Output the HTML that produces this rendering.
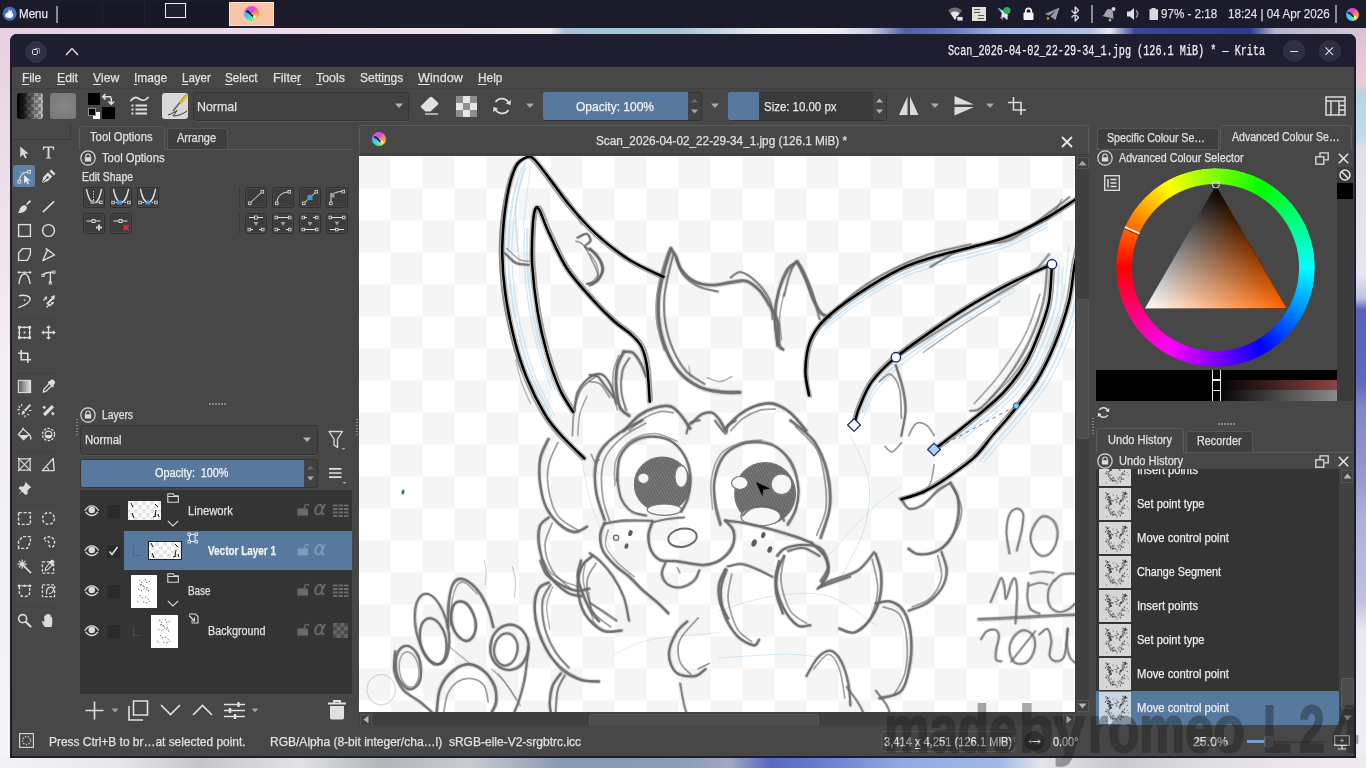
<!DOCTYPE html>
<html lang="en"><head><meta charset="utf-8"><title>Krita</title>
<style>
*{box-sizing:border-box;margin:0;padding:0}
html,body{width:1366px;height:768px;overflow:hidden;background:#ebe6ec}
body{position:relative;font-family:"Liberation Sans",sans-serif;font-size:13px;color:#dcdcdc;-webkit-font-smoothing:antialiased}
.a{position:absolute}
.t{-webkit-text-stroke:.25px currentColor;position:absolute;white-space:nowrap;line-height:16px;height:16px;transform-origin:0 50%}
svg{position:absolute;overflow:visible}
.ic{fill:none;stroke:#dcdcdc;stroke-width:1.4;stroke-linecap:round;stroke-linejoin:round}
.btn{position:absolute;width:22px;height:21px;background:#3c3c3c;border:1px solid #2f2f2f;border-radius:3px;box-shadow:0 0 0 .5px #555 inset}
u{text-decoration:underline;text-underline-offset:2px;text-decoration-thickness:1px}
</style></head><body>
<!-- desktop wallpaper strips -->
<div class="a" style="left:0;top:28px;width:1366px;height:7px;background:linear-gradient(90deg,#e6d0e2 0,#ead6e4 130px,#eee2ea 455px,#efeaec 550px,#a8c0d8 565px,#9ccadb 610px,#a6c6d6 680px,#e6e8ec 760px,#f0f0f2 830px,#cfcfe6 870px,#5060a8 905px,#6676bc 950px,#a2b2e2 1000px,#b4c0e6 1090px,#e8e8f0 1110px,#3a46a0 1135px,#2c3a98 1250px,#b8b4cc 1275px,#d6ccd6 1366px)"></div>
<div class="a" style="left:0;top:28px;width:12px;height:740px;background:linear-gradient(180deg,#e6d0e2 0,#ecdce8 120px,#f2eef2 330px,#f6f4f6 740px)"></div>
<div class="a" style="left:1354px;top:28px;width:12px;height:740px;background:linear-gradient(180deg,#cdc4d2 0,#e4c4d6 16px,#ecccd8 55px,#b8d4e0 66px,#c0dce6 106px,#e0e0ec 122px,#e6e6f0 247px,#c0c4e4 270px,#5a62b8 282px,#6068bc 353px,#8088c8 380px,#9494d0 440px,#b0b0dc 494px,#c0c0e4 572px,#e8e8f2 602px,#f0eef4 740px)"></div>
<div class="a" style="left:0;top:756px;width:1366px;height:12px;background:linear-gradient(90deg,#f4f2f4 0,#e6e6e8 120px,#c4c6c8 200px,#e0e2e4 300px,#b2b6ba 380px,#c8ccd0 470px,#8a9ab2 560px,#8e9cb6 683px,#a0a8c2 730px,#5868c0 770px,#6e80d0 830px,#92a8e2 900px,#a4b8e6 1000px,#e2e4e8 1040px,#c8c8d0 1120px,#dcdce0 1200px,#ece4ea 1280px,#f0eaf0 1366px)"></div>
<!-- top panel -->
<div class="a" style="left:0;top:0;width:1366px;height:28px;background:#1b1b2b"></div>
<svg style="left:2px;top:6px" width="16" height="16" viewBox="0 0 16 16"><circle cx="7.600" cy="7.700" r="7" fill="#3f6fc0"/><path d="M3.200 9.800c0-2.400 1.500-3.600 3.200-3.900l.4-2.600 1.300 2 2.100-1.600-.5 2.700c1.400.8 1.900 2.200 1.400 3.500-.8 1.800-2.600 2.300-4.400 2.200-1.900-.1-3.500-1-3.500-2.300z" fill="#f4f6fa"/></svg>
<div class="t" style="transform:scaleX(0.927);left:19.300px;top:6px;font-size:12.500px;color:#e4e4ea">Menu</div>
<div class="a" style="left:56px;top:6px;width:2px;height:17px;background:#8a8a96"></div>
<div class="a" style="left:60px;top:1px;width:168px;height:26px;background:#171726"></div>
<div class="a" style="left:102px;top:1px;width:1px;height:26px;background:#202032"></div>
<div class="a" style="left:144px;top:1px;width:1px;height:26px;background:#202032"></div>
<div class="a" style="left:186px;top:1px;width:1px;height:26px;background:#202032"></div>
<div class="a" style="left:165px;top:3px;width:21px;height:15px;border:1.5px solid #f0f0f4;background:#1e1e32"></div>
<div class="a" style="left:229px;top:2px;width:45px;height:24px;background:#f8c6a6;border:1px solid #fbe0cc"></div>
<div class="a" style="left:243.5px;top:6px;width:15px;height:15px;border-radius:50%;background:conic-gradient(from 20deg,#f040d0 0,#f8a040 22%,#f0e040 34%,#40e8c0 48%,#38c8f8 66%,#c060f0 82%,#f040d0 100%)"></div><svg style="left:243.5px;top:6px" width="15" height="15" viewBox="0 0 14 14"><path d="M1.500 4.500C3 3.500 4.500 4 5.500 5.500L10 10l-1.200 1.200L4.500 7C3 6.500 2 6 1.500 4.500z" fill="#22223a"/><circle cx="9.600" cy="10" r="1.300" fill="#f4f0f4"/></svg>
<!-- tray -->
<svg style="left:947px;top:6px" width="17" height="16" viewBox="0 0 17 16"><path d="M1 4.500C5 .5 11 .5 15 4.500L8 14z" fill="#6c6c78"/><path d="M3.600 7.200C6 5 10 5 12.400 7.200L8 14z" fill="#e6e6ea"/><rect x="10" y="10.500" width="6" height="4.500" fill="#e6e6ea" stroke="#1b1b2b" stroke-width=".8"/></svg>
<div class="a" style="left:972px;top:7px;width:14px;height:14px;background:#e4e0d8"></div>
<div class="a" style="left:974px;top:9px;width:6px;height:1px;background:#555;box-shadow:0 3px 0 #555,4px 6px 0 #555,4px 9px 0 #555"></div>
<svg style="left:997px;top:6px" width="15" height="16" viewBox="0 0 15 16"><path d="M1 2l4 5-1 6 3-2 3 3 1-5-3-3z" fill="#d8e8f4" stroke="#7aa8d0" stroke-width=".8"/><circle cx="10" cy="4.500" r="3.600" fill="#2fae4a"/><path d="M3 11l3 3" stroke="#d04060" stroke-width="1.200"/></svg>
<svg style="left:1023px;top:7px" width="11" height="14" viewBox="0 0 11 14"><path d="M2.800 6V4a2.700 2.700 0 0 1 5.400 0v2" fill="none" stroke="#f0f0f2" stroke-width="1.800"/><rect x=".5" y="5.500" width="10" height="7.500" rx="1" fill="#f4f4f6"/></svg>
<svg style="left:1044px;top:7px" width="16" height="14" viewBox="0 0 16 14"><path d="M15.500.5L.8 7l4.400 1.600L12 3.500 6.500 9.500 11.500 13z" fill="#9a9aa4"/><circle cx="4" cy="11.500" r="1.200" fill="#e0a020"/></svg>
<svg style="left:1070px;top:6px" width="11" height="16" viewBox="0 0 11 16"><path d="M1.500 4.500l7 7L5.200 15V1l3.300 3.500-7 7" fill="none" stroke="#d4d4da" stroke-width="1.400" stroke-linejoin="round"/></svg>
<div class="a" style="left:1091px;top:5px;width:2px;height:18px;background:#8a8a96"></div>
<svg style="left:1101px;top:6px" width="16" height="16" viewBox="0 0 16 16"><path d="M2 11.500c2-1.500 1.500-4 2.500-6C5.500 3.500 7 3 8 3s2.500.5 3.500 2.500c1 2 .5 4.500 2.500 6z" fill="#a4a4ae" transform="rotate(14 8 8)"/><circle cx="9" cy="14" r="1.500" fill="#a4a4ae"/><circle cx="12.500" cy="3" r="2" fill="#d8d8de"/></svg>
<svg style="left:1126px;top:7px" width="14" height="14" viewBox="0 0 14 14"><path d="M1 4.500h3L8 1v12L4 9.500H1z" fill="#e0e0e4"/><path d="M10 3.500a4.500 4.500 0 0 1 0 7" fill="none" stroke="#8a8a96" stroke-width="1.800"/></svg>
<svg style="left:1149px;top:7px" width="10" height="14" viewBox="0 0 10 14"><path d="M2.500 1h4v1.200H9V13H.5V2.200h2z" fill="#dadade"/></svg>
<div class="t" id="bat" style="transform:scaleX(0.894);left:1161px;top:6px;font-size:13px;color:#dedee4">97% - 2:18</div>
<div class="t" id="clk" style="transform:scaleX(0.899);left:1228px;top:6px;font-size:13px;color:#dedee4">18:24 | 04 Apr 2026</div>
<div class="a" style="left:1335px;top:5px;width:2px;height:18px;background:#8a8a96"></div>
<div class="a" style="left:1345.5px;top:7.5px;width:13px;height:13px;border-radius:50%;background:conic-gradient(from 20deg,#f040d0 0,#f8a040 22%,#f0e040 34%,#40e8c0 48%,#38c8f8 66%,#c060f0 82%,#f040d0 100%)"></div><svg style="left:1345.5px;top:7.5px" width="13" height="13" viewBox="0 0 14 14"><path d="M1.500 4.500C3 3.500 4.500 4 5.500 5.500L10 10l-1.200 1.200L4.500 7C3 6.500 2 6 1.500 4.500z" fill="#22223a"/><circle cx="9.600" cy="10" r="1.300" fill="#f4f0f4"/></svg>
<!-- window -->
<div class="a" style="left:10px;top:34px;width:1346px;height:724px;background:#474748;border-radius:7px 7px 0 0;border:2px solid #1e1e30;border-top:none"></div>
<div class="a" style="left:10px;top:34px;width:1346px;height:33px;background:#1e1e30;border-radius:7px 7px 0 0"></div>
<div class="a" style="left:25px;top:41px;width:22px;height:22px;border-radius:50%;background:#303044"></div>
<div class="a" style="left:32.200px;top:49.300px;width:6px;height:6px;border:1.200px solid #d8d8e0;border-radius:1.800px"></div>
<div class="a" style="left:33.800px;top:47.700px;width:6px;height:6px;border:1.200px solid #d8d8e0;border-left-color:transparent;border-bottom-color:transparent;border-radius:1.800px;opacity:.6"></div>
<svg style="left:65px;top:47px" width="14" height="9" viewBox="0 0 14 9"><path d="M1 8l6-6.500L13 8" fill="none" stroke="#e0e0e6" stroke-width="1.400"/></svg>
<div class="t" id="wtitle" style="transform:scaleX(0.726);left:948px;top:43px;font-family:'Liberation Mono',monospace;font-size:14px;color:#f0f0f4">Scan_2026-04-02_22-29-34_1.jpg (126.1 MiB) * — Krita</div>
<div class="a" style="left:1282.500px;top:40px;width:22px;height:22px;border-radius:50%;background:#303044"></div>
<div class="a" style="left:1289.500px;top:50.700px;width:8px;height:1.200px;background:#e0e0e6"></div>
<div class="a" style="left:1318.500px;top:40px;width:22px;height:22px;border-radius:50%;background:#303044"></div>
<svg style="left:1325.300px;top:47px" width="8.400" height="8.400" viewBox="0 0 10 10"><path d="M.5.500l9 9M9.500.5l-9 9" stroke="#e0e0e6" stroke-width="1.300"/></svg>
<!-- menubar -->
<div class="a" style="left:12px;top:88px;width:1342px;height:1px;background:#3f3f40"></div>
<div class="t mn" style="transform:scaleX(0.918);left:22px"><u>F</u>ile</div>
<div class="t mn" style="transform:scaleX(0.937);left:56.500px"><u>E</u>dit</div>
<div class="t mn" style="transform:scaleX(0.939);left:93px"><u>V</u>iew</div>
<div class="t mn" style="transform:scaleX(0.920);left:134px"><u>I</u>mage</div>
<div class="t mn" style="transform:scaleX(0.884);left:181.500px"><u>L</u>ayer</div>
<div class="t mn" style="transform:scaleX(0.899);left:225px"><u>S</u>elect</div>
<div class="t mn" style="transform:scaleX(0.977);left:272.500px">Filte<u>r</u></div>
<div class="t mn" style="transform:scaleX(0.955);left:315.500px"><u>T</u>ools</div>
<div class="t mn" style="transform:scaleX(0.921);left:360px">Setti<u>n</u>gs</div>
<div class="t mn" style="transform:scaleX(0.968);left:418px"><u>W</u>indow</div>
<div class="t mn" style="transform:scaleX(0.916);left:478px"><u>H</u>elp</div>
<style>.mn{top:70px;font-size:13px;color:#e0e0e0}</style>
<!-- toolbar -->
<div class="a" style="left:17px;top:93px;width:26px;height:26px;border-radius:3px;background:linear-gradient(90deg,#000 0,rgba(0,0,0,.85) 25%,rgba(0,0,0,.15) 80%,rgba(0,0,0,0) 100%),conic-gradient(#bdbdbd 25%,#858585 0 50%,#bdbdbd 0 75%,#858585 0) 0 0/7px 7px"></div>
<div class="a" style="left:50px;top:93px;width:26px;height:26px;border-radius:3px;background:radial-gradient(circle at 50% 50%,#868686,#787878)"></div>
<div class="a" style="left:93px;top:111.500px;width:7px;height:7px;background:#fff"></div>
<div class="a" style="left:88px;top:107.500px;width:8px;height:8px;background:#000;border:1px solid #8a8a8a"></div>
<div class="a" style="left:102px;top:107px;width:12.500px;height:12px;background:#000"></div>
<div class="a" style="left:88px;top:93px;width:12px;height:12px;background:#000"></div>
<svg style="left:102px;top:93px" width="13" height="12" viewBox="0 0 13 12"><path d="M3.500 1L.8 3.800 3.500 6.500M.8 3.800H8.500V5M6.500 8.500L9.300 11.300 12 8.500M9.300 11.300V5" fill="none" stroke="#e0e0e0" stroke-width="1.500"/></svg>
<svg style="left:130px;top:96px" width="20" height="20" viewBox="0 0 20 20"><path d="M1 4.500C4 .5 7 1 9.500 3s6 1.500 8.500-1.500" fill="none" stroke="#e0e0e0" stroke-width="1.800" stroke-linecap="round"/><path d="M5.500 9.500H17M5.500 13.500H17M5.500 17.500H17" stroke="#e0e0e0" stroke-width="1.800"/><path d="M1.500 9.500H3.500M1.500 13.500H3.500M1.500 17.500H3.500" stroke="#e0e0e0" stroke-width="1.800"/></svg>
<div class="a" style="left:162px;top:93px;width:26px;height:26px;border-radius:3px;background:#d9d9d9"></div>
<svg style="left:162px;top:93px" width="26" height="26" viewBox="0 0 26 26"><path d="M6 22c4-1 7-3.500 9-4.500l-4 5.500c5 0 10-2 14-5" fill="none" stroke="#333" stroke-width="1"/><path d="M11 18L24 2" stroke="#555" stroke-width="1.200"/><path d="M17.500 9.500L24 1.500l1.500 1.200-6 8z" fill="#e8c818" stroke="#c8a810" stroke-width=".6"/></svg>
<div class="a" style="left:193px;top:91.500px;width:216px;height:29px;border-radius:3px;background:#424243;border:1px solid #343434;box-shadow:0 1px 0 #545454"></div>
<div class="t" style="transform:scaleX(0.919);left:197px;top:98.500px;font-size:13.500px;color:#e0e0e0">Normal</div>
<svg style="left:394px;top:103px" width="10" height="6" viewBox="0 0 10 6"><path d="M1 .5h8L5 5z" fill="#b4b4b4"/></svg>
<!-- eraser -->
<svg style="left:420px;top:96px" width="20" height="20" viewBox="0 0 20 20"><path d="M9.500 1.500L1.200 9.800a1.200 1.200 0 0 0 0 1.700L5.500 15.500h5L18 8.500a1.200 1.200 0 0 0 0-1.700L12.500 1.500a2 2 0 0 0-3 0z" fill="#e2e2e2"/><path d="M5 18h13" stroke="#e2e2e2" stroke-width="1.300"/></svg>
<div class="a" style="left:456px;top:96px;width:21px;height:21px;background:conic-gradient(#e6e6e6 25%,#8e8e8e 0 50%,#e6e6e6 0 75%,#8e8e8e 0) 0 0/14px 14px"></div>
<svg style="left:492px;top:96px" width="20" height="20" viewBox="0 0 20 20"><path d="M17 8A7.500 7.500 0 0 0 3.500 6M3 12a7.500 7.500 0 0 0 13.500 2" fill="none" stroke="#e0e0e0" stroke-width="1.700"/><path d="M14 7.500l4.500 1.500L19 4zM6 12.500L1.500 11 1 16z" fill="#e0e0e0"/></svg>
<svg style="left:525px;top:103px" width="10" height="6" viewBox="0 0 10 6"><path d="M1 .5h8L5 5z" fill="#a8a8a8"/></svg>
<!-- opacity -->
<div class="a" style="left:542.500px;top:91.500px;width:159px;height:29px;border-radius:3px;background:#424243;border:1px solid #343434"></div>
<div class="a" style="left:543px;top:92px;width:145px;height:28px;background:#56799d;border-radius:2px 0 0 2px"></div>
<div class="t" style="transform:scaleX(0.888);left:576px;top:98.500px;font-size:13.500px;color:#f4f4f4">Opacity: 100%</div>
<svg style="left:690px;top:97px" width="9" height="18" viewBox="0 0 9 18"><path d="M1 5.500L4.500 1.500 8 5.500z" fill="#6a6a6a"/><path d="M1 12.500L4.500 16.500 8 12.500z" fill="#a8a8a8"/></svg>
<svg style="left:710px;top:103px" width="10" height="6" viewBox="0 0 10 6"><path d="M1 .5h8L5 5z" fill="#a8a8a8"/></svg>
<!-- size -->
<div class="a" style="left:727.500px;top:91.500px;width:159px;height:29px;border-radius:3px;background:#3a3a3b;border:1px solid #343434"></div>
<div class="a" style="left:728px;top:92px;width:31px;height:28px;background:#56799d;border-radius:2px 0 0 2px"></div>
<div class="a" style="left:873px;top:92px;width:13px;height:28px;background:#444445"></div>
<div class="t" style="transform:scaleX(0.847);left:764px;top:98.500px;font-size:13.500px;color:#e6e6e6">Size: 10.00 px</div>
<svg style="left:875px;top:97px" width="9" height="18" viewBox="0 0 9 18"><path d="M1 5.500L4.500 1.500 8 5.500z" fill="#b4b4b4"/><path d="M1 12.500L4.500 16.500 8 12.500z" fill="#b4b4b4"/></svg>
<!-- mirror -->
<svg style="left:898px;top:95px" width="22" height="22" viewBox="0 0 22 22"><path d="M9.500 1.500V20H1zM12 1.500V20h8.500z" fill="#dcdcdc"/></svg>
<svg style="left:930px;top:103px" width="10" height="6" viewBox="0 0 10 6"><path d="M1 .5h8L5 5z" fill="#a8a8a8"/></svg>
<svg style="left:953px;top:95px" width="22" height="22" viewBox="0 0 22 22"><path d="M1.500 9.500H21L1.500 1zM1.500 12H21L1.500 20.500z" fill="#dcdcdc"/></svg>
<svg style="left:985px;top:103px" width="10" height="6" viewBox="0 0 10 6"><path d="M1 .5h8L5 5z" fill="#a8a8a8"/></svg>
<svg style="left:1007px;top:96px" width="20" height="20" viewBox="0 0 20 20"><path d="M6.500 1V14H19M1 6.500H14V19" fill="none" stroke="#dcdcdc" stroke-width="1.600"/></svg>
<svg style="left:1325px;top:96px" width="21" height="20" viewBox="0 0 21 20"><rect x="1" y="1" width="19" height="18" fill="none" stroke="#dcdcdc" stroke-width="1.500"/><path d="M1 5h19M6 5v14M14 5v14M14 9.500h6M14 14h6" stroke="#dcdcdc" stroke-width="1.500" fill="none"/></svg>
<!-- toolbox -->
<div class="a" style="left:12px;top:124px;width:59px;height:16px;border:1px solid #3a3a3a;border-top:none;border-left:none"></div>
<div class="a" style="left:13px;top:165px;width:22px;height:22px;border-radius:3px;background:#5d82a6"></div>
<div class="a" style="left:16px;top:318px;width:38px;height:1px;background:#404041"></div>
<div class="a" style="left:16px;top:373px;width:38px;height:1px;background:#404041"></div>
<div class="a" style="left:16px;top:451px;width:38px;height:1px;background:#404041"></div>
<div class="a" style="left:16px;top:505px;width:38px;height:1px;background:#404041"></div>
<div class="a" style="left:16px;top:606px;width:38px;height:1px;background:#404041"></div>
<svg style="left:16.5px;top:144.5px" width="15" height="15" viewBox="0 0 16 16"><path d="M3.500 1.500v11.500l3-3 2.200 4.500 1.800-.9-2.200-4.300h4z" fill="#dcdcdc"/></svg>
<svg style="left:40.5px;top:144.5px" width="15" height="15" viewBox="0 0 16 16"><path d="M2 1.500h12v3.500h-1l-.6-2H9v10.200l1.800.5v.8H5.200v-.8L7 13.200V3H3.600L3 5H2z" fill="#dcdcdc"/></svg>
<svg style="left:16.5px;top:168.5px" width="15" height="15" viewBox="0 0 16 16"><path d="M2.500 13.500C2.500 7 5 3.500 12.500 3" stroke="#dcdcdc" fill="none" stroke-width="1.300"/><path d="M3 3.500H12" stroke="#dcdcdc" fill="none" stroke-width=".8" stroke-dasharray="1.500 1.500"/><rect x="1" y="12" width="3" height="3" fill="#5d82a6" stroke="#e8e8e8" stroke-width=".9"/><rect x="11.500" y="1.500" width="3" height="3" fill="#5d82a6" stroke="#e8e8e8" stroke-width=".9"/><path d="M7.500 6.500v9l2.300-2.300 1.700 3.300 1.400-.7-1.700-3.200h3.200z" fill="#e8e8e8"/></svg>
<svg style="left:40.5px;top:168.5px" width="15" height="15" viewBox="0 0 16 16"><path d="M1 15l1.500-6.500 5-5 4.500 4.500-5 5z" fill="#dcdcdc"/><path d="M1.500 14.500l5-5" stroke="#474748" stroke-width="1"/><circle cx="7" cy="9" r="1.300" fill="#474748"/><path d="M9 2.500l2-2 4.500 4.500-2 2z" fill="#dcdcdc"/></svg>
<svg style="left:16.5px;top:198.5px" width="15" height="15" viewBox="0 0 16 16"><path d="M9.500 5.500l4-4.500 1.700 1.600-4.700 4z" fill="#dcdcdc"/><path d="M8.500 6.500l2 2c.5 2-1.500 4.500-4 5.500s-4.500.5-5.500 1c2-2 1-3.500 2.500-5.500s3.500-3 5-3z" fill="#dcdcdc"/></svg>
<svg style="left:40.5px;top:198.5px" width="15" height="15" viewBox="0 0 16 16"><path d="M2 14L14 2.500" stroke="#dcdcdc" fill="none" stroke-width="1.800"/></svg>
<svg style="left:16.5px;top:222.5px" width="15" height="15" viewBox="0 0 16 16"><rect x="1.700" y="1.700" width="12.600" height="12.600" stroke="#dcdcdc" fill="none" stroke-width="1.500"/></svg>
<svg style="left:40.5px;top:222.5px" width="15" height="15" viewBox="0 0 16 16"><circle cx="8" cy="8" r="6.300" stroke="#dcdcdc" fill="none" stroke-width="1.500"/></svg>
<svg style="left:16.5px;top:246.5px" width="15" height="15" viewBox="0 0 16 16"><path d="M1.700 14.300V6.500L6 1.700h8.300v5.800L11 14.300z" stroke="#dcdcdc" fill="none" stroke-width="1.500" stroke-linejoin="round"/></svg>
<svg style="left:40.5px;top:246.5px" width="15" height="15" viewBox="0 0 16 16"><path d="M5 1.500L14.500 8.500 2 14.500 7 2.800" stroke="#dcdcdc" fill="none" stroke-width="1.500" stroke-linejoin="round"/></svg>
<svg style="left:16.5px;top:269.5px" width="15" height="15" viewBox="0 0 16 16"><path d="M2 15C3 8 5 4 8 4s5 4 6 11" stroke="#dcdcdc" fill="none" stroke-width="1.500"/><path d="M2 2.500H14" stroke="#dcdcdc" fill="none" stroke-width="1"/><circle cx="2" cy="2.500" r="1.300" fill="#dcdcdc"/><circle cx="14" cy="2.500" r="1.300" fill="#dcdcdc"/><circle cx="8" cy="3" r="1.300" fill="#dcdcdc"/></svg>
<svg style="left:40.5px;top:269.5px" width="15" height="15" viewBox="0 0 16 16"><path d="M2 5.500C5 2 9 2 13.500 2.500M10 3v11" stroke="#dcdcdc" fill="none" stroke-width="1.500"/><rect x="1" y="4.500" width="2.500" height="2.500" stroke="#dcdcdc" fill="none" stroke-width=".9"/><rect x="12.500" y="1" width="2.500" height="2.500" stroke="#dcdcdc" fill="none" stroke-width=".9"/><rect x="8.700" y="12.500" width="2.500" height="2.500" stroke="#dcdcdc" fill="none" stroke-width=".9"/></svg>
<svg style="left:16.5px;top:293.5px" width="15" height="15" viewBox="0 0 16 16"><path d="M2 2c6-1.500 12 0 12 3.500S8 12 1.500 14.500" stroke="#dcdcdc" fill="none" stroke-width="1.500"/><circle cx="8" cy="6.500" r=".9" fill="#dcdcdc"/></svg>
<svg style="left:40.5px;top:293.5px" width="15" height="15" viewBox="0 0 16 16"><path d="M15 1l-4.500 2 1 1-6 6 1.500 1.500 6-6 1 1z" fill="#dcdcdc"/><path d="M6.500 2.500l-3 1 .8.800-2.300 2.200 1 1 2.300-2.200.8.800zM14 8.500l-1 3-.8-.8-2.200 2.300-1-1 2.200-2.300-.8-.8zM9.500 10l-.5 3.500-1-.8L6.500 15l-1.300-1.300 2.300-1.500-.8-1z" fill="#dcdcdc"/></svg>
<svg style="left:16.5px;top:324.5px" width="15" height="15" viewBox="0 0 16 16"><rect x="2.500" y="2.500" width="11" height="11" stroke="#dcdcdc" fill="none" stroke-width="1.400"/><rect x="1" y="1" width="3" height="3" fill="#dcdcdc"/><rect x="12" y="1" width="3" height="3" fill="#dcdcdc"/><rect x="1" y="12" width="3" height="3" fill="#dcdcdc"/><rect x="12" y="12" width="3" height="3" fill="#dcdcdc"/><rect x="7" y="7" width="2" height="2" fill="#dcdcdc"/><rect x="7" y="1.500" width="2" height="2" fill="#dcdcdc"/><rect x="7" y="12.500" width="2" height="2" fill="#dcdcdc"/><rect x="1.500" y="7" width="2" height="2" fill="#dcdcdc"/><rect x="12.500" y="7" width="2" height="2" fill="#dcdcdc"/></svg>
<svg style="left:40.5px;top:324.5px" width="15" height="15" viewBox="0 0 16 16"><path d="M8 1v14M1 8h14" stroke="#dcdcdc" fill="none" stroke-width="1.500"/><path d="M8 .3l2.500 3h-5zM8 15.700l2.500-3h-5zM.3 8l3-2.500v5zM15.700 8l-3-2.500v5z" fill="#dcdcdc"/></svg>
<svg style="left:16.5px;top:348.5px" width="15" height="15" viewBox="0 0 16 16"><path d="M4.500 1V11.500H15M1 4.500H11.500V15" stroke="#dcdcdc" fill="none" stroke-width="1.700"/></svg>
<svg style="left:16.5px;top:378.5px" width="15" height="15" viewBox="0 0 16 16"><defs><linearGradient id="tg" x1="0" x2="1"><stop offset="0" stop-color="#5a5a5a"/><stop offset="1" stop-color="#e4e4e4"/></linearGradient></defs><rect x="1.500" y="1.500" width="13" height="13" fill="url(#tg)" stroke="#dcdcdc" stroke-width="1.200"/></svg>
<svg style="left:40.5px;top:378.5px" width="15" height="15" viewBox="0 0 16 16"><path d="M10 3.500l2.500 2.500-7 7-3 1 .5-3z" stroke="#dcdcdc" fill="none" stroke-width="1.300"/><path d="M9 2.500l1.500-1.500c1-1 2.500-.5 3.500.5s1.500 2.500.5 3.500L13 6.500l1 1-1.500 1.500-5.500-5.500L8.500 2z" fill="#dcdcdc"/></svg>
<svg style="left:16.5px;top:402.5px" width="15" height="15" viewBox="0 0 16 16"><path d="M13.500 1l-6 6.500 1.500 1.500 6-6.500z" fill="#dcdcdc"/><path d="M7 8l1.500 1.500c0 1.500-1.500 3-4 3 1-1 .5-2 1-3s1-1.500 1.500-1.500z" fill="#dcdcdc"/><path d="M5 1v2.500M1.500 3l1.800 1.800M.5 7H3M11 11.500l1.800 1.800M8.500 13v2.500M13 8h2.500M1.500 12l1.500-1" stroke="#dcdcdc" fill="none" stroke-width="1.200"/></svg>
<svg style="left:40.5px;top:402.5px" width="15" height="15" viewBox="0 0 16 16"><path d="M2 11.500L11.500 2l2.500 2.500L4.500 14z" fill="#dcdcdc"/><path d="M2.300 3.500l2.200 2.200M11.500 10.300l2.200 2.200" stroke="#dcdcdc" fill="none" stroke-width="2.600"/></svg>
<svg style="left:16.5px;top:426.5px" width="15" height="15" viewBox="0 0 16 16"><path d="M6.500 2L1.500 8l5.500 5.500L13 8z" stroke="#dcdcdc" fill="none" stroke-width="1.400"/><path d="M2.500 8.500h9.500L7 13z" fill="#dcdcdc"/><path d="M13 8c1.500 1.500 2.200 3.500 1.500 5.500" stroke="#dcdcdc" fill="none" stroke-width="1.200"/><path d="M6.500 2V.5" stroke="#dcdcdc" fill="none" stroke-width="1.200"/></svg>
<svg style="left:40.5px;top:426.5px" width="15" height="15" viewBox="0 0 16 16"><circle cx="8" cy="8" r="6.500" stroke="#dcdcdc" fill="none" stroke-width="1.400" stroke-dasharray="2.600 1.500"/><circle cx="8" cy="8" r="3.600" stroke="#dcdcdc" fill="none" stroke-width="1.200"/><path d="M4.500 8.500h7a3.500 3.500 0 0 1-7 0z" fill="#dcdcdc"/></svg>
<svg style="left:16.5px;top:456.5px" width="15" height="15" viewBox="0 0 16 16"><rect x="2" y="2" width="12" height="12" stroke="#dcdcdc" fill="none" stroke-width="1.300"/><path d="M1 1l14 14M15 1L1 15" stroke="#dcdcdc" fill="none" stroke-width="1.300"/></svg>
<svg style="left:40.5px;top:456.5px" width="15" height="15" viewBox="0 0 16 16"><path d="M1.500 14.500H14L13 1.500z" stroke="#dcdcdc" fill="none" stroke-width="1.500" stroke-linejoin="round"/><path d="M8 14.500a5 5 0 0 0-2-4" stroke="#dcdcdc" fill="none" stroke-width="1.200"/></svg>
<svg style="left:16.5px;top:480.5px" width="15" height="15" viewBox="0 0 16 16"><path d="M9 .8l6.200 6.200-1.500.5-2.500 2.500.3 3.500L9 15 5.500 11.500 1 15.500l4-4.500L1.500 7.500l1.800-1.800 3.200.3 2-2.500z" fill="#dcdcdc"/></svg>
<svg style="left:16.5px;top:510.5px" width="15" height="15" viewBox="0 0 16 16"><rect x="1.700" y="1.700" width="12.600" height="12.600" stroke="#dcdcdc" fill="none" stroke-width="1.500" stroke-dasharray="3.500 1.700"/></svg>
<svg style="left:40.5px;top:510.5px" width="15" height="15" viewBox="0 0 16 16"><circle cx="8" cy="8" r="6.300" stroke="#dcdcdc" fill="none" stroke-width="1.500" stroke-dasharray="3 1.900"/></svg>
<svg style="left:16.5px;top:534.5px" width="15" height="15" viewBox="0 0 16 16"><path d="M1.700 14.300V6.500L6 1.700h8.300v5.800L11 14.300z" stroke="#dcdcdc" fill="none" stroke-width="1.500" stroke-dasharray="3.200 1.700"/></svg>
<svg style="left:40.5px;top:534.5px" width="15" height="15" viewBox="0 0 16 16"><path d="M3 4.500C5 2 9 1 12 3s3 6 1.500 8.500S8 13 8.500 9.500 6 6 4 6.500" stroke="#dcdcdc" fill="none" stroke-width="1.500" stroke-dasharray="3 1.600"/></svg>
<svg style="left:16.5px;top:558.5px" width="15" height="15" viewBox="0 0 16 16"><path d="M5.500 5.500L15 15" stroke="#dcdcdc" fill="none" stroke-width="1.800"/><path d="M5.500 .5v10M.5 5.500h10M2 2l7 7M9 2L2 9" stroke="#dcdcdc" fill="none" stroke-width="1.300"/></svg>
<svg style="left:40.5px;top:558.5px" width="15" height="15" viewBox="0 0 16 16"><rect x="1.500" y="3" width="12" height="12" stroke="#dcdcdc" fill="none" stroke-width="1.400" stroke-dasharray="3 1.700"/><path d="M10 3.500l2.500 2.500-5.500 5.500-2.500.8.500-2.800z" fill="#474748" stroke="#dcdcdc" stroke-width="1.100"/><path d="M9.500 2.500l1.200-1.200c.8-.8 2-.6 2.800.2s1 2 .2 2.800L12.500 5.500l.8.800-1.200 1.200L8 3.300l1.200-1.200z" fill="#dcdcdc"/></svg>
<svg style="left:16.5px;top:582.5px" width="15" height="15" viewBox="0 0 16 16"><path d="M2.500 4v6c0 3 2 4.500 5.500 4.500s5.500-1.500 5.500-4.500V4" stroke="#dcdcdc" fill="none" stroke-width="1.500" stroke-dasharray="3 1.700"/><path d="M2 3H14" stroke="#dcdcdc" fill="none" stroke-width="1.100"/><circle cx="2.200" cy="3" r="1.500" fill="#dcdcdc"/><circle cx="13.800" cy="3" r="1.500" fill="#dcdcdc"/><circle cx="8" cy="3" r="1.300" fill="#dcdcdc"/></svg>
<svg style="left:40.5px;top:582.5px" width="15" height="15" viewBox="0 0 16 16"><rect x="1.500" y="2" width="13" height="12.500" stroke="#dcdcdc" fill="none" stroke-width="1.400" stroke-dasharray="3 1.700"/><path d="M6 12c-.5-4 1-7 4-7.500s4 2 3 4-3 3-4.500 2.500" stroke="#dcdcdc" fill="none" stroke-width="1.300"/></svg>
<svg style="left:16.5px;top:612.5px" width="15" height="15" viewBox="0 0 16 16"><circle cx="6" cy="6" r="4.300" stroke="#dcdcdc" fill="none" stroke-width="1.700"/><path d="M9.500 9.500L14.500 14.500" stroke="#dcdcdc" fill="none" stroke-width="2.200" stroke-linecap="round"/></svg>
<svg style="left:40.5px;top:612.5px" width="15" height="15" viewBox="0 0 16 16"><path d="M4 15c-1.500-2-2.500-4-3-6 .8-.8 1.700-.3 2.500 1.200V3.500c0-1 1.600-1 1.600 0V2c0-1.200 1.800-1.200 1.800 0v-.3c0-1.200 1.800-1.200 1.800 0V2.500c0-1.100 1.700-1.100 1.700 0V5c0-1 1.600-1 1.600 0v6c0 1.500-.5 3-1 4z" fill="#dcdcdc"/></svg>
<!-- tool options dock -->
<style>
.tab{position:absolute;border:1px solid #5a5a5b;border-bottom:none;border-radius:3px 3px 0 0}
.tabsel{background:#474748}
.tabun{background:#3e3e3f;border-color:#555556}
.dk{font-size:12px;color:#e0e0e0}
</style>
<div class="a" style="left:165px;top:149px;width:188px;height:1px;background:#5a5a5b"></div>
<div class="tab tabsel" style="left:79px;top:125.500px;width:86px;height:24.500px"></div>
<div class="tab tabun" style="left:166.500px;top:127.500px;width:61.500px;height:21.500px"></div>
<div class="t dk" style="transform:scaleX(0.937);left:90px;top:129px">Tool Options</div>
<div class="t dk" style="transform:scaleX(0.913);left:177px;top:130px">Arrange</div>
<svg style="left:79.5px;top:150px" width="16" height="16" viewBox="0 0 16 16"><circle cx="8" cy="8" r="7.200" fill="none" stroke="#dcdcdc" stroke-width="1.200"/><rect x="4.800" y="7.300" width="6.400" height="4.200" fill="#dcdcdc"/><path d="M5.800 7.500V6.200a2.200 2.200 0 0 1 4.400 0v1.300" fill="none" stroke="#dcdcdc" stroke-width="1.100"/></svg>
<div class="t dk" style="transform:scaleX(0.937);left:102px;top:150px">Tool Options</div>
<div class="t dk" style="transform:scaleX(0.869);left:82px;top:169px">Edit Shape</div>
<!-- buttons row 1 left -->
<div class="btn" style="left:83px;top:187px"></div>
<div class="btn" style="left:110px;top:187px"></div>
<div class="btn" style="left:137px;top:187px"></div>
<div class="btn" style="left:83px;top:213px"></div>
<div class="btn" style="left:110px;top:213px"></div>
<svg style="left:84px;top:188px" width="20" height="19" viewBox="0 0 20 19"><path d="M2.500 1.500C4 8 6 13 8 14.500M17.500 1.500C16.500 7 14.500 12 12 14.500" class="ic" stroke-width="1"/><path d="M9.500 3v9M11 14.500h5" stroke="#e0e0e0" stroke-width="1" stroke-dasharray="1.200 1.500" fill="none"/><rect x="6.500" y="12" width="4" height="4" fill="#9a9a9a"/><rect x="15.500" y="13" width="2.600" height="2.600" fill="#474748" stroke="#e0e0e0" stroke-width=".8"/></svg>
<svg style="left:111px;top:188px" width="20" height="19" viewBox="0 0 20 19"><path d="M2.500 1.500C4 9 7 14.500 10 14.500s6-5.500 7.500-13" class="ic" stroke-width="1"/><path d="M1.500 14.500h17" stroke="#e0e0e0" stroke-width="1" stroke-dasharray="1.500 1.500" fill="none"/><rect x="6" y="12.500" width="5" height="4" fill="#2f9fe0"/><rect x=".8" y="13.200" width="2.600" height="2.600" fill="#474748" stroke="#e0e0e0" stroke-width=".8"/><rect x="16.600" y="13.200" width="2.600" height="2.600" fill="#474748" stroke="#e0e0e0" stroke-width=".8"/></svg>
<svg style="left:138px;top:188px" width="20" height="19" viewBox="0 0 20 19"><path d="M2.500 1.500C4 9 7 14.500 10 14.500s6-5.500 7.500-13" class="ic" stroke-width="1"/><path d="M1.500 14.500h17" stroke="#e0e0e0" stroke-width="1" stroke-dasharray="1.500 1.500" fill="none"/><path d="M7 16.500h6L10 11.500z" fill="#2f9fe0"/><rect x=".8" y="13.200" width="2.600" height="2.600" fill="#474748" stroke="#e0e0e0" stroke-width=".8"/><rect x="16.600" y="13.200" width="2.600" height="2.600" fill="#474748" stroke="#e0e0e0" stroke-width=".8"/></svg>
<svg style="left:84px;top:214px" width="20" height="19" viewBox="0 0 20 19"><path d="M2.500 7h14" stroke="#e0e0e0" stroke-width="1"/><rect x="8" y="5.500" width="3" height="3" fill="#474748" stroke="#e0e0e0" stroke-width=".9"/><path d="M15 10.500v6M12 13.500h6" stroke="#d0d0d0" stroke-width="2"/></svg>
<svg style="left:111px;top:214px" width="20" height="19" viewBox="0 0 20 19"><path d="M2.500 7h14" stroke="#e0e0e0" stroke-width="1"/><rect x="8" y="5.500" width="3" height="3" fill="#474748" stroke="#e0e0e0" stroke-width=".9"/><path d="M12.500 11l5 5M17.500 11l-5 5" stroke="#e0304a" stroke-width="1.800"/></svg>
<!-- right group -->
<div class="a" style="left:238.500px;top:187px;width:1px;height:21px;background:#3a3a3b"></div>
<div class="a" style="left:238.500px;top:213px;width:1px;height:21px;background:#3a3a3b"></div>
<div class="btn" style="left:245px;top:187px"></div>
<div class="btn" style="left:272px;top:187px"></div>
<div class="btn" style="left:299px;top:187px"></div>
<div class="btn" style="left:326px;top:187px"></div>
<div class="btn" style="left:245px;top:213px"></div>
<div class="btn" style="left:272px;top:213px"></div>
<div class="btn" style="left:299px;top:213px"></div>
<div class="btn" style="left:326px;top:213px"></div>
<svg style="left:246px;top:188px" width="20" height="19" viewBox="0 0 20 19"><path d="M4 15L16 4" stroke="#e0e0e0" stroke-width="1"/><rect x="2.500" y="14" width="2.600" height="2.600" fill="#3c3c3c" stroke="#e0e0e0" stroke-width=".8"/><rect x="15" y="2.500" width="2.600" height="2.600" fill="#3c3c3c" stroke="#e0e0e0" stroke-width=".8"/></svg>
<svg style="left:273px;top:188px" width="20" height="19" viewBox="0 0 20 19"><path d="M4 15C4 9 8 4 16 4" stroke="#e0e0e0" stroke-width="1" fill="none"/><rect x="2.500" y="14" width="2.600" height="2.600" fill="#3c3c3c" stroke="#e0e0e0" stroke-width=".8"/><rect x="15" y="2.500" width="2.600" height="2.600" fill="#3c3c3c" stroke="#e0e0e0" stroke-width=".8"/></svg>
<svg style="left:300px;top:188px" width="20" height="19" viewBox="0 0 20 19"><path d="M4 15L16 4" stroke="#e0e0e0" stroke-width="1"/><rect x="2.500" y="14" width="2.600" height="2.600" fill="#3c3c3c" stroke="#e0e0e0" stroke-width=".8"/><rect x="15" y="2.500" width="2.600" height="2.600" fill="#3c3c3c" stroke="#e0e0e0" stroke-width=".8"/><rect x="7.500" y="7" width="5" height="5" fill="#2f9fe0"/></svg>
<svg style="left:327px;top:188px" width="20" height="19" viewBox="0 0 20 19"><path d="M4 15V8C6 5 10 3.500 16 3.500" stroke="#e0e0e0" stroke-width="1" fill="none"/><rect x="2.500" y="14" width="2.600" height="2.600" fill="#3c3c3c" stroke="#e0e0e0" stroke-width=".8"/><rect x="15" y="2.300" width="2.600" height="2.600" fill="#3c3c3c" stroke="#e0e0e0" stroke-width=".8"/><rect x="3" y="5" width="4.500" height="4.500" fill="#9a9a9a"/></svg>
<svg style="left:246px;top:214px" width="20" height="19" viewBox="0 0 20 19"><path d="M3 3.500h14" stroke="#e0e0e0" stroke-width="1"/><rect x="8.500" y="2" width="3" height="3" fill="#3c3c3c" stroke="#e0e0e0" stroke-width=".8"/><path d="M7.500 8h5L10 12z" fill="#a0a0a0"/><path d="M3 15.500h14" stroke="#e0e0e0" stroke-width="1" stroke-dasharray="4 6"/><rect x="2" y="14.200" width="2.600" height="2.600" fill="#3c3c3c" stroke="#e0e0e0" stroke-width=".8"/><rect x="15.400" y="14.200" width="2.600" height="2.600" fill="#3c3c3c" stroke="#e0e0e0" stroke-width=".8"/></svg>
<svg style="left:273px;top:214px" width="20" height="19" viewBox="0 0 20 19"><path d="M3 3.500h14" stroke="#e0e0e0" stroke-width="1"/><rect x="2" y="2.200" width="2.600" height="2.600" fill="#3c3c3c" stroke="#e0e0e0" stroke-width=".8"/><rect x="15.400" y="2.200" width="2.600" height="2.600" fill="#3c3c3c" stroke="#e0e0e0" stroke-width=".8"/><path d="M7.500 8h5L10 12z" fill="#a0a0a0"/><path d="M3 15.500h14" stroke="#e0e0e0" stroke-width="1" stroke-dasharray="4 6"/><rect x="2" y="14.200" width="2.600" height="2.600" fill="#3c3c3c" stroke="#e0e0e0" stroke-width=".8"/><rect x="15.400" y="14.200" width="2.600" height="2.600" fill="#3c3c3c" stroke="#e0e0e0" stroke-width=".8"/></svg>
<svg style="left:300px;top:214px" width="20" height="19" viewBox="0 0 20 19"><path d="M3 3.500h14" stroke="#e0e0e0" stroke-width="1" stroke-dasharray="4 6"/><rect x="2" y="2.200" width="2.600" height="2.600" fill="#3c3c3c" stroke="#e0e0e0" stroke-width=".8"/><rect x="15.400" y="2.200" width="2.600" height="2.600" fill="#3c3c3c" stroke="#e0e0e0" stroke-width=".8"/><path d="M7.500 8h5L10 12z" fill="#a0a0a0"/><path d="M3 15.500h14" stroke="#e0e0e0" stroke-width="1"/><rect x="2" y="14.200" width="2.600" height="2.600" fill="#3c3c3c" stroke="#e0e0e0" stroke-width=".8"/><rect x="15.400" y="14.200" width="2.600" height="2.600" fill="#3c3c3c" stroke="#e0e0e0" stroke-width=".8"/></svg>
<svg style="left:327px;top:214px" width="20" height="19" viewBox="0 0 20 19"><path d="M3 3.500h14" stroke="#e0e0e0" stroke-width="1"/><rect x="2" y="2.200" width="2.600" height="2.600" fill="#3c3c3c" stroke="#e0e0e0" stroke-width=".8"/><rect x="15.400" y="2.200" width="2.600" height="2.600" fill="#3c3c3c" stroke="#e0e0e0" stroke-width=".8"/><path d="M7.500 7.500h5L10 11.500z" fill="#a0a0a0"/><path d="M3 15.500h14" stroke="#e0e0e0" stroke-width="1"/><rect x="8.500" y="14.200" width="2.600" height="2.600" fill="#3c3c3c" stroke="#e0e0e0" stroke-width=".8"/></svg>
<!-- splitter dots -->
<div class="a" style="left:209px;top:403px;width:17px;height:2px;background:repeating-linear-gradient(90deg,#8a8a8a 0 1.500px,transparent 1.500px 3px)"></div>
<!-- layers dock -->
<svg style="left:79.500px;top:407px" width="16" height="16" viewBox="0 0 16 16"><circle cx="8" cy="8" r="7.200" fill="none" stroke="#dcdcdc" stroke-width="1.200"/><rect x="4.800" y="7.300" width="6.400" height="4.200" fill="#dcdcdc"/><path d="M5.800 7.500V6.200a2.200 2.200 0 0 1 4.400 0v1.300" fill="none" stroke="#dcdcdc" stroke-width="1.100"/></svg>
<div class="t dk" style="transform:scaleX(0.860);left:102px;top:407px">Layers</div>
<div class="a" style="left:75.500px;top:419px;width:2px;height:16px;background:repeating-linear-gradient(180deg,#8a8a8a 0 1.500px,transparent 1.500px 3px)"></div>
<div class="a" style="left:355.500px;top:419px;width:2px;height:16px;background:repeating-linear-gradient(180deg,#8a8a8a 0 1.500px,transparent 1.500px 3px)"></div>
<div class="a" style="left:80px;top:425px;width:238px;height:29.500px;border-radius:3px;background:#424243;border:1px solid #343434;box-shadow:0 1px 0 #545454"></div>
<div class="t dk" style="transform:scaleX(0.944);left:84.500px;top:432px">Normal</div>
<svg style="left:302px;top:437px" width="10" height="6" viewBox="0 0 10 6"><path d="M1 .5h8L5 5z" fill="#b4b4b4"/></svg>
<svg style="left:328px;top:430px" width="18" height="20" viewBox="0 0 18 20"><path d="M1 1.500h13.500L9.500 9v8.500L6 15V9z" fill="none" stroke="#dcdcdc" stroke-width="1.300" stroke-linejoin="round"/><path d="M13.500 18h4l-2 2z" fill="#a8a8a8"/></svg>
<div class="a" style="left:80px;top:459px;width:238px;height:28.500px;border-radius:3px;background:#424243;border:1px solid #343434"></div>
<div class="a" style="left:80.500px;top:459.500px;width:223.500px;height:27.500px;background:#56799d;border-radius:2px 0 0 2px"></div>
<div class="t dk" style="transform:scaleX(0.907);left:154.500px;top:465px;color:#f4f4f4;word-spacing:3px">Opacity: 100%</div>
<svg style="left:306px;top:464px" width="9" height="18" viewBox="0 0 9 18"><path d="M1 5.500L4.500 1.500 8 5.500z" fill="#6a6a6a"/><path d="M1 12.500L4.500 16.500 8 12.500z" fill="#a8a8a8"/></svg>
<svg style="left:329px;top:467px" width="18" height="20" viewBox="0 0 18 20"><path d="M0 1.800h12.500M0 6h12.500M0 10.200h12.500" stroke="#e0e0e0" stroke-width="1.700"/><path d="M13.500 15h4l-2 2z" fill="#a8a8a8"/></svg>
<!-- list -->
<div class="a" style="left:79.500px;top:490px;width:272.500px;height:204px;background:#343435"></div>
<div class="a" style="left:123.500px;top:530.500px;width:228.500px;height:39.500px;background:#56799d"></div>
<style>
.eye{position:absolute;left:83.500px;width:15.500px;height:11.500px}
.cb{position:absolute;left:106.500px;width:13.500px;height:13px;background:#2a2a2b}
.th{position:absolute;background:#fff}
.chk{background:conic-gradient(#e4e4e4 25%,#fff 0 50%,#e4e4e4 0 75%,#fff 0) 2px 0/8px 8px}
</style>
<svg class="eye" style="top:504.500px" viewBox="0 0 20 14"><path d="M1 7C4 2 7 .8 10 .8S16 2 19 7" fill="none" stroke="#dcdcdc" stroke-width="1.600"/><path d="M2 8.500C5 12.500 7.500 13.200 10 13.200s5-.7 8-4.700" fill="none" stroke="#dcdcdc" stroke-width="1.500"/><circle cx="10" cy="6" r="4.200" fill="#dcdcdc"/></svg>
<svg class="eye" style="top:544.500px" viewBox="0 0 20 14"><path d="M1 7C4 2 7 .8 10 .8S16 2 19 7" fill="none" stroke="#dcdcdc" stroke-width="1.600"/><path d="M2 8.500C5 12.500 7.500 13.200 10 13.200s5-.7 8-4.700" fill="none" stroke="#dcdcdc" stroke-width="1.500"/><circle cx="10" cy="6" r="4.200" fill="#dcdcdc"/></svg>
<svg class="eye" style="top:584.500px" viewBox="0 0 20 14"><path d="M1 7C4 2 7 .8 10 .8S16 2 19 7" fill="none" stroke="#dcdcdc" stroke-width="1.600"/><path d="M2 8.500C5 12.500 7.500 13.200 10 13.200s5-.7 8-4.700" fill="none" stroke="#dcdcdc" stroke-width="1.500"/><circle cx="10" cy="6" r="4.200" fill="#dcdcdc"/></svg>
<svg class="eye" style="top:624.500px" viewBox="0 0 20 14"><path d="M1 7C4 2 7 .8 10 .8S16 2 19 7" fill="none" stroke="#dcdcdc" stroke-width="1.600"/><path d="M2 8.500C5 12.500 7.500 13.200 10 13.200s5-.7 8-4.700" fill="none" stroke="#dcdcdc" stroke-width="1.500"/><circle cx="10" cy="6" r="4.200" fill="#dcdcdc"/></svg>
<div class="cb" style="top:504.500px"></div>
<div class="cb" style="top:544.500px"></div>
<div class="cb" style="top:584.500px"></div>
<div class="cb" style="top:624.500px"></div>
<svg style="left:108px;top:546px" width="11" height="10" viewBox="0 0 11 10"><path d="M1.500 5.500l2.500 3L9.500 1" fill="none" stroke="#e8e8e8" stroke-width="1.500"/></svg>
<!-- row1 linework -->
<div class="th chk" style="left:128px;top:501px;width:33px;height:18.500px"></div>
<svg style="left:128px;top:501px" width="33" height="19" viewBox="0 0 33 19"><path d="M3 2l2 4M4 12l2 5M27 3l3 3M28 9l-1 6M30 13l1 3M25 16l3-1" stroke="#111" stroke-width="1" fill="none"/></svg>
<svg style="left:167px;top:493px" width="12" height="10" viewBox="0 0 12 10"><path d="M.8 2.800V.8h5.500l1 2h4V9.200H.8zM.8 3.500h10" fill="none" stroke="#dcdcdc" stroke-width="1.100"/></svg>
<svg style="left:167px;top:519.500px" width="12" height="7" viewBox="0 0 12 7"><path d="M.8.800L6 6l5.200-5.200" fill="none" stroke="#dcdcdc" stroke-width="1.200"/></svg>
<div class="t dk" style="transform:scaleX(0.899);left:188px;top:503px;font-size:12.500px">Linework</div>
<!-- row2 vector layer -->
<div class="a" style="left:133px;top:546px;width:8px;height:10px;border-left:1px solid #4a6a8a;border-bottom:1px solid #4a6a8a"></div>
<div class="th chk" style="left:147.500px;top:540.500px;width:34px;height:19.500px;border:1px solid #222"></div>
<svg style="left:148px;top:541px" width="33" height="19" viewBox="0 0 33 19"><path d="M3 2l2 4M4 12l2 5M27 3l3 3M28 9l-1 6M30 13l1 3M25 16l3-1" stroke="#111" stroke-width="1" fill="none"/></svg>
<svg style="left:187px;top:532px" width="12" height="12" viewBox="0 0 12 12"><path d="M2.500 2.500h6.500c-1.500 2.500-1.500 4.500 0 7H2.500z" fill="none" stroke="#e8e8e8" stroke-width="1.100"/><rect x="1" y="1" width="2.600" height="2.600" fill="#56799d" stroke="#e8e8e8" stroke-width=".9"/><rect x="8" y="1" width="2.600" height="2.600" fill="#56799d" stroke="#e8e8e8" stroke-width=".9"/><rect x="1" y="8.400" width="2.600" height="2.600" fill="#56799d" stroke="#e8e8e8" stroke-width=".9"/><rect x="8" y="8.400" width="2.600" height="2.600" fill="#56799d" stroke="#e8e8e8" stroke-width=".9"/></svg>
<div class="t dk" style="transform:scaleX(0.796);left:208px;top:542.500px;font-size:12.500px;font-weight:bold;color:#f2f2f2">Vector Layer 1</div>
<!-- row3 base -->
<div class="th" style="left:131px;top:575px;width:26px;height:33px"></div>
<svg style="left:131px;top:575px" width="26" height="33" viewBox="0 0 26 33"><path d="M8 5l3 2-2 3 4 1M14 4l2 4 3-2M7 14l4 2 3-3 4 3M9 20l2 3 4-1 3 3M6 26l3 2M12 27l5 1 2-2M16 12l2 5M10 9l5 4" stroke="#444" stroke-width=".8" fill="none" stroke-dasharray="1.500 1.800"/></svg>
<svg style="left:167px;top:573px" width="12" height="10" viewBox="0 0 12 10"><path d="M.8 2.800V.8h5.500l1 2h4V9.200H.8zM.8 3.500h10" fill="none" stroke="#dcdcdc" stroke-width="1.100"/></svg>
<svg style="left:167px;top:599.500px" width="12" height="7" viewBox="0 0 12 7"><path d="M.8.800L6 6l5.200-5.200" fill="none" stroke="#dcdcdc" stroke-width="1.200"/></svg>
<div class="t dk" style="transform:scaleX(0.793);left:188.400px;top:583px;font-size:12.500px">Base</div>
<!-- row4 background -->
<div class="a" style="left:133px;top:626px;width:8px;height:10px;border-left:1px solid #4a4a4b;border-bottom:1px solid #4a4a4b"></div>
<div class="th" style="left:151px;top:615px;width:26.500px;height:33px"></div>
<svg style="left:151px;top:615px" width="26" height="33" viewBox="0 0 26 33"><path d="M8 5l3 2-2 3 4 1M14 4l2 4 3-2M7 14l4 2 3-3 4 3M9 20l2 3 4-1 3 3M6 26l3 2M12 27l5 1 2-2M16 12l2 5M10 9l5 4" stroke="#444" stroke-width=".8" fill="none" stroke-dasharray="1.500 1.800"/></svg>
<svg style="left:188px;top:613px" width="11" height="11" viewBox="0 0 11 11"><path d="M1 1h6.500L10 3.500V10H3.500" fill="none" stroke="#dcdcdc" stroke-width="1.100"/><path d="M1 2.500l5.500 5.500M6.500 4.500V8H3" fill="none" stroke="#dcdcdc" stroke-width="1.100"/></svg>
<div class="t dk" style="transform:scaleX(0.863);left:208.400px;top:623px;font-size:12.500px">Background</div>
<svg style="left:297px;top:503px" width="13" height="13" viewBox="0 0 13 13"><rect x=".5" y="5.500" width="10.500" height="7" fill="#6a6a6b"/><path d="M7.500 5.500V3.500a2.300 2.300 0 0 1 4.500-.5" fill="none" stroke="#6a6a6b" stroke-width="1.300"/></svg>
<div class="t" style="left:313.500px;top:500px;font-size:19px;line-height:16px;font-style:italic;color:#6a6a6b;font-family:'DejaVu Sans','Liberation Sans',sans-serif">α</div>
<svg style="left:332.500px;top:504px" width="16" height="13" viewBox="0 0 16 13"><path d="M0 1.500h16M0 5h16M0 8.500h16M0 12h16" stroke="#6a6a6b" stroke-width="2.200" stroke-dasharray="4.500 1"/></svg>
<svg style="left:297px;top:543px" width="13" height="13" viewBox="0 0 13 13"><rect x=".5" y="5.500" width="10.500" height="7" fill="#7f9cb8"/><path d="M7.500 5.500V3.500a2.300 2.300 0 0 1 4.500-.5" fill="none" stroke="#7f9cb8" stroke-width="1.300"/></svg>
<div class="t" style="left:313.500px;top:540px;font-size:19px;line-height:16px;font-style:italic;color:#7f9cb8;font-family:'DejaVu Sans','Liberation Sans',sans-serif">α</div>
<svg style="left:297px;top:583px" width="13" height="13" viewBox="0 0 13 13"><rect x=".5" y="5.500" width="10.500" height="7" fill="#6a6a6b"/><path d="M7.500 5.500V3.500a2.300 2.300 0 0 1 4.500-.5" fill="none" stroke="#6a6a6b" stroke-width="1.300"/></svg>
<div class="t" style="left:313.500px;top:580px;font-size:19px;line-height:16px;font-style:italic;color:#6a6a6b;font-family:'DejaVu Sans','Liberation Sans',sans-serif">α</div>
<svg style="left:332.500px;top:584px" width="16" height="13" viewBox="0 0 16 13"><path d="M0 1.500h16M0 5h16M0 8.500h16M0 12h16" stroke="#6a6a6b" stroke-width="2.200" stroke-dasharray="4.500 1"/></svg>
<svg style="left:297px;top:623px" width="13" height="13" viewBox="0 0 13 13"><rect x=".5" y="5.500" width="10.500" height="7" fill="#6a6a6b"/><path d="M7.500 5.500V3.500a2.300 2.300 0 0 1 4.500-.5" fill="none" stroke="#6a6a6b" stroke-width="1.300"/></svg>
<div class="t" style="left:313.500px;top:620px;font-size:19px;line-height:16px;font-style:italic;color:#6a6a6b;font-family:'DejaVu Sans','Liberation Sans',sans-serif">α</div>
<div class="a" style="left:333px;top:622.5px;width:15px;height:15px;background:conic-gradient(#4a4a4a 25%,#666 0 50%,#4a4a4a 0 75%,#666 0) 0 0/7.500px 7.500px"></div>
<svg style="left:85px;top:701px" width="19" height="19" viewBox="0 0 19 19"><path d="M9.500 .5v18M.5 9.500h18" stroke="#e0e0e0" stroke-width="1.600"/></svg>
<svg style="left:111px;top:708px" width="8" height="5" viewBox="0 0 8 5"><path d="M.5.500h7L4 4.500z" fill="#a0a0a0"/></svg>
<svg style="left:128px;top:700px" width="21" height="21" viewBox="0 0 21 21"><path d="M5.500 1h14v14h-14z" fill="none" stroke="#e0e0e0" stroke-width="1.600"/><path d="M1 6v14h14" fill="none" stroke="#e0e0e0" stroke-width="1.600"/></svg>
<svg style="left:159.500px;top:704px" width="21" height="12" viewBox="0 0 21 12"><path d="M1 1l9.500 9.500L20 1" fill="none" stroke="#e0e0e0" stroke-width="1.600"/></svg>
<svg style="left:191.500px;top:704px" width="21" height="12" viewBox="0 0 21 12"><path d="M1 11l9.500-9.500L20 11" fill="none" stroke="#e0e0e0" stroke-width="1.600"/></svg>
<svg style="left:224px;top:701px" width="21" height="19" viewBox="0 0 21 19"><path d="M0 3.500h21M0 9.500h21M0 15.500h21" stroke="#e0e0e0" stroke-width="1.700"/><path d="M14.500 1v5M6 7v5M11 13v5" stroke="#e0e0e0" stroke-width="2.400"/></svg>
<svg style="left:251px;top:708px" width="8" height="5" viewBox="0 0 8 5"><path d="M.5.500h7L4 4.500z" fill="#a0a0a0"/></svg>
<svg style="left:328px;top:700px" width="18" height="20" viewBox="0 0 18 20"><path d="M0 3.500h18M6 3V1h6v2" stroke="#e0e0e0" stroke-width="1.800" fill="none"/><path d="M2 6h14v11.500a2 2 0 0 1-2 2H4a2 2 0 0 1-2-2z" fill="#e0e0e0"/></svg>
<!-- canvas -->
<div class="a" style="left:359px;top:124.700px;width:729.500px;height:30.800px;background:#474748;border:1px solid #5a5a5b;border-bottom:1px solid #3a3a3b;border-radius:3px 3px 0 0"></div>
<div class="a" style="left:359px;top:155.500px;width:716.200px;height:556.500px;background:conic-gradient(#fff 25%,#f5f5f5 0 50%,#fff 0 75%,#f5f5f5 0) -.25px .5px/64px 64px"></div>
<svg style="left:359px;top:155.500px" width="716.500" height="557" viewBox="359 155.500 716.500 557"><defs><clipPath id="cv"><rect x="359" y="155.500" width="716.500" height="557"/></clipPath></defs><g clip-path="url(#cv)" fill="none" stroke-linecap="round" stroke-linejoin="round">
<defs><pattern id="ht" width="2.600" height="2.600" patternUnits="userSpaceOnUse" patternTransform="rotate(62)"><rect width="2.600" height="2.600" fill="#545454"/><rect width="2.600" height=".8" fill="#707070"/></pattern></defs>
<ellipse cx="662.2" cy="483.8" rx="27.6" ry="27.1" fill="url(#ht)" stroke="#606060" stroke-width="1.500" opacity=".88"/>
<ellipse cx="643.4" cy="477.8" rx="5.7" ry="5.2" fill="#f6f6f6" stroke="#777" stroke-width="1.200"/>
<ellipse cx="681.2" cy="476.0" rx="6.3" ry="10.9" fill="#f6f6f6" stroke="#777" stroke-width="1.200"/>
<ellipse cx="664.3" cy="509.1" rx="17.2" ry="5.7" fill="#f6f6f6" stroke="#777" stroke-width="1.200"/>
<ellipse cx="765.1" cy="493.0" rx="30.2" ry="30.7" fill="url(#ht)" stroke="#606060" stroke-width="1.500" opacity=".88"/>
<ellipse cx="739.8" cy="482.5" rx="8.3" ry="6.5" fill="#f6f6f6" stroke="#777" stroke-width="1.200"/>
<ellipse cx="781.5" cy="483.8" rx="10.4" ry="10.4" fill="#f6f6f6" stroke="#777" stroke-width="1.200"/>
<ellipse cx="760.7" cy="515.9" rx="19.8" ry="9.4" fill="#f6f6f6" stroke="#777" stroke-width="1.200"/>
<ellipse cx="682.5" cy="537.2" rx="14.3" ry="9.1" transform="rotate(-10 682.5 537.2)" stroke="#686868" stroke-width="2"/>
<ellipse cx="630.4" cy="532.6" rx="2.1" ry="3.1" fill="#5c5c5c" stroke="none" transform="rotate(20 630.4 532.6)"/>
<ellipse cx="626.5" cy="545.6" rx="1.9" ry="2.8" fill="#5c5c5c" stroke="none" transform="rotate(20 626.5 545.6)"/>
<ellipse cx="754.1" cy="542.5" rx="2.5" ry="3.8" fill="#5c5c5c" stroke="none" transform="rotate(20 754.1 542.5)"/>
<ellipse cx="763.3" cy="534.6" rx="2.1" ry="3.1" fill="#5c5c5c" stroke="none" transform="rotate(20 763.3 534.6)"/>
<ellipse cx="769.8" cy="549.0" rx="2.3" ry="3.4" fill="#5c5c5c" stroke="none" transform="rotate(20 769.8 549.0)"/>
<circle cx="616.1" cy="537.2" r="2.600" fill="none" stroke="#666" stroke-width="1.200"/>
<path d="M850.3 435.0C853.3 442.3 866.1 463.6 868.5 478.8C871.0 494.0 869.2 510.4 864.9 526.2C860.6 542.0 846.7 565.7 843.0 573.6" stroke="#a8cfe8" stroke-width="1" opacity="0.5"/>
<path d="M719.0 610.1C728.1 607.6 755.5 597.9 773.7 595.5C791.9 593.1 811.4 590.6 828.4 595.5C845.4 600.3 867.9 619.8 875.8 624.7" stroke="#a8cfe8" stroke-width="1" opacity="0.5"/>
<path d="M719.0 657.5C731.2 656.9 771.9 653.2 791.9 653.8C812.0 654.5 831.5 659.9 839.4 661.1" stroke="#a8cfe8" stroke-width="1" opacity="0.5"/>
<path d="M828.4 555.4C835.7 547.5 860.0 519.5 872.2 507.9C884.3 496.4 896.5 489.7 901.4 486.1" stroke="#a8cfe8" stroke-width="1" opacity="0.4"/>
<path d="M581.5 456.9C583.3 465.4 587.0 491.5 592.4 507.9C597.9 524.4 610.7 547.5 614.3 555.4" stroke="#a8cfe8" stroke-width="1" opacity="0.4"/>
<path d="M614.3 653.8C620.4 651.4 633.3 642.9 650.8 639.3C668.2 635.6 707.6 633.2 719.0 632.0" stroke="#a8cfe8" stroke-width="1" opacity="0.4"/>
<path d="M525.0 162.3C523.4 170.2 516.7 192.7 515.8 209.7C514.9 226.7 518.9 255.3 519.5 264.4" stroke="#a8cfe8" stroke-width="1.5" opacity="0.5"/>
<path d="M530.4 165.9L523.1 227.9" stroke="#a8cfe8" stroke-width="1.2" opacity="0.4"/>
<path d="M1069.1 246.2C1067.3 258.3 1064.9 295.4 1058.2 319.1C1051.5 342.8 1033.9 376.9 1029.0 388.4" stroke="#a8cfe8" stroke-width="1.5" opacity="0.4"/>
<path d="M551.0 415.0C548.0 408.9 538.0 391.3 532.8 378.5C527.6 365.7 523.6 353.0 520.0 338.4C516.4 323.8 512.9 306.2 510.9 291.0C508.9 275.8 508.0 262.4 508.3 247.2C508.6 232.0 510.5 213.2 512.7 199.8C515.0 186.4 520.3 172.5 521.8 167.0" stroke="#a8cfe8" stroke-width="2.2" opacity="0.45"/>
<path d="M554.6 415.6C551.6 409.5 541.6 391.9 536.4 379.1C531.2 366.3 527.2 353.6 523.6 339.0C520.0 324.4 516.5 306.8 514.5 291.6C512.5 276.4 511.6 263.0 511.9 247.8C512.2 232.6 514.1 213.8 516.3 200.4C518.6 187.0 523.9 173.1 525.4 167.6" stroke="#a8cfe8" stroke-width="1.2" opacity="0.5"/>
<path d="M554.6 388.4C552.5 382.3 545.4 364.8 541.8 352.0C538.1 339.2 535.1 326.4 532.7 311.8C530.3 297.2 528.1 278.4 527.2 264.4C526.4 250.4 527.5 234.1 527.6 228.0" stroke="#a8cfe8" stroke-width="2.2" opacity="0.45"/>
<path d="M551.6 388.4C549.5 382.3 542.4 364.8 538.8 352.0C535.1 339.2 532.1 326.4 529.7 311.8C527.3 297.2 525.1 278.4 524.2 264.4C523.4 250.4 524.5 234.1 524.6 228.0" stroke="#a8cfe8" stroke-width="1.2" opacity="0.5"/>
<path d="M824.8 325.0C830.3 320.8 844.8 308.1 857.6 299.6C870.4 291.1 888.0 280.4 901.4 274.0C914.8 267.6 925.6 265.0 937.8 261.3C949.9 257.6 962.1 255.4 974.3 252.0C986.5 248.6 998.7 245.8 1010.8 241.0C1022.9 236.2 1041.0 226.0 1047.0 223.0" stroke="#a8cfe8" stroke-width="2.2" opacity="0.45"/>
<path d="M824.8 328.6C830.3 324.4 844.8 311.7 857.6 303.2C870.4 294.7 888.0 284.0 901.4 277.6C914.8 271.2 925.6 268.6 937.8 264.9C949.9 261.2 962.1 259.0 974.3 255.6C986.5 252.2 998.7 249.4 1010.8 244.6C1022.9 239.8 1041.0 229.6 1047.0 226.6" stroke="#a8cfe8" stroke-width="1.2" opacity="0.5"/>
<path d="M862.4 411.6C864.5 407.3 868.9 394.3 875.0 386.0C881.1 377.7 887.9 370.8 898.9 361.7C909.9 352.6 927.7 340.4 940.8 331.4C953.9 322.4 965.1 315.0 977.3 307.7C989.5 300.4 1007.7 291.0 1013.8 287.6" stroke="#a8cfe8" stroke-width="2.2" opacity="0.45"/>
<path d="M864.2 414.6C866.3 410.3 870.7 397.3 876.8 389.0C882.9 380.7 889.7 373.8 900.7 364.7C911.7 355.6 929.5 343.4 942.6 334.4C955.7 325.4 966.9 318.0 979.1 310.7C991.3 303.4 1009.5 294.0 1015.6 290.6" stroke="#a8cfe8" stroke-width="1.2" opacity="0.5"/>
<path d="M1059.0 265.7C1058.5 271.9 1058.0 291.8 1056.0 302.9C1054.0 313.9 1050.9 321.7 1047.0 332.0C1043.1 342.3 1038.5 354.6 1032.4 364.9C1026.3 375.2 1019.0 384.9 1010.5 394.0C1002.0 403.1 989.8 412.4 981.3 419.6C972.8 426.8 963.0 434.1 959.4 437.0" stroke="#a8cfe8" stroke-width="2.2" opacity="0.45"/>
<path d="M1063.2 266.9C1062.7 273.1 1062.2 293.0 1060.2 304.1C1058.2 315.1 1055.1 322.9 1051.2 333.2C1047.3 343.5 1042.7 355.8 1036.6 366.1C1030.5 376.4 1023.2 386.1 1014.7 395.2C1006.2 404.3 994.0 413.6 985.5 420.8C977.0 428.0 967.2 435.3 963.6 438.2" stroke="#a8cfe8" stroke-width="1.2" opacity="0.5"/>
<path d="M1080.6 267.4C1079.7 273.5 1078.3 290.5 1075.0 303.9C1071.7 317.3 1066.0 334.2 1060.5 347.6C1055.0 361.0 1049.6 372.4 1042.3 384.0C1035.0 395.6 1024.1 408.0 1016.8 417.0C1009.5 426.0 1004.6 430.9 998.5 438.0C992.4 445.1 983.3 456.2 980.3 459.9" stroke="#a8cfe8" stroke-width="2.2" opacity="0.45"/>
<path d="M1084.2 269.2C1083.3 275.3 1081.9 292.3 1078.6 305.7C1075.2 319.1 1069.5 336.1 1064.1 349.4C1058.6 362.8 1053.2 374.2 1045.9 385.8C1038.6 397.4 1027.7 409.8 1020.4 418.8C1013.1 427.8 1008.2 432.7 1002.1 439.8C996.0 446.9 986.9 458.1 983.9 461.7" stroke="#a8cfe8" stroke-width="1.2" opacity="0.5"/>
<path d="M525.0 157.9C522.8 160.5 515.8 165.2 512.2 173.2C508.5 181.3 505.2 193.9 503.1 206.1C500.9 218.2 499.6 232.2 499.4 246.2C499.2 260.2 500.2 275.4 502.0 290.0C503.8 304.5 507.1 320.3 510.4 333.7C513.6 347.1 519.5 364.1 521.3 370.2" stroke="#666" stroke-width="1.5" opacity="0.50"/>
<path d="M504.9 252.7C506.7 254.4 511.9 260.7 515.8 262.6C519.8 264.5 526.5 264.1 528.6 264.4" stroke="#777" stroke-width="3.8" opacity="0.22"/>
<path d="M504.5 251.9C506.4 253.5 512.2 259.5 516.2 261.6C520.2 263.6 526.6 263.7 528.7 264.1" stroke="#6a6a6a" stroke-width="1.3" opacity="0.52"/>
<path d="M504.9 252.7C506.7 254.4 511.9 260.7 515.8 262.6C519.8 264.5 526.5 264.1 528.6 264.4" stroke="#666" stroke-width="2.0" opacity="0.83"/>
<path d="M506.7 248.0C508.8 249.8 515.5 256.8 519.5 259.0C523.4 261.1 528.6 260.5 530.4 260.8" stroke="#666" stroke-width="1.5" opacity="0.55"/>
<path d="M577.8 237.1C579.4 236.5 584.8 232.8 587.0 233.4C589.1 234.0 590.9 238.6 590.6 240.7C590.3 242.8 584.2 244.1 585.1 246.2C586.0 248.3 593.2 249.8 596.1 253.5C599.0 257.1 602.6 263.5 602.6 268.1C602.6 272.6 598.7 278.3 596.1 280.8C593.5 283.4 588.5 283.0 587.0 283.4" stroke="#777" stroke-width="3.8" opacity="0.22"/>
<path d="M576.8 237.1C578.3 236.4 583.7 232.8 585.9 233.3C588.0 233.7 589.7 237.4 589.6 239.7C589.4 242.0 584.0 244.8 585.0 247.0C585.9 249.1 592.2 249.1 595.2 252.8C598.2 256.5 602.8 264.5 603.0 269.1C603.1 273.8 598.7 278.4 596.3 280.6C593.8 282.8 589.5 282.0 588.1 282.3" stroke="#6a6a6a" stroke-width="1.3" opacity="0.52"/>
<path d="M577.8 237.1C579.4 236.5 584.8 232.8 587.0 233.4C589.1 234.0 590.9 238.6 590.6 240.7C590.3 242.8 584.2 244.1 585.1 246.2C586.0 248.3 593.2 249.8 596.1 253.5C599.0 257.1 602.6 263.5 602.6 268.1C602.6 272.6 598.7 278.3 596.1 280.8C593.5 283.4 588.5 283.0 587.0 283.4" stroke="#666" stroke-width="2.0" opacity="0.83"/>
<path d="M576.0 240.7C577.2 241.3 580.6 241.0 583.3 244.4C586.0 247.7 590.0 255.6 592.4 260.8C594.9 265.9 597.9 271.4 597.9 275.4C597.9 279.3 593.3 283.0 592.4 284.5" stroke="#666" stroke-width="1.6" opacity="0.66"/>
<path d="M537.7 206.1C540.2 211.5 546.8 227.9 552.3 238.9C557.8 249.8 563.3 261.4 570.5 271.7C577.8 282.1 587.6 291.8 596.1 300.9C604.6 310.0 617.4 322.2 621.6 326.4" stroke="#666" stroke-width="1.5" opacity="0.50"/>
<path d="M548.7 176.9C552.3 181.1 565.1 194.5 570.5 202.4C576.0 210.3 579.7 220.7 581.5 224.3" stroke="#666" stroke-width="1.4" opacity="0.44"/>
<path d="M574.2 410.3C574.8 407.3 575.4 397.6 577.8 392.1C580.3 386.6 584.8 380.5 588.8 377.5C592.7 374.5 597.9 372.6 601.6 373.8C605.2 375.1 608.2 379.9 610.7 384.8C613.1 389.6 615.2 400.0 616.1 403.0" stroke="#777" stroke-width="3.8" opacity="0.22"/>
<path d="M575.1 409.8C575.4 406.7 574.8 396.4 577.0 391.2C579.2 385.9 584.4 381.1 588.3 378.2C592.3 375.4 597.0 373.0 600.8 374.0C604.6 375.1 608.4 379.8 611.0 384.5C613.6 389.1 615.4 399.1 616.3 402.0" stroke="#6a6a6a" stroke-width="1.3" opacity="0.52"/>
<path d="M574.2 410.3C574.8 407.3 575.4 397.6 577.8 392.1C580.3 386.6 584.8 380.5 588.8 377.5C592.7 374.5 597.9 372.6 601.6 373.8C605.2 375.1 608.2 379.9 610.7 384.8C613.1 389.6 615.2 400.0 616.1 403.0" stroke="#666" stroke-width="2.0" opacity="0.83"/>
<path d="M572.4 435.1C572.7 431.0 572.7 418.1 574.2 410.3C575.7 402.5 577.8 394.2 581.5 388.4C585.1 382.7 593.6 377.8 596.1 375.7" stroke="#666" stroke-width="1.8" opacity="0.66"/>
<path d="M577.8 435.1C578.1 431.6 578.1 420.5 579.7 414.0C581.2 407.4 585.7 398.8 587.0 395.7" stroke="#666" stroke-width="1.5" opacity="0.55"/>
<path d="M515.8 359.3C516.7 362.9 518.9 373.8 521.3 381.1C523.7 388.4 528.9 399.4 530.4 403.0" stroke="#666" stroke-width="1.4" opacity="0.44"/>
<path d="M821.1 322.8C827.2 317.3 845.4 299.1 857.6 290.0C869.8 280.8 881.9 274.1 894.1 268.1C906.2 262.0 917.8 257.6 930.5 253.5C943.3 249.4 964.0 245.3 970.7 243.6" stroke="#777" stroke-width="3.6" opacity="0.17"/>
<path d="M820.1 322.1C826.4 316.7 845.8 298.7 858.0 289.8C870.3 280.8 881.6 274.4 893.6 268.3C905.7 262.1 917.5 257.0 930.4 253.0C943.4 249.0 964.6 245.6 971.4 244.1" stroke="#6a6a6a" stroke-width="1.2" opacity="0.39"/>
<path d="M821.1 322.8C827.2 317.3 845.4 299.1 857.6 290.0C869.8 280.8 881.9 274.1 894.1 268.1C906.2 262.0 917.8 257.6 930.5 253.5C943.3 249.4 964.0 245.3 970.7 243.6" stroke="#666" stroke-width="1.9" opacity="0.61"/>
<path d="M974.3 244.4C980.4 243.4 998.6 244.1 1010.8 238.9C1022.9 233.7 1037.5 220.3 1047.3 213.4C1057.0 206.4 1065.5 199.7 1069.1 196.9" stroke="#777" stroke-width="3.6" opacity="0.17"/>
<path d="M973.7 244.5C979.9 243.7 998.5 245.1 1010.9 239.8C1023.2 234.5 1037.9 220.1 1047.8 212.8C1057.7 205.6 1066.6 198.8 1070.3 196.0" stroke="#6a6a6a" stroke-width="1.2" opacity="0.39"/>
<path d="M974.3 244.4C980.4 243.4 998.6 244.1 1010.8 238.9C1022.9 233.7 1037.5 220.3 1047.3 213.4C1057.0 206.4 1065.5 199.7 1069.1 196.9" stroke="#666" stroke-width="1.9" opacity="0.61"/>
<path d="M930.5 266.2C934.8 263.8 948.8 255.1 956.1 251.7C963.4 248.2 971.3 246.5 974.3 245.5" stroke="#777" stroke-width="3.6" opacity="0.18"/>
<path d="M930.4 266.9C934.5 264.3 948.1 255.1 955.2 251.6C962.4 248.1 970.2 246.8 973.2 245.9" stroke="#6a6a6a" stroke-width="1.2" opacity="0.42"/>
<path d="M930.5 266.2C934.8 263.8 948.8 255.1 956.1 251.7C963.4 248.2 971.3 246.5 974.3 245.5" stroke="#666" stroke-width="1.9" opacity="0.66"/>
<path d="M1014.4 233.4C1019.9 231.0 1039.4 224.6 1047.3 218.8C1055.2 213.1 1059.4 202.1 1061.9 198.8" stroke="#666" stroke-width="1.5" opacity="0.50"/>
<path d="M901.4 353.8C908.7 349.2 929.9 335.8 945.1 326.4C960.3 317.0 978.6 305.8 992.6 297.2C1006.5 288.7 1019.6 282.7 1029.0 275.4C1038.4 268.1 1045.7 257.1 1049.1 253.5" stroke="#777" stroke-width="3.6" opacity="0.15"/>
<path d="M902.0 354.0C909.3 349.3 930.9 335.4 946.0 326.0C961.2 316.6 979.2 305.9 993.0 297.5C1006.9 289.0 1019.7 282.4 1029.2 275.3C1038.7 268.1 1046.5 258.0 1049.9 254.5" stroke="#6a6a6a" stroke-width="1.2" opacity="0.35"/>
<path d="M901.4 353.8C908.7 349.2 929.9 335.8 945.1 326.4C960.3 317.0 978.6 305.8 992.6 297.2C1006.5 288.7 1019.6 282.7 1029.0 275.4C1038.4 268.1 1045.7 257.1 1049.1 253.5" stroke="#666" stroke-width="1.9" opacity="0.55"/>
<path d="M923.3 352.0C929.3 347.7 947.0 334.9 959.7 326.4C972.5 317.9 993.2 305.2 999.8 300.9" stroke="#666" stroke-width="1.5" opacity="0.50"/>
<path d="M1047.3 264.4C1046.7 270.5 1046.7 288.1 1043.6 300.9C1040.6 313.7 1035.1 328.3 1029.0 341.0C1022.9 353.8 1015.0 366.5 1007.1 377.5C999.2 388.4 987.7 401.2 981.6 406.7C975.5 412.1 972.5 409.7 970.7 410.3" stroke="#777" stroke-width="3.8" opacity="0.17"/>
<path d="M1047.2 264.8C1046.4 270.9 1045.5 288.5 1042.6 301.4C1039.6 314.3 1035.2 329.6 1029.4 342.2C1023.6 354.8 1015.9 366.2 1007.9 377.0C999.9 387.8 987.7 401.5 981.3 407.1C974.9 412.6 971.5 409.7 969.5 410.2" stroke="#6a6a6a" stroke-width="1.3" opacity="0.39"/>
<path d="M1047.3 264.4C1046.7 270.5 1046.7 288.1 1043.6 300.9C1040.6 313.7 1035.1 328.3 1029.0 341.0C1022.9 353.8 1015.0 366.5 1007.1 377.5C999.2 388.4 987.7 401.2 981.6 406.7C975.5 412.1 972.5 409.7 970.7 410.3" stroke="#666" stroke-width="2.0" opacity="0.61"/>
<path d="M1040.0 293.6C1037.5 300.3 1032.1 320.3 1025.4 333.7C1018.7 347.1 1008.4 362.3 999.8 373.8C991.3 385.4 978.6 398.2 974.3 403.0" stroke="#666" stroke-width="1.8" opacity="0.55"/>
<path d="M1029.0 352.0C1026.0 356.2 1017.5 369.6 1010.8 377.5C1004.1 385.4 992.6 395.7 988.9 399.4" stroke="#666" stroke-width="1.8" opacity="0.55"/>
<path d="M895.9 364.7C897.1 368.7 901.6 380.8 903.2 388.4C904.8 396.0 906.0 402.5 905.7 410.3C905.4 418.1 902.1 431.0 901.4 435.1" stroke="#777" stroke-width="3.8" opacity="0.22"/>
<path d="M895.1 363.8C896.3 368.0 900.5 381.4 902.1 389.1C903.8 396.7 905.0 401.9 904.9 409.7C904.7 417.5 901.7 431.6 901.1 436.0" stroke="#6a6a6a" stroke-width="1.3" opacity="0.52"/>
<path d="M895.9 364.7C897.1 368.7 901.6 380.8 903.2 388.4C904.8 396.0 906.0 402.5 905.7 410.3C905.4 418.1 902.1 431.0 901.4 435.1" stroke="#666" stroke-width="2.0" opacity="0.83"/>
<path d="M879.5 381.1C881.3 379.9 887.1 372.6 890.4 373.8C893.8 375.1 897.7 381.1 899.5 388.4C901.4 395.7 901.1 412.7 901.4 417.6" stroke="#666" stroke-width="1.8" opacity="0.66"/>
<path d="M908.7 435.1C909.9 433.1 912.9 424.8 916.0 423.1C919.0 421.4 923.9 422.9 926.9 424.9C929.9 426.9 933.0 433.4 934.2 435.1" stroke="#666" stroke-width="1.8" opacity="0.66"/>
<path d="M1074.6 275.4C1073.1 281.4 1069.8 298.8 1065.5 311.8C1061.2 324.9 1055.2 341.0 1049.1 353.8C1043.0 366.5 1036.0 378.1 1029.0 388.4C1022.0 398.8 1010.8 411.2 1007.1 415.8" stroke="#666" stroke-width="1.5" opacity="0.44"/>
<path d="M420.8 665.2C421.3 668.4 421.3 671.9 420.9 674.8C420.6 677.7 419.7 680.6 418.6 682.8C417.4 684.9 415.8 686.7 414.2 687.6C412.5 688.6 410.5 688.9 408.7 688.4C406.8 688.0 404.8 686.7 403.1 684.9C401.4 683.2 399.8 680.6 398.6 677.9C397.4 675.2 396.5 671.8 396.1 668.7C395.6 665.6 395.6 662.1 396.0 659.2C396.4 656.3 397.2 653.3 398.4 651.2C399.5 649.0 401.1 647.3 402.7 646.3C404.4 645.4 406.4 645.1 408.3 645.5C410.1 646.0 412.1 647.3 413.8 649.0C415.5 650.8 417.1 653.3 418.3 656.0C419.5 658.8 420.4 662.1 420.8 665.2z" stroke="#777" stroke-width="4.3" opacity="0.22"/>
<path d="M419.8 665.1C420.2 668.6 421.1 672.6 421.1 675.7C421.0 678.8 420.6 681.7 419.3 683.7C418.1 685.6 415.5 686.5 413.6 687.4C411.8 688.4 409.9 689.9 408.3 689.3C406.7 688.8 405.9 686.1 404.2 684.1C402.5 682.1 399.3 679.8 397.8 677.3C396.4 674.7 395.7 671.8 395.4 668.7C395.1 665.6 395.9 661.6 396.2 658.6C396.5 655.7 396.1 653.0 397.2 651.0C398.2 649.0 400.4 647.3 402.4 646.5C404.5 645.7 407.4 645.5 409.3 646.0C411.2 646.5 412.3 647.8 413.8 649.3C415.4 650.8 417.7 652.3 418.7 655.0C419.7 657.6 419.5 661.7 419.8 665.1z" stroke="#6a6a6a" stroke-width="1.4" opacity="0.52"/>
<path d="M420.8 665.2C421.3 668.4 421.3 671.9 420.9 674.8C420.6 677.7 419.7 680.6 418.6 682.8C417.4 684.9 415.8 686.7 414.2 687.6C412.5 688.6 410.5 688.9 408.7 688.4C406.8 688.0 404.8 686.7 403.1 684.9C401.4 683.2 399.8 680.6 398.6 677.9C397.4 675.2 396.5 671.8 396.1 668.7C395.6 665.6 395.6 662.1 396.0 659.2C396.4 656.3 397.2 653.3 398.4 651.2C399.5 649.0 401.1 647.3 402.7 646.3C404.4 645.4 406.4 645.1 408.3 645.5C410.1 646.0 412.1 647.3 413.8 649.0C415.5 650.8 417.1 653.3 418.3 656.0C419.5 658.8 420.4 662.1 420.8 665.2z" stroke="#666" stroke-width="2.2" opacity="0.83"/>
<path d="M418.7 667.7C419.0 670.2 419.1 673.0 418.8 675.4C418.5 677.8 417.8 680.2 417.0 681.9C416.1 683.7 414.9 685.1 413.6 685.9C412.3 686.6 410.8 686.8 409.3 686.5C407.9 686.1 406.3 685.0 405.0 683.6C403.7 682.2 402.4 680.1 401.5 677.9C400.6 675.6 399.8 672.9 399.5 670.4C399.1 667.8 399.1 665.0 399.3 662.6C399.6 660.2 400.3 657.8 401.1 656.1C402.0 654.4 403.2 652.9 404.5 652.2C405.8 651.4 407.4 651.2 408.8 651.6C410.2 651.9 411.8 653.0 413.1 654.4C414.4 655.8 415.7 657.9 416.6 660.2C417.6 662.4 418.3 665.1 418.7 667.7z" stroke="#666" stroke-width="1.6" opacity="0.55"/>
<path d="M447.5 625.4C448.6 630.4 449.2 636.1 449.2 640.9C449.2 645.7 448.6 650.5 447.5 654.1C446.4 657.6 444.7 660.6 442.8 662.2C440.9 663.8 438.3 664.3 435.9 663.6C433.5 663.0 430.7 660.9 428.3 658.2C425.9 655.4 423.4 651.2 421.4 646.8C419.5 642.5 417.8 637.0 416.7 631.9C415.6 626.8 415.0 621.1 415.0 616.3C414.9 611.5 415.6 606.7 416.6 603.2C417.7 599.7 419.4 596.7 421.4 595.1C423.3 593.5 425.8 593.0 428.2 593.6C430.6 594.3 433.4 596.3 435.8 599.1C438.2 601.9 440.8 606.1 442.7 610.4C444.6 614.8 446.4 620.3 447.5 625.4z" stroke="#777" stroke-width="4.1" opacity="0.21"/>
<path d="M448.4 626.0C449.5 631.0 450.3 637.0 450.1 641.6C449.9 646.3 448.6 650.4 447.3 653.8C445.9 657.3 443.9 661.0 441.8 662.5C439.8 663.9 437.2 663.4 434.9 662.6C432.5 661.7 429.9 660.1 427.6 657.3C425.3 654.5 423.1 650.1 421.1 645.8C419.0 641.4 416.6 636.0 415.5 631.1C414.3 626.1 414.0 620.5 414.0 616.0C414.0 611.5 414.2 607.7 415.5 604.1C416.8 600.5 419.6 596.1 421.6 594.3C423.7 592.4 425.3 592.6 427.6 593.3C429.9 593.9 432.9 595.2 435.5 598.2C438.2 601.3 441.4 607.0 443.5 611.6C445.7 616.3 447.3 621.0 448.4 626.0z" stroke="#6a6a6a" stroke-width="1.4" opacity="0.49"/>
<path d="M447.5 625.4C448.6 630.4 449.2 636.1 449.2 640.9C449.2 645.7 448.6 650.5 447.5 654.1C446.4 657.6 444.7 660.6 442.8 662.2C440.9 663.8 438.3 664.3 435.9 663.6C433.5 663.0 430.7 660.9 428.3 658.2C425.9 655.4 423.4 651.2 421.4 646.8C419.5 642.5 417.8 637.0 416.7 631.9C415.6 626.8 415.0 621.1 415.0 616.3C414.9 611.5 415.6 606.7 416.6 603.2C417.7 599.7 419.4 596.7 421.4 595.1C423.3 593.5 425.8 593.0 428.2 593.6C430.6 594.3 433.4 596.3 435.8 599.1C438.2 601.9 440.8 606.1 442.7 610.4C444.6 614.8 446.4 620.3 447.5 625.4z" stroke="#666" stroke-width="2.1" opacity="0.77"/>
<path d="M445.9 638.1C446.6 641.4 446.9 645.1 446.8 648.3C446.6 651.4 446.0 654.6 445.0 657.0C444.0 659.3 442.5 661.4 440.8 662.5C439.2 663.6 437.2 664.0 435.2 663.7C433.3 663.3 431.1 662.1 429.2 660.3C427.3 658.6 425.4 655.9 424.0 653.1C422.6 650.3 421.4 646.7 420.6 643.4C419.9 640.1 419.6 636.4 419.8 633.2C419.9 630.1 420.6 626.9 421.6 624.5C422.6 622.1 424.1 620.1 425.7 619.0C427.4 617.9 429.4 617.5 431.3 617.8C433.3 618.2 435.5 619.4 437.4 621.2C439.2 622.9 441.1 625.6 442.6 628.4C444.0 631.2 445.2 634.7 445.9 638.1z" stroke="#777" stroke-width="4.3" opacity="0.22"/>
<path d="M445.8 638.0C446.3 641.0 446.0 644.2 445.8 647.3C445.6 650.4 445.3 654.0 444.6 656.4C443.9 658.8 443.4 660.3 441.6 661.7C439.9 663.1 436.1 665.1 434.1 664.8C432.0 664.4 430.9 661.6 429.3 659.5C427.6 657.3 425.5 654.4 424.1 652.0C422.7 649.5 421.3 647.6 420.7 644.6C420.1 641.5 420.6 637.1 420.7 633.7C420.7 630.3 420.3 626.5 421.0 624.2C421.7 621.9 423.2 620.6 424.9 619.7C426.7 618.7 429.4 618.3 431.4 618.5C433.4 618.6 435.0 618.7 436.9 620.5C438.9 622.3 441.8 626.6 443.3 629.5C444.8 632.5 445.4 635.1 445.8 638.0z" stroke="#6a6a6a" stroke-width="1.4" opacity="0.52"/>
<path d="M445.9 638.1C446.6 641.4 446.9 645.1 446.8 648.3C446.6 651.4 446.0 654.6 445.0 657.0C444.0 659.3 442.5 661.4 440.8 662.5C439.2 663.6 437.2 664.0 435.2 663.7C433.3 663.3 431.1 662.1 429.2 660.3C427.3 658.6 425.4 655.9 424.0 653.1C422.6 650.3 421.4 646.7 420.6 643.4C419.9 640.1 419.6 636.4 419.8 633.2C419.9 630.1 420.6 626.9 421.6 624.5C422.6 622.1 424.1 620.1 425.7 619.0C427.4 617.9 429.4 617.5 431.3 617.8C433.3 618.2 435.5 619.4 437.4 621.2C439.2 622.9 441.1 625.6 442.6 628.4C444.0 631.2 445.2 634.7 445.9 638.1z" stroke="#666" stroke-width="2.2" opacity="0.83"/>
<path d="M447.8 626.6C448.0 622.2 447.8 607.8 448.8 600.4C449.8 593.0 451.3 585.7 453.9 582.2C456.4 578.7 459.9 577.8 464.0 579.2C468.0 580.5 474.1 585.4 478.1 590.3C482.1 595.2 485.7 602.4 488.2 608.4C490.7 614.5 492.4 623.6 493.2 626.6" stroke="#777" stroke-width="4.6" opacity="0.22"/>
<path d="M448.7 627.3C448.8 622.9 448.8 608.5 449.6 600.9C450.3 593.4 450.9 586.1 453.2 582.2C455.6 578.4 459.7 576.8 463.6 578.0C467.6 579.3 473.0 584.6 477.0 589.7C481.0 594.9 484.7 602.8 487.6 608.9C490.5 615.0 493.2 623.6 494.3 626.5" stroke="#6a6a6a" stroke-width="1.5" opacity="0.52"/>
<path d="M447.8 626.6C448.0 622.2 447.8 607.8 448.8 600.4C449.8 593.0 451.3 585.7 453.9 582.2C456.4 578.7 459.9 577.8 464.0 579.2C468.0 580.5 474.1 585.4 478.1 590.3C482.1 595.2 485.7 602.4 488.2 608.4C490.7 614.5 492.4 623.6 493.2 626.6" stroke="#666" stroke-width="2.4" opacity="0.83"/>
<path d="M450.8 624.6C451.0 620.9 450.8 609.0 451.9 602.4C452.9 595.8 454.7 588.6 456.9 585.2C459.1 581.9 461.6 580.9 465.0 582.2C468.3 583.5 475.1 591.5 477.1 593.3" stroke="#666" stroke-width="1.6" opacity="0.55"/>
<path d="M474.7 617.7C475.4 620.6 475.8 623.8 475.7 626.5C475.6 629.2 475.1 632.0 474.3 634.1C473.4 636.2 472.1 638.0 470.6 639.0C469.2 640.1 467.4 640.5 465.6 640.3C463.8 640.1 461.8 639.1 460.1 637.6C458.4 636.2 456.6 634.0 455.2 631.6C453.9 629.2 452.7 626.2 452.0 623.4C451.3 620.6 450.9 617.3 451.0 614.6C451.1 611.9 451.6 609.1 452.5 607.0C453.3 604.9 454.6 603.1 456.1 602.1C457.5 601.1 459.4 600.6 461.1 600.8C462.9 601.1 464.9 602.0 466.6 603.5C468.3 604.9 470.1 607.1 471.5 609.5C472.8 611.9 474.0 614.9 474.7 617.7z" stroke="#777" stroke-width="4.6" opacity="0.23"/>
<path d="M475.8 618.9C476.7 621.5 477.2 623.8 476.8 626.2C476.4 628.6 474.7 631.4 473.6 633.4C472.4 635.5 471.2 637.0 469.9 638.3C468.6 639.6 467.4 641.4 465.9 641.2C464.4 641.1 462.6 639.1 460.9 637.6C459.2 636.1 457.3 634.6 455.6 632.3C454.0 630.0 451.6 626.6 451.0 623.8C450.4 620.9 451.6 618.1 452.0 615.3C452.3 612.5 452.5 609.0 453.1 607.0C453.6 604.9 454.0 603.7 455.3 602.8C456.6 601.9 458.6 601.5 460.7 601.6C462.8 601.6 466.0 601.7 467.8 603.2C469.5 604.7 469.9 608.0 471.2 610.6C472.6 613.2 474.8 616.3 475.8 618.9z" stroke="#6a6a6a" stroke-width="1.5" opacity="0.55"/>
<path d="M474.7 617.7C475.4 620.6 475.8 623.8 475.7 626.5C475.6 629.2 475.1 632.0 474.3 634.1C473.4 636.2 472.1 638.0 470.6 639.0C469.2 640.1 467.4 640.5 465.6 640.3C463.8 640.1 461.8 639.1 460.1 637.6C458.4 636.2 456.6 634.0 455.2 631.6C453.9 629.2 452.7 626.2 452.0 623.4C451.3 620.6 450.9 617.3 451.0 614.6C451.1 611.9 451.6 609.1 452.5 607.0C453.3 604.9 454.6 603.1 456.1 602.1C457.5 601.1 459.4 600.6 461.1 600.8C462.9 601.1 464.9 602.0 466.6 603.5C468.3 604.9 470.1 607.1 471.5 609.5C472.8 611.9 474.0 614.9 474.7 617.7z" stroke="#666" stroke-width="2.4" opacity="0.86"/>
<path d="M528.5 648.5C528.2 651.7 527.2 655.2 525.7 658.1C524.3 660.9 522.1 663.6 519.8 665.4C517.4 667.3 514.5 668.6 511.7 669.1C509.0 669.6 505.8 669.3 503.2 668.4C500.6 667.4 497.9 665.6 495.9 663.4C493.9 661.1 492.3 658.1 491.3 655.1C490.4 652.0 490.0 648.4 490.3 645.1C490.6 641.9 491.6 638.4 493.0 635.5C494.5 632.7 496.7 630.0 499.0 628.1C501.4 626.3 504.3 625.0 507.1 624.5C509.8 624.0 512.9 624.3 515.6 625.2C518.2 626.2 520.9 628.0 522.8 630.2C524.8 632.5 526.5 635.5 527.5 638.5C528.4 641.6 528.8 645.2 528.5 648.5z" stroke="#777" stroke-width="4.6" opacity="0.22"/>
<path d="M529.0 647.7C528.7 650.8 526.2 654.2 524.8 657.2C523.5 660.3 523.1 664.1 520.7 666.2C518.4 668.3 513.6 669.5 510.9 669.9C508.1 670.3 506.9 669.8 504.4 668.8C501.8 667.7 497.9 666.0 495.6 663.5C493.3 661.0 491.1 656.9 490.4 653.9C489.7 650.9 491.0 648.4 491.4 645.5C491.9 642.6 491.8 639.3 493.1 636.6C494.3 633.8 496.4 631.2 498.9 629.0C501.3 626.9 505.2 624.5 507.8 623.8C510.5 623.1 512.6 623.6 515.0 624.7C517.4 625.8 520.2 628.2 522.2 630.4C524.2 632.7 525.7 635.5 526.9 638.3C528.0 641.2 529.4 644.5 529.0 647.7z" stroke="#6a6a6a" stroke-width="1.5" opacity="0.52"/>
<path d="M528.5 648.5C528.2 651.7 527.2 655.2 525.7 658.1C524.3 660.9 522.1 663.6 519.8 665.4C517.4 667.3 514.5 668.6 511.7 669.1C509.0 669.6 505.8 669.3 503.2 668.4C500.6 667.4 497.9 665.6 495.9 663.4C493.9 661.1 492.3 658.1 491.3 655.1C490.4 652.0 490.0 648.4 490.3 645.1C490.6 641.9 491.6 638.4 493.0 635.5C494.5 632.7 496.7 630.0 499.0 628.1C501.4 626.3 504.3 625.0 507.1 624.5C509.8 624.0 512.9 624.3 515.6 625.2C518.2 626.2 520.9 628.0 522.8 630.2C524.8 632.5 526.5 635.5 527.5 638.5C528.4 641.6 528.8 645.2 528.5 648.5z" stroke="#666" stroke-width="2.4" opacity="0.83"/>
<path d="M517.5 650.4C517.2 652.8 516.4 655.2 515.4 657.2C514.4 659.2 512.9 661.1 511.4 662.3C509.9 663.6 508.0 664.5 506.3 664.8C504.6 665.1 502.7 664.8 501.2 664.0C499.6 663.3 498.1 661.9 497.0 660.3C495.9 658.7 495.0 656.5 494.5 654.3C494.1 652.1 494.0 649.5 494.4 647.2C494.7 644.9 495.5 642.4 496.5 640.4C497.5 638.4 499.0 636.6 500.5 635.3C502.0 634.0 503.9 633.1 505.6 632.9C507.3 632.6 509.2 632.8 510.7 633.6C512.3 634.3 513.8 635.7 514.9 637.3C516.0 639.0 516.9 641.2 517.4 643.3C517.8 645.5 517.9 648.1 517.5 650.4z" stroke="#777" stroke-width="4.1" opacity="0.21"/>
<path d="M516.7 651.4C516.4 653.8 515.9 655.1 515.1 657.1C514.2 659.1 513.1 661.9 511.6 663.3C510.1 664.7 507.9 665.6 506.2 665.8C504.4 665.9 502.7 665.2 501.2 664.1C499.7 663.0 498.2 660.9 497.0 659.1C495.9 657.4 495.0 655.4 494.4 653.5C493.7 651.7 492.9 650.1 493.2 647.9C493.4 645.7 494.4 642.4 495.7 640.3C497.0 638.3 499.4 636.7 501.0 635.4C502.6 634.2 503.5 633.1 505.1 632.9C506.8 632.7 509.4 633.5 510.9 634.3C512.3 635.0 513.0 636.1 514.0 637.5C515.0 638.9 516.3 640.5 516.8 642.8C517.2 645.1 516.9 649.0 516.7 651.4z" stroke="#6a6a6a" stroke-width="1.4" opacity="0.49"/>
<path d="M517.5 650.4C517.2 652.8 516.4 655.2 515.4 657.2C514.4 659.2 512.9 661.1 511.4 662.3C509.9 663.6 508.0 664.5 506.3 664.8C504.6 665.1 502.7 664.8 501.2 664.0C499.6 663.3 498.1 661.9 497.0 660.3C495.9 658.7 495.0 656.5 494.5 654.3C494.1 652.1 494.0 649.5 494.4 647.2C494.7 644.9 495.5 642.4 496.5 640.4C497.5 638.4 499.0 636.6 500.5 635.3C502.0 634.0 503.9 633.1 505.6 632.9C507.3 632.6 509.2 632.8 510.7 633.6C512.3 634.3 513.8 635.7 514.9 637.3C516.0 639.0 516.9 641.2 517.4 643.3C517.8 645.5 517.9 648.1 517.5 650.4z" stroke="#666" stroke-width="2.1" opacity="0.77"/>
<path d="M528.2 646.8C527.9 649.8 527.3 658.9 526.5 665.0C525.8 671.0 524.9 677.1 523.5 683.1C522.2 689.2 520.0 696.6 518.5 701.3C517.0 706.0 515.1 709.7 514.4 711.4" stroke="#777" stroke-width="4.3" opacity="0.21"/>
<path d="M528.8 646.8C528.5 649.9 527.4 659.6 526.7 665.6C526.0 671.6 525.8 677.0 524.5 683.0C523.2 689.0 520.4 696.5 518.7 701.3C517.1 706.1 515.2 710.1 514.5 711.9" stroke="#6a6a6a" stroke-width="1.4" opacity="0.49"/>
<path d="M528.2 646.8C527.9 649.8 527.3 658.9 526.5 665.0C525.8 671.0 524.9 677.1 523.5 683.1C522.2 689.2 520.0 696.6 518.5 701.3C517.0 706.0 515.1 709.7 514.4 711.4" stroke="#666" stroke-width="2.2" opacity="0.77"/>
<path d="M436.7 711.4C437.2 707.7 437.6 695.6 439.7 689.2C441.9 682.8 445.5 677.2 449.8 673.0C454.2 668.8 460.6 664.6 466.0 664.0C471.4 663.3 477.4 665.5 482.1 669.0C486.8 672.5 491.9 679.8 494.2 685.2C496.6 690.5 496.6 696.9 496.3 701.3C495.9 705.7 492.9 709.7 492.2 711.4" stroke="#777" stroke-width="4.8" opacity="0.23"/>
<path d="M436.6 711.5C437.1 707.9 437.4 696.5 439.7 690.2C442.0 684.0 445.8 678.4 450.3 673.9C454.9 669.5 461.7 664.0 467.0 663.4C472.4 662.7 477.6 666.6 482.3 670.1C486.9 673.6 492.9 679.1 495.1 684.3C497.2 689.5 496.0 696.7 495.4 701.2C494.7 705.6 491.9 709.2 491.2 710.8" stroke="#6a6a6a" stroke-width="1.6" opacity="0.55"/>
<path d="M436.7 711.4C437.2 707.7 437.6 695.6 439.7 689.2C441.9 682.8 445.5 677.2 449.8 673.0C454.2 668.8 460.6 664.6 466.0 664.0C471.4 663.3 477.4 665.5 482.1 669.0C486.8 672.5 491.9 679.8 494.2 685.2C496.6 690.5 496.6 696.9 496.3 701.3C495.9 705.7 492.9 709.7 492.2 711.4" stroke="#666" stroke-width="2.5" opacity="0.86"/>
<path d="M443.8 711.4C444.5 708.4 445.5 698.3 447.8 693.2C450.2 688.2 453.9 683.6 457.9 681.1C461.9 678.6 467.7 677.4 472.0 678.1C476.4 678.8 481.5 681.3 484.2 685.2C486.8 689.0 487.5 698.6 488.2 701.3" stroke="#666" stroke-width="1.8" opacity="0.61"/>
<path d="M395.3 650.8C395.2 654.2 393.0 664.6 394.3 671.0C395.7 677.4 399.2 684.1 403.4 689.2C407.6 694.2 414.8 697.6 419.6 701.3C424.3 705.0 429.6 709.7 431.7 711.4" stroke="#777" stroke-width="4.3" opacity="0.22"/>
<path d="M394.3 651.2C394.4 654.7 393.6 665.6 395.0 672.0C396.4 678.4 398.4 685.0 402.6 689.7C406.7 694.5 414.9 696.6 419.9 700.4C424.9 704.2 430.5 710.5 432.6 712.5" stroke="#6a6a6a" stroke-width="1.4" opacity="0.50"/>
<path d="M395.3 650.8C395.2 654.2 393.0 664.6 394.3 671.0C395.7 677.4 399.2 684.1 403.4 689.2C407.6 694.2 414.8 697.6 419.6 701.3C424.3 705.0 429.6 709.7 431.7 711.4" stroke="#666" stroke-width="2.2" opacity="0.79"/>
<path d="M447.8 644.8C449.8 646.5 455.9 651.5 459.9 654.9C464.0 658.2 470.0 663.3 472.0 665.0" stroke="#666" stroke-width="1.4" opacity="0.44"/>
<path d="M492.2 669.0C494.2 671.0 500.3 676.1 504.3 681.1C508.4 686.2 514.4 696.3 516.4 699.3" stroke="#666" stroke-width="1.5" opacity="0.50"/>
<path d="M498.3 673.0C500.3 675.7 506.7 683.8 510.4 689.2C514.1 694.6 518.8 702.6 520.5 705.3" stroke="#666" stroke-width="1.4" opacity="0.44"/>
<path d="M395.3 689.2C395.3 691.4 394.8 693.8 393.9 695.8C393.0 697.7 391.6 699.7 390.0 701.0C388.4 702.4 386.3 703.5 384.3 703.9C382.4 704.4 380.1 704.4 378.1 703.9C376.1 703.5 374.0 702.4 372.4 701.0C370.8 699.7 369.4 697.7 368.5 695.8C367.6 693.8 367.1 691.4 367.1 689.2C367.1 687.0 367.6 684.6 368.5 682.6C369.4 680.6 370.8 678.7 372.4 677.4C374.0 676.0 376.1 674.9 378.1 674.4C380.1 673.9 382.4 673.9 384.3 674.4C386.3 674.9 388.4 676.0 390.0 677.4C391.6 678.7 393.0 680.6 393.9 682.6C394.8 684.6 395.3 687.0 395.3 689.2z" stroke="#666" stroke-width="1.2" opacity="0.24"/>
<path d="M540.7 560.0C541.7 562.4 543.4 570.1 546.7 574.1C550.1 578.2 555.8 581.5 560.9 584.2C565.9 586.9 572.3 589.6 577.0 590.3C581.7 591.0 587.1 588.6 589.1 588.3" stroke="#777" stroke-width="4.6" opacity="0.22"/>
<path d="M540.0 561.1C541.1 563.3 542.8 570.1 546.5 574.1C550.2 578.1 557.1 582.4 562.0 585.0C567.0 587.7 571.7 589.6 576.2 590.1C580.7 590.6 587.0 588.2 589.2 587.9" stroke="#6a6a6a" stroke-width="1.5" opacity="0.52"/>
<path d="M540.7 560.0C541.7 562.4 543.4 570.1 546.7 574.1C550.1 578.2 555.8 581.5 560.9 584.2C565.9 586.9 572.3 589.6 577.0 590.3C581.7 591.0 587.1 588.6 589.1 588.3" stroke="#666" stroke-width="2.4" opacity="0.83"/>
<path d="M543.7 560.0C544.9 562.0 547.2 568.6 550.8 572.1C554.3 575.6 560.2 578.8 564.9 581.2C569.6 583.5 576.7 585.4 579.0 586.2" stroke="#666" stroke-width="1.6" opacity="0.55"/>
<path d="M548.7 582.2C547.1 583.2 541.0 584.2 538.7 588.3C536.3 592.3 534.6 599.4 534.6 606.4C534.6 613.5 536.3 622.9 538.7 630.6C541.0 638.4 544.7 646.5 548.7 652.9C552.8 659.2 557.5 664.6 562.9 669.0C568.3 673.4 575.0 677.1 581.0 679.1C587.1 681.1 596.0 680.8 599.0 681.1" stroke="#777" stroke-width="4.8" opacity="0.23"/>
<path d="M548.0 581.8C546.5 582.7 541.4 583.0 539.2 587.1C537.0 591.2 535.0 599.1 534.7 606.3C534.5 613.5 535.1 622.5 537.5 630.2C539.9 638.0 545.0 646.2 549.0 652.9C553.1 659.5 556.4 665.6 561.8 670.2C567.3 674.7 575.7 678.5 581.7 680.2C587.8 682.0 595.3 680.5 598.1 680.6" stroke="#6a6a6a" stroke-width="1.6" opacity="0.55"/>
<path d="M548.7 582.2C547.1 583.2 541.0 584.2 538.7 588.3C536.3 592.3 534.6 599.4 534.6 606.4C534.6 613.5 536.3 622.9 538.7 630.6C541.0 638.4 544.7 646.5 548.7 652.9C552.8 659.2 557.5 664.6 562.9 669.0C568.3 673.4 575.0 677.1 581.0 679.1C587.1 681.1 596.0 680.8 599.0 681.1" stroke="#666" stroke-width="2.5" opacity="0.86"/>
<path d="M550.8 584.2C549.4 586.9 543.7 593.3 542.7 600.4C541.7 607.4 542.7 618.2 544.7 626.6C546.7 635.0 550.8 644.1 554.8 650.8C558.8 657.6 566.6 664.3 568.9 667.0" stroke="#777" stroke-width="3.6" opacity="0.18"/>
<path d="M549.7 584.9C548.4 587.3 543.0 592.4 542.1 599.5C541.3 606.6 542.3 619.1 544.5 627.6C546.8 636.1 551.6 643.5 555.6 650.3C559.5 657.0 566.0 665.0 568.1 668.0" stroke="#6a6a6a" stroke-width="1.2" opacity="0.42"/>
<path d="M550.8 584.2C549.4 586.9 543.7 593.3 542.7 600.4C541.7 607.4 542.7 618.2 544.7 626.6C546.7 635.0 550.8 644.1 554.8 650.8C558.8 657.6 566.6 664.3 568.9 667.0" stroke="#666" stroke-width="1.9" opacity="0.66"/>
<path d="M552.8 586.2C551.8 589.3 547.2 597.3 546.7 604.4C546.2 611.5 549.3 624.6 549.8 628.6" stroke="#666" stroke-width="1.5" opacity="0.50"/>
<path d="M581.0 560.0C580.5 562.7 577.7 570.4 578.0 576.1C578.4 581.9 580.9 588.6 583.1 594.3C585.2 600.0 588.5 606.1 591.1 610.5C593.8 614.8 597.7 618.9 599.0 620.6" stroke="#777" stroke-width="4.6" opacity="0.22"/>
<path d="M581.2 560.5C580.5 562.9 576.6 569.5 577.0 575.1C577.4 580.7 581.3 588.1 583.5 594.1C585.7 600.2 587.5 607.0 590.1 611.5C592.7 616.0 597.8 619.7 599.3 621.3" stroke="#6a6a6a" stroke-width="1.5" opacity="0.52"/>
<path d="M581.0 560.0C580.5 562.7 577.7 570.4 578.0 576.1C578.4 581.9 580.9 588.6 583.1 594.3C585.2 600.0 588.5 606.1 591.1 610.5C593.8 614.8 597.7 618.9 599.0 620.6" stroke="#666" stroke-width="2.4" opacity="0.83"/>
<path d="M585.1 564.0C584.7 566.7 582.4 574.1 583.1 580.2C583.7 586.2 588.1 597.0 589.1 600.4" stroke="#666" stroke-width="1.6" opacity="0.55"/>
<path d="M560.9 673.0C559.5 675.1 554.6 680.4 552.8 685.2C550.9 689.9 550.1 696.9 549.8 701.3C549.4 705.7 550.6 709.7 550.8 711.4" stroke="#777" stroke-width="4.6" opacity="0.22"/>
<path d="M559.9 673.9C558.5 675.9 553.4 681.5 551.7 686.0C550.0 690.5 549.8 696.5 549.6 700.9C549.5 705.3 550.7 710.5 550.9 712.4" stroke="#6a6a6a" stroke-width="1.5" opacity="0.52"/>
<path d="M560.9 673.0C559.5 675.1 554.6 680.4 552.8 685.2C550.9 689.9 550.1 696.9 549.8 701.3C549.4 705.7 550.6 709.7 550.8 711.4" stroke="#666" stroke-width="2.4" opacity="0.83"/>
<path d="M564.9 675.1C563.7 677.4 559.3 683.1 557.8 689.2C556.3 695.2 556.1 707.7 555.8 711.4" stroke="#777" stroke-width="3.6" opacity="0.18"/>
<path d="M564.3 674.2C563.3 676.6 559.5 682.5 557.9 688.6C556.3 694.6 555.4 706.9 554.9 710.6" stroke="#6a6a6a" stroke-width="1.2" opacity="0.42"/>
<path d="M564.9 675.1C563.7 677.4 559.3 683.1 557.8 689.2C556.3 695.2 556.1 707.7 555.8 711.4" stroke="#666" stroke-width="1.9" opacity="0.66"/>
<path d="M484.2 560.0C484.5 562.0 486.0 568.1 486.2 572.1C486.3 576.1 485.3 582.2 485.2 584.2" stroke="#666" stroke-width="1.2" opacity="0.28"/>
<path d="M512.4 566.1C512.9 568.4 515.1 575.1 515.4 580.2C515.8 585.2 514.6 593.6 514.4 596.3" stroke="#666" stroke-width="1.2" opacity="0.33"/>
<path d="M548.7 438.6C547.3 441.7 542.2 450.2 540.6 456.9C539.1 463.6 538.8 470.9 539.5 478.8C540.3 486.7 542.0 497.0 545.0 504.3C548.1 511.6 552.9 518.0 557.8 522.5C562.6 527.1 569.3 531.0 574.2 531.7C579.1 532.3 584.8 527.1 587.0 526.2" stroke="#777" stroke-width="4.6" opacity="0.22"/>
<path d="M547.6 437.9C546.4 441.0 541.4 449.7 540.2 456.4C539.0 463.1 539.4 470.4 540.2 478.3C541.0 486.1 542.1 496.3 545.0 503.5C547.9 510.7 552.7 516.9 557.4 521.4C562.2 525.9 568.6 529.7 573.6 530.5C578.6 531.3 585.2 527.0 587.5 526.3" stroke="#6a6a6a" stroke-width="1.5" opacity="0.52"/>
<path d="M548.7 438.6C547.3 441.7 542.2 450.2 540.6 456.9C539.1 463.6 538.8 470.9 539.5 478.8C540.3 486.7 542.0 497.0 545.0 504.3C548.1 511.6 552.9 518.0 557.8 522.5C562.6 527.1 569.3 531.0 574.2 531.7C579.1 532.3 584.8 527.1 587.0 526.2" stroke="#666" stroke-width="2.4" opacity="0.83"/>
<path d="M557.8 442.3C556.3 445.9 550.2 456.3 548.7 464.2C547.1 472.1 547.1 481.2 548.7 489.7C550.2 498.2 552.9 508.6 557.8 515.2C562.6 521.9 574.5 527.4 577.8 529.8" stroke="#666" stroke-width="1.8" opacity="0.61"/>
<path d="M548.7 517.1C547.1 518.6 541.1 521.0 539.5 526.2C538.0 531.4 538.0 540.2 539.5 548.1C541.1 556.0 544.1 566.3 548.7 573.6C553.2 580.9 561.4 588.2 566.9 591.8C572.4 595.5 579.1 594.9 581.5 595.5" stroke="#777" stroke-width="4.6" opacity="0.22"/>
<path d="M547.9 517.0C546.7 518.4 541.9 520.1 540.6 525.2C539.3 530.4 539.0 539.7 540.3 547.9C541.7 556.1 544.3 567.1 548.7 574.4C553.0 581.7 561.1 588.1 566.6 591.9C572.2 595.6 579.4 595.8 581.9 596.6" stroke="#6a6a6a" stroke-width="1.5" opacity="0.52"/>
<path d="M548.7 517.1C547.1 518.6 541.1 521.0 539.5 526.2C538.0 531.4 538.0 540.2 539.5 548.1C541.1 556.0 544.1 566.3 548.7 573.6C553.2 580.9 561.4 588.2 566.9 591.8C572.4 595.5 579.1 594.9 581.5 595.5" stroke="#666" stroke-width="2.4" opacity="0.83"/>
<path d="M552.3 522.5C551.1 526.2 545.0 536.5 545.0 544.4C545.0 552.3 548.1 562.7 552.3 570.0C556.6 577.2 567.5 585.2 570.5 588.2" stroke="#666" stroke-width="1.8" opacity="0.61"/>
<path d="M592.4 555.4C590.6 557.2 583.9 560.8 581.5 566.3C579.1 571.8 577.2 580.3 577.8 588.2C578.5 596.1 580.9 606.7 585.1 613.7C589.4 620.7 597.3 627.4 603.4 630.1C609.5 632.9 618.6 630.1 621.6 630.1" stroke="#777" stroke-width="4.6" opacity="0.22"/>
<path d="M592.1 556.2C590.4 557.9 584.4 561.4 582.0 566.6C579.6 571.9 577.3 580.1 577.6 587.8C578.0 595.5 579.9 605.7 584.1 612.8C588.2 620.0 596.2 628.0 602.3 630.7C608.5 633.5 617.9 629.6 621.0 629.3" stroke="#6a6a6a" stroke-width="1.5" opacity="0.52"/>
<path d="M592.4 555.4C590.6 557.2 583.9 560.8 581.5 566.3C579.1 571.8 577.2 580.3 577.8 588.2C578.5 596.1 580.9 606.7 585.1 613.7C589.4 620.7 597.3 627.4 603.4 630.1C609.5 632.9 618.6 630.1 621.6 630.1" stroke="#666" stroke-width="2.4" opacity="0.83"/>
<path d="M596.1 562.7C594.6 565.7 587.6 573.0 587.0 580.9C586.4 588.8 588.5 602.5 592.4 610.1C596.4 617.7 607.6 623.8 610.7 626.5" stroke="#666" stroke-width="1.8" opacity="0.61"/>
<path d="M588.8 591.8C589.4 596.1 591.2 611.9 592.4 617.4C593.6 622.8 595.5 623.4 596.1 624.7" stroke="#666" stroke-width="1.5" opacity="0.55"/>
<path d="M687.3 621.0C685.4 622.8 679.4 626.5 676.3 632.0C673.3 637.4 669.0 647.2 669.0 653.8C669.0 660.5 672.1 668.4 676.3 672.1C680.6 675.7 689.7 676.3 694.6 675.7C699.4 675.1 703.7 669.6 705.5 668.4" stroke="#777" stroke-width="4.6" opacity="0.22"/>
<path d="M686.3 621.8C684.8 623.6 680.2 627.1 677.2 632.4C674.3 637.6 668.7 646.6 668.5 653.2C668.3 659.8 671.6 668.3 675.8 672.0C680.0 675.7 688.9 676.0 693.7 675.6C698.6 675.2 703.1 670.5 704.9 669.5" stroke="#6a6a6a" stroke-width="1.5" opacity="0.52"/>
<path d="M687.3 621.0C685.4 622.8 679.4 626.5 676.3 632.0C673.3 637.4 669.0 647.2 669.0 653.8C669.0 660.5 672.1 668.4 676.3 672.1C680.6 675.7 689.7 676.3 694.6 675.7C699.4 675.1 703.7 669.6 705.5 668.4" stroke="#666" stroke-width="2.4" opacity="0.83"/>
<path d="M698.2 617.4C695.2 621.0 683.0 632.0 680.0 639.3C676.9 646.5 678.1 655.4 680.0 661.1C681.8 666.9 689.1 671.8 690.9 673.9" stroke="#666" stroke-width="1.8" opacity="0.61"/>
<path d="M680.0 683.0C680.6 686.1 682.4 695.9 683.6 701.3C684.8 706.6 686.7 712.8 687.3 715.1" stroke="#777" stroke-width="3.6" opacity="0.18"/>
<path d="M681.1 683.1C681.4 686.3 682.1 697.1 683.0 702.4C684.0 707.6 686.2 712.7 686.8 714.8" stroke="#6a6a6a" stroke-width="1.2" opacity="0.42"/>
<path d="M680.0 683.0C680.6 686.1 682.4 695.9 683.6 701.3C684.8 706.6 686.7 712.8 687.3 715.1" stroke="#666" stroke-width="1.9" opacity="0.66"/>
<path d="M698.2 668.4L709.1 663.0" stroke="#666" stroke-width="1.8" opacity="0.66"/>
<path d="M777.4 555.4C778.6 554.1 780.4 549.9 784.7 548.1C788.9 546.2 796.8 544.4 802.9 544.4C809.0 544.4 816.9 544.4 821.1 548.1C825.4 551.7 828.4 560.8 828.4 566.3C828.4 571.8 822.3 578.5 821.1 580.9" stroke="#777" stroke-width="4.6" opacity="0.22"/>
<path d="M776.2 555.1C777.6 553.9 780.3 549.8 784.6 548.1C788.9 546.3 796.3 544.5 802.2 544.4C808.1 544.3 815.7 543.9 819.9 547.5C824.1 551.1 827.4 560.7 827.4 566.1C827.5 571.4 821.3 577.5 820.0 579.7" stroke="#6a6a6a" stroke-width="1.5" opacity="0.52"/>
<path d="M777.4 555.4C778.6 554.1 780.4 549.9 784.7 548.1C788.9 546.2 796.8 544.4 802.9 544.4C809.0 544.4 816.9 544.4 821.1 548.1C825.4 551.7 828.4 560.8 828.4 566.3C828.4 571.8 822.3 578.5 821.1 580.9" stroke="#666" stroke-width="2.4" opacity="0.83"/>
<path d="M779.2 560.8C778.6 564.2 774.9 573.3 775.5 580.9C776.1 588.5 779.2 599.1 782.8 606.4C786.5 613.7 792.9 621.6 797.4 624.7C802.0 627.7 808.1 624.7 810.2 624.7" stroke="#777" stroke-width="4.6" opacity="0.22"/>
<path d="M778.7 560.2C778.2 563.7 775.0 573.2 775.7 581.0C776.5 588.7 779.7 599.4 783.4 606.8C787.1 614.2 793.5 622.7 797.9 625.6C802.4 628.5 807.9 624.5 809.9 624.2" stroke="#6a6a6a" stroke-width="1.5" opacity="0.52"/>
<path d="M779.2 560.8C778.6 564.2 774.9 573.3 775.5 580.9C776.1 588.5 779.2 599.1 782.8 606.4C786.5 613.7 792.9 621.6 797.4 624.7C802.0 627.7 808.1 624.7 810.2 624.7" stroke="#666" stroke-width="2.4" opacity="0.83"/>
<path d="M784.7 555.4C784.0 559.6 780.1 571.8 781.0 580.9C781.9 590.0 785.9 603.1 790.1 610.1C794.4 617.1 803.8 620.7 806.5 622.8" stroke="#666" stroke-width="1.8" opacity="0.61"/>
<path d="M726.3 570.0C725.4 573.0 721.1 580.9 720.8 588.2C720.5 595.5 721.7 605.8 724.5 613.7C727.2 621.6 732.4 630.4 737.2 635.6C742.1 640.8 750.0 644.1 753.7 644.7C757.3 645.3 758.2 640.2 759.1 639.3" stroke="#777" stroke-width="4.6" opacity="0.22"/>
<path d="M727.5 569.1C726.4 572.3 722.0 581.0 721.4 588.5C720.7 596.1 720.6 606.6 723.4 614.5C726.2 622.4 733.0 630.8 738.2 635.9C743.3 641.1 750.9 644.9 754.2 645.5C757.6 646.0 757.6 640.3 758.3 639.3" stroke="#6a6a6a" stroke-width="1.5" opacity="0.52"/>
<path d="M726.3 570.0C725.4 573.0 721.1 580.9 720.8 588.2C720.5 595.5 721.7 605.8 724.5 613.7C727.2 621.6 732.4 630.4 737.2 635.6C742.1 640.8 750.0 644.1 753.7 644.7C757.3 645.3 758.2 640.2 759.1 639.3" stroke="#666" stroke-width="2.4" opacity="0.83"/>
<path d="M731.8 573.6C731.2 577.9 727.2 590.0 728.1 599.1C729.0 608.3 733.3 621.3 737.2 628.3C741.2 635.3 749.4 638.9 751.8 641.1" stroke="#666" stroke-width="1.8" opacity="0.61"/>
<path d="M874.0 551.7C871.3 554.8 865.2 565.1 857.6 570.0C850.0 574.8 835.1 577.9 828.4 580.9C821.7 583.9 819.3 587.0 817.5 588.2" stroke="#777" stroke-width="4.3" opacity="0.21"/>
<path d="M874.0 552.5C871.4 555.6 865.9 565.8 858.3 570.7C850.8 575.6 835.4 578.9 828.6 581.8C821.9 584.8 819.7 587.5 817.9 588.7" stroke="#6a6a6a" stroke-width="1.4" opacity="0.49"/>
<path d="M874.0 551.7C871.3 554.8 865.2 565.1 857.6 570.0C850.0 574.8 835.1 577.9 828.4 580.9C821.7 583.9 819.3 587.0 817.5 588.2" stroke="#666" stroke-width="2.2" opacity="0.77"/>
<path d="M875.8 553.5C876.7 556.9 880.7 566.0 881.3 573.6C881.9 581.2 881.6 591.2 879.5 599.1C877.4 607.0 872.8 615.5 868.5 621.0C864.3 626.5 858.8 630.7 854.0 632.0C849.1 633.2 841.8 628.9 839.4 628.3" stroke="#777" stroke-width="4.6" opacity="0.22"/>
<path d="M875.2 552.4C876.1 555.9 879.9 565.3 880.4 573.3C881.0 581.2 880.5 591.9 878.5 599.9C876.6 607.9 872.7 615.9 868.7 621.3C864.6 626.7 859.1 631.4 854.3 632.4C849.4 633.4 841.8 628.0 839.3 627.1" stroke="#6a6a6a" stroke-width="1.5" opacity="0.52"/>
<path d="M875.8 553.5C876.7 556.9 880.7 566.0 881.3 573.6C881.9 581.2 881.6 591.2 879.5 599.1C877.4 607.0 872.8 615.5 868.5 621.0C864.3 626.5 858.8 630.7 854.0 632.0C849.1 633.2 841.8 628.9 839.4 628.3" stroke="#666" stroke-width="2.4" opacity="0.83"/>
<path d="M872.2 559.0C873.1 563.9 878.0 578.5 877.7 588.2C877.4 597.9 873.7 610.4 870.4 617.4C867.0 624.4 859.7 628.0 857.6 630.1" stroke="#666" stroke-width="1.8" opacity="0.61"/>
<path d="M875.8 602.8C878.3 602.5 885.9 599.7 890.4 601.0C895.0 602.2 899.8 604.9 903.2 610.1C906.5 615.2 909.3 623.4 910.5 632.0C911.7 640.5 912.0 651.4 910.5 661.1C909.0 670.9 906.5 684.2 901.4 690.3C896.2 696.4 883.1 696.4 879.5 697.6" stroke="#777" stroke-width="4.6" opacity="0.22"/>
<path d="M876.6 603.4C878.9 603.0 885.9 600.1 890.4 601.0C894.9 602.0 900.1 604.0 903.6 609.0C907.0 614.1 910.1 622.8 911.1 631.4C912.0 640.0 911.0 650.9 909.5 660.6C907.9 670.3 906.8 683.2 901.9 689.6C897.0 696.0 883.7 697.2 880.1 698.8" stroke="#6a6a6a" stroke-width="1.5" opacity="0.52"/>
<path d="M875.8 602.8C878.3 602.5 885.9 599.7 890.4 601.0C895.0 602.2 899.8 604.9 903.2 610.1C906.5 615.2 909.3 623.4 910.5 632.0C911.7 640.5 912.0 651.4 910.5 661.1C909.0 670.9 906.5 684.2 901.4 690.3C896.2 696.4 883.1 696.4 879.5 697.6" stroke="#666" stroke-width="2.4" opacity="0.83"/>
<path d="M883.1 606.4C885.9 607.6 895.6 608.3 899.5 613.7C903.5 619.2 905.9 629.5 906.8 639.3C907.8 649.0 907.1 663.0 905.0 672.1C902.9 681.2 895.9 690.3 894.1 694.0" stroke="#666" stroke-width="1.8" opacity="0.61"/>
<path d="M806.5 675.7C808.4 672.7 813.5 661.7 817.5 657.5C821.4 653.2 826.3 649.6 830.2 650.2C834.2 650.8 838.1 655.7 841.2 661.1C844.2 666.6 847.0 675.7 848.5 683.0C850.0 690.3 850.0 701.3 850.3 704.9" stroke="#777" stroke-width="4.3" opacity="0.21"/>
<path d="M806.5 675.4C808.3 672.5 813.4 662.1 817.4 657.9C821.5 653.8 826.9 650.1 830.9 650.5C834.9 650.8 838.7 654.8 841.5 660.1C844.3 665.4 846.1 675.0 847.6 682.4C849.2 689.8 850.3 700.8 850.9 704.4" stroke="#6a6a6a" stroke-width="1.4" opacity="0.49"/>
<path d="M806.5 675.7C808.4 672.7 813.5 661.7 817.5 657.5C821.4 653.2 826.3 649.6 830.2 650.2C834.2 650.8 838.1 655.7 841.2 661.1C844.2 666.6 847.0 675.7 848.5 683.0C850.0 690.3 850.0 701.3 850.3 704.9" stroke="#666" stroke-width="2.2" opacity="0.77"/>
<path d="M813.8 668.4C816.3 666.0 824.2 653.8 828.4 653.8C832.7 653.8 836.6 661.1 839.4 668.4C842.1 675.7 843.9 692.7 844.8 697.6" stroke="#666" stroke-width="1.6" opacity="0.61"/>
<path d="M846.7 686.7C848.5 689.1 854.6 696.5 857.6 701.3C860.6 706.0 863.7 712.8 864.9 715.1" stroke="#777" stroke-width="3.6" opacity="0.18"/>
<path d="M846.8 685.5C848.4 688.0 853.5 695.7 856.5 700.7C859.6 705.7 863.8 713.1 865.3 715.6" stroke="#6a6a6a" stroke-width="1.2" opacity="0.42"/>
<path d="M846.7 686.7C848.5 689.1 854.6 696.5 857.6 701.3C860.6 706.0 863.7 712.8 864.9 715.1" stroke="#666" stroke-width="1.9" opacity="0.66"/>
<path d="M875.8 690.3C877.7 692.7 884.3 700.8 886.8 704.9C889.2 709.0 889.8 713.4 890.4 715.1" stroke="#777" stroke-width="3.6" opacity="0.18"/>
<path d="M876.3 689.8C878.0 692.3 884.5 700.8 886.8 704.8C889.2 708.9 889.8 712.6 890.3 714.2" stroke="#6a6a6a" stroke-width="1.2" opacity="0.42"/>
<path d="M875.8 690.3C877.7 692.7 884.3 700.8 886.8 704.9C889.2 709.0 889.8 713.4 890.4 715.1" stroke="#666" stroke-width="1.9" opacity="0.66"/>
<path d="M885.0 445.9C886.2 446.9 889.5 452.0 892.3 451.4C895.0 450.8 899.8 443.8 901.4 442.3" stroke="#666" stroke-width="1.8" opacity="0.66"/>
<path d="M901.4 498.8C902.6 500.3 905.0 507.0 908.7 507.9C912.3 508.9 918.4 507.3 923.3 504.3C928.1 501.3 933.3 493.4 937.8 489.7C942.4 486.1 948.5 483.6 950.6 482.4" stroke="#777" stroke-width="4.1" opacity="0.21"/>
<path d="M902.3 498.1C903.6 499.9 906.5 508.0 909.8 509.0C913.1 510.0 917.3 507.2 922.1 504.2C926.9 501.2 933.9 494.6 938.6 490.8C943.3 487.1 948.5 483.4 950.5 481.9" stroke="#6a6a6a" stroke-width="1.4" opacity="0.49"/>
<path d="M901.4 498.8C902.6 500.3 905.0 507.0 908.7 507.9C912.3 508.9 918.4 507.3 923.3 504.3C928.1 501.3 933.3 493.4 937.8 489.7C942.4 486.1 948.5 483.6 950.6 482.4" stroke="#666" stroke-width="2.1" opacity="0.77"/>
<path d="M950.6 482.4C951.8 484.8 956.7 490.9 957.9 497.0C959.1 503.1 959.4 511.6 957.9 518.9C956.4 526.2 952.7 535.3 948.8 540.8C944.8 546.2 939.4 549.6 934.2 551.7C929.0 553.8 922.0 554.1 917.8 553.5C913.5 552.9 910.2 549.0 908.7 548.1" stroke="#777" stroke-width="4.6" opacity="0.22"/>
<path d="M949.9 483.5C951.1 485.8 956.0 491.3 957.2 497.2C958.4 503.1 958.3 511.8 957.0 518.9C955.8 526.1 953.6 534.4 949.9 539.9C946.2 545.4 940.2 549.4 935.0 551.7C929.8 554.1 923.2 554.5 918.7 554.0C914.2 553.6 909.8 549.9 908.0 549.0" stroke="#6a6a6a" stroke-width="1.5" opacity="0.52"/>
<path d="M950.6 482.4C951.8 484.8 956.7 490.9 957.9 497.0C959.1 503.1 959.4 511.6 957.9 518.9C956.4 526.2 952.7 535.3 948.8 540.8C944.8 546.2 939.4 549.6 934.2 551.7C929.0 553.8 922.0 554.1 917.8 553.5C913.5 552.9 910.2 549.0 908.7 548.1" stroke="#666" stroke-width="2.4" opacity="0.83"/>
<path d="M952.4 486.1C954.0 489.7 960.9 500.7 961.6 507.9C962.2 515.2 959.4 523.1 956.1 529.8C952.7 536.5 943.9 545.0 941.5 548.1" stroke="#666" stroke-width="1.8" opacity="0.61"/>
<path d="M941.5 551.7C942.4 554.8 947.0 563.9 947.0 570.0C947.0 576.0 944.8 582.7 941.5 588.2C938.1 593.7 932.4 599.1 926.9 602.8C921.4 606.4 911.7 608.9 908.7 610.1" stroke="#777" stroke-width="4.3" opacity="0.21"/>
<path d="M941.5 550.6C942.2 553.8 945.8 563.7 945.8 569.9C945.8 576.1 944.7 582.3 941.4 587.7C938.1 593.1 931.6 598.5 926.0 602.4C920.5 606.3 911.2 609.5 908.2 610.9" stroke="#6a6a6a" stroke-width="1.4" opacity="0.49"/>
<path d="M941.5 551.7C942.4 554.8 947.0 563.9 947.0 570.0C947.0 576.0 944.8 582.7 941.5 588.2C938.1 593.7 932.4 599.1 926.9 602.8C921.4 606.4 911.7 608.9 908.7 610.1" stroke="#666" stroke-width="2.2" opacity="0.77"/>
<path d="M937.8 555.4C938.5 559.0 942.7 570.3 941.5 577.2C940.3 584.2 935.4 592.4 930.5 597.3C925.7 602.2 915.4 604.9 912.3 606.4" stroke="#666" stroke-width="1.8" opacity="0.61"/>
<path d="M934.2 464.2C933.6 467.2 932.4 477.6 930.5 482.4C928.7 487.3 924.5 491.5 923.3 493.4" stroke="#666" stroke-width="1.6" opacity="0.61"/>
<path d="M991.0 601.4C992.0 598.8 995.4 590.3 997.1 586.2C998.7 582.2 999.9 577.2 1001.1 577.2C1002.3 577.2 1003.3 582.7 1004.1 586.2C1005.0 589.8 1005.0 599.0 1006.1 598.3C1007.3 597.7 1009.7 585.6 1011.2 582.2C1012.7 578.8 1014.2 576.8 1015.2 578.2C1016.2 579.5 1017.0 585.6 1017.2 590.3C1017.5 595.0 1017.1 601.0 1016.8 606.4C1016.6 611.8 1015.8 619.9 1015.6 622.6" stroke="#777" stroke-width="4.1" opacity="0.17"/>
<path d="M989.8 602.0C991.1 599.2 995.8 589.4 997.9 585.3C999.9 581.3 1000.9 577.6 1002.1 577.7C1003.3 577.7 1004.5 582.3 1005.1 585.7C1005.7 589.1 1004.6 598.6 1005.8 598.1C1007.0 597.5 1010.9 585.8 1012.4 582.4C1013.9 579.1 1014.2 576.9 1014.9 578.0C1015.6 579.1 1016.5 584.3 1016.7 589.2C1016.9 594.1 1016.1 601.5 1015.9 607.2C1015.6 613.0 1015.2 620.9 1015.1 623.6" stroke="#6a6a6a" stroke-width="1.4" opacity="0.39"/>
<path d="M991.0 601.4C992.0 598.8 995.4 590.3 997.1 586.2C998.7 582.2 999.9 577.2 1001.1 577.2C1002.3 577.2 1003.3 582.7 1004.1 586.2C1005.0 589.8 1005.0 599.0 1006.1 598.3C1007.3 597.7 1009.7 585.6 1011.2 582.2C1012.7 578.8 1014.2 576.8 1015.2 578.2C1016.2 579.5 1017.0 585.6 1017.2 590.3C1017.5 595.0 1017.1 601.0 1016.8 606.4C1016.6 611.8 1015.8 619.9 1015.6 622.6" stroke="#666" stroke-width="2.1" opacity="0.61"/>
<path d="M1030.4 573.1C1032.2 572.8 1037.6 571.3 1041.5 571.1C1045.3 570.9 1051.5 571.9 1053.6 572.1" stroke="#777" stroke-width="3.6" opacity="0.15"/>
<path d="M1029.8 572.6C1031.7 572.2 1037.6 570.2 1041.5 570.4C1045.4 570.5 1051.3 572.7 1053.3 573.2" stroke="#6a6a6a" stroke-width="1.2" opacity="0.35"/>
<path d="M1030.4 573.1C1032.2 572.8 1037.6 571.3 1041.5 571.1C1045.3 570.9 1051.5 571.9 1053.6 572.1" stroke="#666" stroke-width="1.9" opacity="0.55"/>
<path d="M1028.3 582.2C1028.2 584.6 1027.0 592.0 1027.3 596.3C1027.7 600.7 1028.3 605.6 1030.4 608.4C1032.4 611.3 1037.9 612.6 1039.4 613.5" stroke="#777" stroke-width="4.1" opacity="0.17"/>
<path d="M1029.3 582.9C1029.0 585.3 1027.3 593.1 1027.6 597.3C1028.0 601.6 1029.4 606.0 1031.4 608.6C1033.5 611.1 1038.5 611.8 1040.0 612.4" stroke="#6a6a6a" stroke-width="1.4" opacity="0.39"/>
<path d="M1028.3 582.2C1028.2 584.6 1027.0 592.0 1027.3 596.3C1027.7 600.7 1028.3 605.6 1030.4 608.4C1032.4 611.3 1037.9 612.6 1039.4 613.5" stroke="#666" stroke-width="2.1" opacity="0.61"/>
<path d="M1029.3 585.2C1031.0 584.7 1036.4 582.4 1039.4 582.2C1042.5 582.0 1046.2 583.9 1047.5 584.2" stroke="#777" stroke-width="3.6" opacity="0.15"/>
<path d="M1029.9 585.1C1031.6 584.7 1037.2 582.9 1040.0 582.5C1042.9 582.2 1045.8 583.0 1047.0 583.1" stroke="#6a6a6a" stroke-width="1.2" opacity="0.35"/>
<path d="M1029.3 585.2C1031.0 584.7 1036.4 582.4 1039.4 582.2C1042.5 582.0 1046.2 583.9 1047.5 584.2" stroke="#666" stroke-width="1.9" opacity="0.55"/>
<path d="M1053.6 580.2C1052.7 581.9 1049.2 586.2 1048.5 590.3C1047.8 594.3 1048.0 600.9 1049.5 604.4C1051.0 607.9 1054.6 610.6 1057.6 611.5C1060.6 612.3 1064.8 610.8 1067.7 609.4C1070.5 608.1 1073.6 604.4 1074.8 603.4" stroke="#777" stroke-width="4.1" opacity="0.17"/>
<path d="M1054.6 579.3C1053.6 581.1 1049.4 585.6 1048.4 589.9C1047.5 594.2 1047.3 601.5 1049.0 605.0C1050.8 608.5 1055.6 610.2 1058.7 610.9C1061.9 611.6 1065.4 610.3 1068.1 609.0C1070.8 607.7 1073.8 604.1 1074.9 603.1" stroke="#6a6a6a" stroke-width="1.4" opacity="0.39"/>
<path d="M1053.6 580.2C1052.7 581.9 1049.2 586.2 1048.5 590.3C1047.8 594.3 1048.0 600.9 1049.5 604.4C1051.0 607.9 1054.6 610.6 1057.6 611.5C1060.6 612.3 1064.8 610.8 1067.7 609.4C1070.5 608.1 1073.6 604.4 1074.8 603.4" stroke="#666" stroke-width="2.1" opacity="0.61"/>
<path d="M1054.6 580.2C1055.7 579.2 1058.8 575.3 1061.6 574.1C1064.5 572.9 1069.2 573.2 1071.7 573.1C1074.2 573.1 1075.9 573.6 1076.8 573.7" stroke="#777" stroke-width="4.1" opacity="0.17"/>
<path d="M1053.8 579.4C1055.0 578.7 1057.9 576.3 1060.9 575.1C1063.9 573.9 1068.9 572.5 1071.7 572.4C1074.5 572.4 1076.7 574.5 1077.7 574.9" stroke="#6a6a6a" stroke-width="1.4" opacity="0.39"/>
<path d="M1054.6 580.2C1055.7 579.2 1058.8 575.3 1061.6 574.1C1064.5 572.9 1069.2 573.2 1071.7 573.1C1074.2 573.1 1075.9 573.6 1076.8 573.7" stroke="#666" stroke-width="2.1" opacity="0.61"/>
<path d="M978.9 618.9C982.6 618.8 992.3 618.5 1001.1 618.1C1009.8 617.7 1021.3 617.0 1031.4 616.5C1041.5 616.0 1054.1 615.3 1061.6 614.9C1069.2 614.5 1074.2 614.2 1076.8 614.1" stroke="#777" stroke-width="5.3" opacity="0.18"/>
<path d="M978.8 618.1C982.4 617.9 991.6 617.6 1000.4 617.1C1009.1 616.7 1020.9 616.0 1031.0 615.5C1041.1 615.1 1053.3 614.4 1061.0 614.3C1068.7 614.2 1074.3 614.9 1076.9 615.0" stroke="#6a6a6a" stroke-width="1.8" opacity="0.42"/>
<path d="M978.9 618.9C982.6 618.8 992.3 618.5 1001.1 618.1C1009.8 617.7 1021.3 617.0 1031.4 616.5C1041.5 616.0 1054.1 615.3 1061.6 614.9C1069.2 614.5 1074.2 614.2 1076.8 614.1" stroke="#666" stroke-width="2.8" opacity="0.66"/>
<path d="M980.9 638.7C981.9 637.4 984.4 632.1 987.0 630.6C989.5 629.1 994.0 628.6 996.0 629.6C998.1 630.6 999.1 633.5 999.1 636.7C999.1 639.9 996.5 645.1 996.0 648.8C995.5 652.5 995.2 656.9 996.0 658.9C996.9 660.9 1000.2 660.6 1001.1 660.9" stroke="#777" stroke-width="4.1" opacity="0.17"/>
<path d="M981.5 638.5C982.4 637.2 984.4 632.2 986.8 630.7C989.1 629.2 993.9 628.3 995.7 629.2C997.6 630.1 997.8 633.0 998.0 636.2C998.3 639.3 997.5 644.1 997.2 647.9C996.8 651.7 995.3 657.1 996.1 659.2C996.9 661.3 1001.0 660.1 1002.0 660.2" stroke="#6a6a6a" stroke-width="1.4" opacity="0.39"/>
<path d="M980.9 638.7C981.9 637.4 984.4 632.1 987.0 630.6C989.5 629.1 994.0 628.6 996.0 629.6C998.1 630.6 999.1 633.5 999.1 636.7C999.1 639.9 996.5 645.1 996.0 648.8C995.5 652.5 995.2 656.9 996.0 658.9C996.9 660.9 1000.2 660.6 1001.1 660.9" stroke="#666" stroke-width="2.1" opacity="0.61"/>
<path d="M1034.4 650.0C1033.7 652.4 1032.6 654.9 1031.2 656.9C1029.9 658.8 1028.1 660.6 1026.3 661.8C1024.6 662.9 1022.5 663.6 1020.6 663.7C1018.8 663.7 1016.8 663.2 1015.3 662.2C1013.7 661.2 1012.2 659.6 1011.3 657.7C1010.3 655.9 1009.6 653.4 1009.5 651.1C1009.3 648.7 1009.6 645.9 1010.2 643.5C1010.8 641.1 1012.0 638.6 1013.3 636.7C1014.7 634.7 1016.4 632.9 1018.2 631.8C1020.0 630.7 1022.1 630.0 1023.9 629.9C1025.8 629.8 1027.7 630.4 1029.3 631.3C1030.9 632.3 1032.3 634.0 1033.3 635.8C1034.3 637.7 1034.9 640.1 1035.1 642.5C1035.3 644.9 1035.0 647.6 1034.4 650.0z" stroke="#777" stroke-width="4.1" opacity="0.17"/>
<path d="M1033.8 649.4C1033.1 651.7 1032.1 654.6 1031.0 656.8C1029.9 659.0 1029.0 661.6 1027.4 662.6C1025.9 663.6 1023.8 662.5 1021.5 662.5C1019.3 662.5 1015.7 663.5 1014.1 662.7C1012.6 661.9 1013.0 659.8 1012.2 657.7C1011.5 655.5 1010.1 652.0 1009.7 649.9C1009.3 647.7 1009.2 646.6 1009.9 644.6C1010.7 642.5 1012.5 639.8 1014.1 637.5C1015.7 635.3 1017.9 632.6 1019.3 631.2C1020.8 629.8 1021.3 629.0 1023.0 629.1C1024.6 629.2 1027.5 630.6 1029.4 631.8C1031.2 633.0 1033.3 634.5 1034.3 636.4C1035.4 638.3 1035.5 641.0 1035.4 643.1C1035.4 645.3 1034.6 647.1 1033.8 649.4z" stroke="#6a6a6a" stroke-width="1.4" opacity="0.39"/>
<path d="M1034.4 650.0C1033.7 652.4 1032.6 654.9 1031.2 656.9C1029.9 658.8 1028.1 660.6 1026.3 661.8C1024.6 662.9 1022.5 663.6 1020.6 663.7C1018.8 663.7 1016.8 663.2 1015.3 662.2C1013.7 661.2 1012.2 659.6 1011.3 657.7C1010.3 655.9 1009.6 653.4 1009.5 651.1C1009.3 648.7 1009.6 645.9 1010.2 643.5C1010.8 641.1 1012.0 638.6 1013.3 636.7C1014.7 634.7 1016.4 632.9 1018.2 631.8C1020.0 630.7 1022.1 630.0 1023.9 629.9C1025.8 629.8 1027.7 630.4 1029.3 631.3C1030.9 632.3 1032.3 634.0 1033.3 635.8C1034.3 637.7 1034.9 640.1 1035.1 642.5C1035.3 644.9 1035.0 647.6 1034.4 650.0z" stroke="#666" stroke-width="2.1" opacity="0.61"/>
<path d="M1011.2 660.9L1035.4 630.6" stroke="#777" stroke-width="3.6" opacity="0.15"/>
<path d="M1011.1 661.0L1034.3 631.3" stroke="#6a6a6a" stroke-width="1.2" opacity="0.35"/>
<path d="M1011.2 660.9L1035.4 630.6" stroke="#666" stroke-width="1.9" opacity="0.55"/>
<path d="M1039.4 633.7C1040.8 632.8 1045.5 627.4 1047.5 628.6C1049.5 629.8 1051.2 636.4 1051.5 640.7C1051.9 645.1 1048.9 651.5 1049.5 654.9C1050.2 658.2 1053.2 660.6 1055.6 660.9C1057.9 661.2 1061.8 660.2 1063.7 656.9C1065.5 653.5 1066.0 645.4 1066.7 640.7C1067.4 636.0 1067.5 630.6 1067.7 628.6" stroke="#777" stroke-width="4.1" opacity="0.17"/>
<path d="M1038.8 634.7C1040.3 633.6 1045.9 627.2 1047.9 628.1C1049.8 629.1 1050.3 635.6 1050.7 640.1C1051.0 644.7 1049.2 652.0 1049.9 655.3C1050.5 658.6 1052.3 659.6 1054.6 659.9C1057.0 660.2 1061.8 660.4 1063.7 657.1C1065.7 653.8 1065.7 645.0 1066.4 640.1C1067.1 635.1 1067.7 629.5 1067.9 627.4" stroke="#6a6a6a" stroke-width="1.4" opacity="0.39"/>
<path d="M1039.4 633.7C1040.8 632.8 1045.5 627.4 1047.5 628.6C1049.5 629.8 1051.2 636.4 1051.5 640.7C1051.9 645.1 1048.9 651.5 1049.5 654.9C1050.2 658.2 1053.2 660.6 1055.6 660.9C1057.9 661.2 1061.8 660.2 1063.7 656.9C1065.5 653.5 1066.0 645.4 1066.7 640.7C1067.4 636.0 1067.5 630.6 1067.7 628.6" stroke="#666" stroke-width="2.1" opacity="0.61"/>
<path d="M1067.7 628.6C1067.5 631.3 1066.3 640.1 1066.7 644.8C1067.0 649.5 1068.2 653.8 1069.7 656.9C1071.2 659.9 1074.8 661.9 1075.8 662.9" stroke="#777" stroke-width="4.1" opacity="0.17"/>
<path d="M1067.2 628.5C1067.3 631.3 1067.2 640.4 1067.8 645.1C1068.4 649.8 1069.4 653.9 1070.6 656.8C1071.9 659.7 1074.4 661.4 1075.1 662.3" stroke="#6a6a6a" stroke-width="1.4" opacity="0.39"/>
<path d="M1067.7 628.6C1067.5 631.3 1066.3 640.1 1066.7 644.8C1067.0 649.5 1068.2 653.8 1069.7 656.9C1071.2 659.9 1074.8 661.9 1075.8 662.9" stroke="#666" stroke-width="2.1" opacity="0.61"/>
<path d="M1009.2 552.7C1008.8 549.3 1006.6 538.7 1006.6 532.4C1006.6 526.0 1007.5 518.6 1009.2 514.6C1010.9 510.6 1014.5 508.4 1016.8 508.2C1019.1 508.0 1022.3 509.7 1023.1 513.3C1024.0 516.9 1022.7 524.5 1021.9 529.8C1021.0 535.1 1018.9 541.7 1018.1 545.1C1017.2 548.4 1017.0 549.3 1016.8 550.1" stroke="#777" stroke-width="4.1" opacity="0.17"/>
<path d="M1010.3 553.2C1009.6 549.5 1006.4 537.6 1006.2 531.2C1006.0 524.9 1007.4 518.9 1009.2 515.0C1010.9 511.1 1014.2 507.8 1016.6 507.7C1019.0 507.5 1022.8 510.8 1023.6 514.3C1024.3 517.8 1022.2 523.6 1021.2 528.7C1020.2 533.8 1018.3 541.4 1017.7 544.9C1017.0 548.3 1017.3 548.7 1017.2 549.4" stroke="#6a6a6a" stroke-width="1.4" opacity="0.39"/>
<path d="M1009.2 552.7C1008.8 549.3 1006.6 538.7 1006.6 532.4C1006.6 526.0 1007.5 518.6 1009.2 514.6C1010.9 510.6 1014.5 508.4 1016.8 508.2C1019.1 508.0 1022.3 509.7 1023.1 513.3C1024.0 516.9 1022.7 524.5 1021.9 529.8C1021.0 535.1 1018.9 541.7 1018.1 545.1C1017.2 548.4 1017.0 549.3 1016.8 550.1" stroke="#666" stroke-width="2.1" opacity="0.61"/>
<path d="M1035.8 522.2C1038.0 519.0 1040.5 516.1 1043.5 515.9C1046.4 515.6 1051.3 517.8 1053.6 520.9C1055.9 524.1 1057.6 530.0 1057.4 534.9C1057.2 539.8 1054.9 546.8 1052.4 550.1C1049.8 553.5 1045.4 555.6 1042.2 555.2C1039.0 554.8 1035.2 551.0 1033.3 547.6C1031.4 544.2 1030.3 539.1 1030.8 534.9C1031.2 530.7 1033.7 525.4 1035.8 522.2z" stroke="#777" stroke-width="4.1" opacity="0.17"/>
<path d="M1036.6 522.8C1037.8 521.4 1040.4 515.5 1043.5 515.1C1046.5 514.8 1052.3 517.3 1054.7 520.5C1057.2 523.7 1058.7 529.2 1058.2 534.3C1057.7 539.3 1054.4 547.1 1051.7 550.8C1048.9 554.4 1044.8 557.0 1041.7 556.3C1038.6 555.6 1035.2 550.4 1033.3 546.8C1031.4 543.2 1029.6 538.6 1030.1 534.7C1030.6 530.8 1035.2 525.3 1036.2 523.3C1037.3 521.3 1035.4 524.1 1036.6 522.8z" stroke="#6a6a6a" stroke-width="1.4" opacity="0.39"/>
<path d="M1035.8 522.2C1038.0 519.0 1040.5 516.1 1043.5 515.9C1046.4 515.6 1051.3 517.8 1053.6 520.9C1055.9 524.1 1057.6 530.0 1057.4 534.9C1057.2 539.8 1054.9 546.8 1052.4 550.1C1049.8 553.5 1045.4 555.6 1042.2 555.2C1039.0 554.8 1035.2 551.0 1033.3 547.6C1031.4 544.2 1030.3 539.1 1030.8 534.9C1031.2 530.7 1033.7 525.4 1035.8 522.2z" stroke="#666" stroke-width="2.1" opacity="0.61"/>
<path d="M617.4 479.9C617.8 476.0 617.1 463.0 620.0 456.5C622.8 450.0 628.4 444.2 634.3 440.8C640.2 437.5 648.6 435.9 655.1 436.2C661.7 436.4 668.2 438.3 673.4 442.1C678.6 446.0 683.6 452.8 686.4 459.1C689.2 465.4 690.1 473.4 690.3 479.9C690.5 486.4 689.2 493.0 687.7 498.2C686.2 503.4 682.3 509.0 681.2 511.2" stroke="#777" stroke-width="4.6" opacity="0.22"/>
<path d="M616.5 479.7C617.0 476.0 616.5 464.3 619.3 457.6C622.1 451.0 627.6 443.4 633.4 439.8C639.2 436.1 647.3 435.3 654.1 435.9C660.9 436.4 668.9 439.0 674.3 443.1C679.8 447.1 684.1 454.2 687.0 460.3C689.8 466.4 691.4 473.0 691.3 479.5C691.3 486.0 688.5 494.1 687.0 499.2C685.4 504.3 682.6 508.3 681.8 510.1" stroke="#6a6a6a" stroke-width="1.5" opacity="0.52"/>
<path d="M617.4 479.9C617.8 476.0 617.1 463.0 620.0 456.5C622.8 450.0 628.4 444.2 634.3 440.8C640.2 437.5 648.6 435.9 655.1 436.2C661.7 436.4 668.2 438.3 673.4 442.1C678.6 446.0 683.6 452.8 686.4 459.1C689.2 465.4 690.1 473.4 690.3 479.9C690.5 486.4 689.2 493.0 687.7 498.2C686.2 503.4 682.3 509.0 681.2 511.2" stroke="#666" stroke-width="2.4" opacity="0.83"/>
<path d="M617.4 479.9C618.0 483.0 618.9 493.0 621.3 498.2C623.7 503.4 627.6 508.4 631.7 511.2C635.8 514.0 643.6 514.5 646.0 515.1" stroke="#777" stroke-width="4.3" opacity="0.21"/>
<path d="M617.8 479.6C618.3 482.7 618.8 492.7 621.0 497.8C623.2 502.8 626.8 507.2 630.9 510.0C635.0 512.8 643.1 514.0 645.5 514.7" stroke="#6a6a6a" stroke-width="1.4" opacity="0.49"/>
<path d="M617.4 479.9C618.0 483.0 618.9 493.0 621.3 498.2C623.7 503.4 627.6 508.4 631.7 511.2C635.8 514.0 643.6 514.5 646.0 515.1" stroke="#666" stroke-width="2.2" opacity="0.77"/>
<path d="M614.8 485.1C615.0 480.8 613.2 466.7 616.1 459.1C618.9 451.5 625.2 443.9 631.7 439.5C638.2 435.2 647.5 432.8 655.1 433.0C662.7 433.2 673.6 439.5 677.3 440.8" stroke="#666" stroke-width="1.6" opacity="0.55"/>
<path d="M720.3 524.2C719.4 520.7 716.0 510.8 715.1 503.4C714.1 496.0 713.2 487.7 714.5 479.9C715.8 472.1 718.9 462.3 722.9 456.5C726.9 450.6 732.4 447.3 738.5 444.8C744.6 442.2 752.8 440.9 759.4 441.4C765.9 441.8 772.2 443.5 777.6 447.4C783.0 451.2 788.5 457.6 791.9 464.3C795.4 471.0 797.8 480.4 798.4 487.7C799.1 495.1 797.6 502.5 795.8 508.6C794.1 514.7 789.3 521.6 788.0 524.2" stroke="#777" stroke-width="4.6" opacity="0.22"/>
<path d="M721.4 523.3C720.5 519.9 717.4 509.8 716.2 502.7C715.0 495.6 713.0 488.4 714.2 480.7C715.4 473.0 719.8 462.3 723.7 456.3C727.5 450.3 731.5 447.0 737.4 444.7C743.3 442.4 752.5 442.0 759.1 442.4C765.6 442.8 771.2 443.6 776.9 447.0C782.5 450.5 789.3 456.3 792.9 463.2C796.4 470.1 797.6 481.1 798.2 488.5C798.8 495.9 798.4 501.7 796.5 507.5C794.6 513.3 788.5 520.6 786.9 523.2" stroke="#6a6a6a" stroke-width="1.5" opacity="0.52"/>
<path d="M720.3 524.2C719.4 520.7 716.0 510.8 715.1 503.4C714.1 496.0 713.2 487.7 714.5 479.9C715.8 472.1 718.9 462.3 722.9 456.5C726.9 450.6 732.4 447.3 738.5 444.8C744.6 442.2 752.8 440.9 759.4 441.4C765.9 441.8 772.2 443.5 777.6 447.4C783.0 451.2 788.5 457.6 791.9 464.3C795.4 471.0 797.8 480.4 798.4 487.7C799.1 495.1 797.6 502.5 795.8 508.6C794.1 514.7 789.3 521.6 788.0 524.2" stroke="#666" stroke-width="2.4" opacity="0.83"/>
<path d="M712.5 508.6C712.2 503.8 709.9 489.0 711.2 479.9C712.5 470.8 715.3 460.2 720.3 453.9C725.3 447.6 734.2 444.5 741.1 442.1C748.1 439.8 758.5 440.0 762.0 439.5" stroke="#666" stroke-width="1.6" opacity="0.55"/>
<path d="M742.4 515.1C743.9 513.8 747.4 508.8 751.5 507.3C755.7 505.8 762.4 505.3 767.2 506.0C772.0 506.6 777.4 508.8 780.2 511.2C783.0 513.6 783.5 518.8 784.1 520.3" stroke="#777" stroke-width="3.8" opacity="0.20"/>
<path d="M743.4 514.5C744.9 513.5 748.2 509.8 752.1 508.2C756.0 506.7 761.9 504.9 766.8 505.4C771.7 506.0 778.5 508.9 781.3 511.5C784.1 514.0 783.2 519.3 783.5 520.8" stroke="#6a6a6a" stroke-width="1.3" opacity="0.45"/>
<path d="M742.4 515.1C743.9 513.8 747.4 508.8 751.5 507.3C755.7 505.8 762.4 505.3 767.2 506.0C772.0 506.6 777.4 508.8 780.2 511.2C783.0 513.6 783.5 518.8 784.1 520.3" stroke="#666" stroke-width="2.0" opacity="0.72"/>
<path d="M642.1 420.0C638.2 422.2 625.4 428.3 618.7 433.0C611.9 437.8 605.6 443.0 601.7 448.7C597.8 454.3 596.1 459.5 595.2 466.9C594.3 474.3 595.0 484.3 596.5 493.0C598.0 501.6 603.0 514.7 604.3 519.0" stroke="#777" stroke-width="4.8" opacity="0.22"/>
<path d="M641.7 419.5C637.6 421.8 624.0 428.7 617.5 433.6C611.0 438.6 606.3 443.6 602.7 449.0C599.2 454.3 597.4 458.4 596.3 465.8C595.1 473.1 594.3 483.8 595.9 492.9C597.4 502.0 603.8 515.6 605.4 520.1" stroke="#6a6a6a" stroke-width="1.6" opacity="0.52"/>
<path d="M642.1 420.0C638.2 422.2 625.4 428.3 618.7 433.0C611.9 437.8 605.6 443.0 601.7 448.7C597.8 454.3 596.1 459.5 595.2 466.9C594.3 474.3 595.0 484.3 596.5 493.0C598.0 501.6 603.0 514.7 604.3 519.0" stroke="#666" stroke-width="2.5" opacity="0.83"/>
<path d="M646.0 422.6C642.3 424.8 630.4 430.4 623.9 435.6C617.4 440.8 610.6 447.8 606.9 453.9C603.2 460.0 602.4 464.7 601.7 472.1C601.1 479.5 601.7 490.1 603.0 498.2C604.3 506.2 608.5 516.6 609.5 520.3" stroke="#666" stroke-width="1.8" opacity="0.61"/>
<path d="M790.6 420.0C794.5 423.5 808.0 432.2 814.1 440.8C820.2 449.5 824.5 461.3 827.1 472.1C829.7 483.0 830.8 495.1 829.7 506.0C828.6 516.8 822.1 532.0 820.6 537.2" stroke="#777" stroke-width="4.8" opacity="0.22"/>
<path d="M790.4 419.4C794.3 423.0 807.6 432.2 813.9 440.8C820.2 449.5 825.4 460.4 828.1 471.3C830.9 482.3 831.6 495.5 830.4 506.6C829.3 517.6 822.9 532.7 821.4 537.9" stroke="#6a6a6a" stroke-width="1.6" opacity="0.52"/>
<path d="M790.6 420.0C794.5 423.5 808.0 432.2 814.1 440.8C820.2 449.5 824.5 461.3 827.1 472.1C829.7 483.0 830.8 495.1 829.7 506.0C828.6 516.8 822.1 532.0 820.6 537.2" stroke="#666" stroke-width="2.5" opacity="0.83"/>
<path d="M795.8 426.5C799.3 430.2 811.9 440.2 816.7 448.7C821.5 457.1 823.0 467.3 824.5 477.3C826.0 487.3 827.1 499.0 825.8 508.6C824.5 518.1 818.2 530.3 816.7 534.6" stroke="#666" stroke-width="1.8" opacity="0.61"/>
<path d="M686.4 433.0C687.1 431.3 688.1 424.8 690.3 422.6C692.5 420.4 697.9 420.4 699.4 420.0" stroke="#777" stroke-width="3.8" opacity="0.20"/>
<path d="M686.7 432.6C687.2 430.9 687.6 424.5 689.9 422.3C692.1 420.0 698.4 419.5 700.1 419.0" stroke="#6a6a6a" stroke-width="1.3" opacity="0.45"/>
<path d="M686.4 433.0C687.1 431.3 688.1 424.8 690.3 422.6C692.5 420.4 697.9 420.4 699.4 420.0" stroke="#666" stroke-width="2.0" opacity="0.72"/>
<path d="M715.1 420.0C716.8 422.2 723.3 432.2 725.5 433.0C727.7 433.9 726.4 427.4 728.1 425.2C729.8 423.0 734.6 420.9 735.9 420.0" stroke="#777" stroke-width="3.8" opacity="0.20"/>
<path d="M714.3 420.6C716.1 422.5 722.8 431.2 724.9 432.0C727.0 432.8 725.2 427.1 727.0 425.3C728.7 423.5 734.1 421.9 735.5 421.2" stroke="#6a6a6a" stroke-width="1.3" opacity="0.45"/>
<path d="M715.1 420.0C716.8 422.2 723.3 432.2 725.5 433.0C727.7 433.9 726.4 427.4 728.1 425.2C729.8 423.0 734.6 420.9 735.9 420.0" stroke="#666" stroke-width="2.0" opacity="0.72"/>
<path d="M604.3 522.9C607.6 522.5 615.8 520.7 623.9 520.3C631.9 519.9 647.8 520.3 652.5 520.3" stroke="#777" stroke-width="4.3" opacity="0.21"/>
<path d="M605.3 524.1C608.3 523.3 615.6 519.9 623.3 519.3C631.0 518.7 646.9 520.1 651.6 520.3" stroke="#6a6a6a" stroke-width="1.4" opacity="0.49"/>
<path d="M604.3 522.9C607.6 522.5 615.8 520.7 623.9 520.3C631.9 519.9 647.8 520.3 652.5 520.3" stroke="#666" stroke-width="2.2" opacity="0.77"/>
<path d="M604.3 522.9C603.7 524.9 600.6 530.1 600.4 534.6C600.2 539.2 600.6 545.3 603.0 550.3C605.4 555.3 610.4 560.3 614.8 564.6C619.1 568.9 624.5 572.2 629.1 576.3C633.6 580.5 637.3 585.0 642.1 589.4C646.9 593.7 653.4 598.5 657.7 602.4C662.1 606.3 666.4 611.1 668.2 612.8" stroke="#777" stroke-width="4.8" opacity="0.22"/>
<path d="M604.8 522.8C604.0 524.7 600.0 529.8 599.8 534.4C599.5 539.1 600.7 545.5 603.3 550.7C605.9 555.9 611.0 561.3 615.3 565.4C619.7 569.6 624.9 571.5 629.5 575.4C634.1 579.3 638.2 584.4 642.9 588.9C647.7 593.3 653.6 598.2 657.9 602.1C662.2 606.0 666.9 610.4 668.7 612.1" stroke="#6a6a6a" stroke-width="1.6" opacity="0.52"/>
<path d="M604.3 522.9C603.7 524.9 600.6 530.1 600.4 534.6C600.2 539.2 600.6 545.3 603.0 550.3C605.4 555.3 610.4 560.3 614.8 564.6C619.1 568.9 624.5 572.2 629.1 576.3C633.6 580.5 637.3 585.0 642.1 589.4C646.9 593.7 653.4 598.5 657.7 602.4C662.1 606.3 666.4 611.1 668.2 612.8" stroke="#666" stroke-width="2.5" opacity="0.83"/>
<path d="M608.2 529.4C607.8 532.0 604.3 539.9 605.6 545.1C606.9 550.3 611.3 555.5 616.1 560.7C620.8 565.9 631.3 573.7 634.3 576.3" stroke="#666" stroke-width="1.6" opacity="0.55"/>
<path d="M652.5 521.6C651.9 523.8 648.8 529.9 648.6 534.6C648.4 539.4 649.3 546.2 651.2 550.3C653.2 554.4 656.2 557.7 660.3 559.4C664.5 561.1 671.2 560.1 676.0 560.7C680.8 561.3 684.2 562.1 689.0 562.8C693.8 563.4 699.4 565.2 704.6 564.6C709.9 564.0 715.7 562.4 720.3 559.4C724.8 556.4 729.7 551.1 732.0 546.4C734.3 541.6 734.9 535.1 733.8 530.7C732.7 526.4 726.9 522.0 725.5 520.3" stroke="#777" stroke-width="4.8" opacity="0.22"/>
<path d="M651.9 521.0C651.2 523.4 647.9 530.8 647.8 535.6C647.7 540.4 649.4 545.7 651.4 549.9C653.5 554.0 656.0 558.9 660.1 560.6C664.2 562.3 671.1 559.6 676.0 560.1C680.9 560.5 684.8 562.6 689.8 563.2C694.7 563.8 700.7 564.2 705.8 563.7C710.9 563.2 715.7 562.9 720.2 560.2C724.7 557.4 730.7 552.3 732.8 547.4C734.9 542.4 734.1 534.9 732.7 530.2C731.3 525.6 725.9 521.3 724.6 519.6" stroke="#6a6a6a" stroke-width="1.6" opacity="0.52"/>
<path d="M652.5 521.6C651.9 523.8 648.8 529.9 648.6 534.6C648.4 539.4 649.3 546.2 651.2 550.3C653.2 554.4 656.2 557.7 660.3 559.4C664.5 561.1 671.2 560.1 676.0 560.7C680.8 561.3 684.2 562.1 689.0 562.8C693.8 563.4 699.4 565.2 704.6 564.6C709.9 564.0 715.7 562.4 720.3 559.4C724.8 556.4 729.7 551.1 732.0 546.4C734.3 541.6 734.9 535.1 733.8 530.7C732.7 526.4 726.9 522.0 725.5 520.3" stroke="#666" stroke-width="2.5" opacity="0.83"/>
<path d="M652.5 521.6C655.1 521.1 663.0 519.3 668.2 518.5C673.4 517.7 681.2 517.2 683.8 516.9" stroke="#777" stroke-width="3.8" opacity="0.20"/>
<path d="M653.7 521.8C656.3 521.2 664.0 519.0 669.2 518.2C674.4 517.3 682.1 517.0 684.7 516.8" stroke="#6a6a6a" stroke-width="1.3" opacity="0.45"/>
<path d="M652.5 521.6C655.1 521.1 663.0 519.3 668.2 518.5C673.4 517.7 681.2 517.2 683.8 516.9" stroke="#666" stroke-width="2.0" opacity="0.72"/>
<path d="M665.6 562.0C664.9 564.0 661.2 570.0 661.7 573.7C662.1 577.4 664.9 582.0 668.2 584.1C671.4 586.3 676.9 587.4 681.2 586.8C685.5 586.1 691.2 583.1 694.2 580.2C697.3 577.4 698.6 571.6 699.4 569.8" stroke="#777" stroke-width="4.3" opacity="0.21"/>
<path d="M665.0 562.7C664.6 564.4 662.2 569.2 662.7 572.8C663.3 576.4 665.4 582.2 668.4 584.4C671.4 586.7 676.4 587.3 680.5 586.4C684.7 585.6 690.3 582.3 693.4 579.5C696.4 576.8 697.9 571.6 698.8 570.1" stroke="#6a6a6a" stroke-width="1.4" opacity="0.49"/>
<path d="M665.6 562.0C664.9 564.0 661.2 570.0 661.7 573.7C662.1 577.4 664.9 582.0 668.2 584.1C671.4 586.3 676.9 587.4 681.2 586.8C685.5 586.1 691.2 583.1 694.2 580.2C697.3 577.4 698.6 571.6 699.4 569.8" stroke="#666" stroke-width="2.2" opacity="0.77"/>
<path d="M677.3 567.2L679.9 572.4" stroke="#666" stroke-width="1.6" opacity="0.66"/>
<path d="M725.5 520.3C729.0 520.7 738.5 521.4 746.3 522.9C754.1 524.4 763.7 527.0 772.4 529.4C781.1 531.8 791.9 535.1 798.4 537.2C805.0 539.4 809.3 541.6 811.5 542.5" stroke="#777" stroke-width="4.8" opacity="0.22"/>
<path d="M725.9 519.6C729.1 520.1 737.3 521.0 745.2 522.5C753.0 524.0 764.0 526.3 772.8 528.7C781.6 531.0 791.4 534.2 798.0 536.5C804.6 538.9 809.8 541.6 812.2 542.6" stroke="#6a6a6a" stroke-width="1.6" opacity="0.52"/>
<path d="M725.5 520.3C729.0 520.7 738.5 521.4 746.3 522.9C754.1 524.4 763.7 527.0 772.4 529.4C781.1 531.8 791.9 535.1 798.4 537.2C805.0 539.4 809.3 541.6 811.5 542.5" stroke="#666" stroke-width="2.5" opacity="0.83"/>
<path d="M811.5 542.5C813.6 544.6 821.7 550.7 824.5 555.5C827.3 560.3 828.8 566.3 828.4 571.1C828.0 575.9 823.0 582.0 821.9 584.1" stroke="#777" stroke-width="4.6" opacity="0.22"/>
<path d="M810.4 541.5C812.7 543.9 821.2 550.8 824.2 555.6C827.3 560.4 829.3 565.3 828.7 570.1C828.2 575.0 822.4 582.2 821.1 584.6" stroke="#6a6a6a" stroke-width="1.5" opacity="0.52"/>
<path d="M811.5 542.5C813.6 544.6 821.7 550.7 824.5 555.5C827.3 560.3 828.8 566.3 828.4 571.1C828.0 575.9 823.0 582.0 821.9 584.1" stroke="#666" stroke-width="2.4" opacity="0.83"/>
<path d="M784.1 555.5C783.0 558.1 778.9 565.0 777.6 571.1C776.3 577.2 775.4 585.0 776.3 592.0C777.2 598.9 781.7 609.3 782.8 612.8" stroke="#777" stroke-width="4.6" opacity="0.22"/>
<path d="M783.9 555.0C782.8 557.8 778.5 566.0 777.1 572.2C775.8 578.4 775.0 585.4 775.8 592.1C776.7 598.9 781.4 609.2 782.5 612.6" stroke="#6a6a6a" stroke-width="1.5" opacity="0.52"/>
<path d="M784.1 555.5C783.0 558.1 778.9 565.0 777.6 571.1C776.3 577.2 775.4 585.0 776.3 592.0C777.2 598.9 781.7 609.3 782.8 612.8" stroke="#666" stroke-width="2.4" opacity="0.83"/>
<path d="M788.0 550.3C790.6 549.8 798.4 546.8 803.7 547.7C808.9 548.5 816.7 554.2 819.3 555.5" stroke="#777" stroke-width="4.1" opacity="0.21"/>
<path d="M788.9 551.5C791.3 550.7 798.2 546.4 803.3 546.9C808.5 547.5 817.1 553.5 819.8 554.8" stroke="#6a6a6a" stroke-width="1.4" opacity="0.49"/>
<path d="M788.0 550.3C790.6 549.8 798.4 546.8 803.7 547.7C808.9 548.5 816.7 554.2 819.3 555.5" stroke="#666" stroke-width="2.1" opacity="0.77"/>
<path d="M725.5 568.5C724.4 571.1 719.8 578.5 719.0 584.1C718.1 589.8 718.8 596.7 720.3 602.4C721.8 608.0 726.8 615.4 728.1 618.0" stroke="#777" stroke-width="4.6" opacity="0.22"/>
<path d="M724.3 569.5C723.4 572.1 719.5 579.3 718.8 584.9C718.1 590.6 718.5 597.9 720.1 603.3C721.6 608.7 726.7 614.9 728.0 617.2" stroke="#6a6a6a" stroke-width="1.5" opacity="0.52"/>
<path d="M725.5 568.5C724.4 571.1 719.8 578.5 719.0 584.1C718.1 589.8 718.8 596.7 720.3 602.4C721.8 608.0 726.8 615.4 728.1 618.0" stroke="#666" stroke-width="2.4" opacity="0.83"/>
<path d="M728.1 565.9C730.3 565.5 736.3 562.9 741.1 563.3C745.9 563.7 751.5 566.3 756.8 568.5C762.0 570.7 769.8 575.0 772.4 576.3" stroke="#777" stroke-width="4.1" opacity="0.21"/>
<path d="M726.9 566.0C729.3 565.7 736.7 563.8 741.5 564.3C746.3 564.7 750.7 566.8 755.8 568.8C760.9 570.8 769.4 575.1 772.1 576.3" stroke="#6a6a6a" stroke-width="1.4" opacity="0.49"/>
<path d="M728.1 565.9C730.3 565.5 736.3 562.9 741.1 563.3C745.9 563.7 751.5 566.3 756.8 568.5C762.0 570.7 769.8 575.0 772.4 576.3" stroke="#666" stroke-width="2.1" opacity="0.77"/>
<path d="M590.0 552.9C591.7 554.2 596.5 556.8 600.4 560.7C604.3 564.6 609.5 570.3 613.4 576.3C617.4 582.4 621.3 589.9 623.9 597.2C626.5 604.5 628.2 616.3 629.1 620.1" stroke="#777" stroke-width="4.3" opacity="0.21"/>
<path d="M589.2 552.4C591.0 553.9 596.6 557.7 600.5 561.7C604.4 565.7 608.5 570.2 612.5 576.3C616.5 582.4 622.0 591.1 624.6 598.3C627.2 605.4 627.7 615.7 628.4 619.2" stroke="#6a6a6a" stroke-width="1.4" opacity="0.49"/>
<path d="M590.0 552.9C591.7 554.2 596.5 556.8 600.4 560.7C604.3 564.6 609.5 570.3 613.4 576.3C617.4 582.4 621.3 589.9 623.9 597.2C626.5 604.5 628.2 616.3 629.1 620.1" stroke="#666" stroke-width="2.2" opacity="0.77"/>
<path d="M590.0 602.4C592.6 604.1 601.3 609.9 605.6 612.8C610.0 615.8 614.3 618.9 616.1 620.1" stroke="#777" stroke-width="3.8" opacity="0.18"/>
<path d="M591.1 603.5C593.5 604.9 601.3 609.0 605.6 611.7C609.9 614.5 615.2 618.5 617.1 619.8" stroke="#6a6a6a" stroke-width="1.3" opacity="0.42"/>
<path d="M590.0 602.4C592.6 604.1 601.3 609.9 605.6 612.8C610.0 615.8 614.3 618.9 616.1 620.1" stroke="#666" stroke-width="2.0" opacity="0.66"/>
<path d="M819.3 586.8C821.9 585.9 829.8 583.3 834.9 581.5C840.0 579.8 847.5 577.2 850.0 576.3" stroke="#777" stroke-width="4.1" opacity="0.21"/>
<path d="M820.3 587.0C822.8 586.0 830.6 582.6 835.7 580.7C840.8 578.8 848.2 576.5 850.7 575.7" stroke="#6a6a6a" stroke-width="1.4" opacity="0.49"/>
<path d="M819.3 586.8C821.9 585.9 829.8 583.3 834.9 581.5C840.0 579.8 847.5 577.2 850.0 576.3" stroke="#666" stroke-width="2.1" opacity="0.77"/>
<path d="M591.3 453.9C592.0 455.2 593.9 460.8 595.2 461.7C596.5 462.6 598.5 459.5 599.1 459.1" stroke="#666" stroke-width="1.6" opacity="0.66"/>
<path d="M670.8 248.2C669.7 251.7 666.2 261.3 664.3 269.1C662.3 276.9 659.9 286.5 659.0 295.1C658.2 303.8 658.0 312.5 659.0 321.2C660.1 329.9 662.3 339.0 665.6 347.2C668.8 355.5 672.9 364.2 678.6 370.7C684.2 377.2 692.5 382.9 699.4 386.3C706.4 389.8 713.5 390.6 720.3 391.5C727.0 392.5 736.6 392.0 739.8 392.1" stroke="#777" stroke-width="5.8" opacity="0.24"/>
<path d="M670.5 249.1C669.6 252.3 667.1 260.7 665.0 268.3C663.0 276.0 659.4 286.1 658.4 294.9C657.4 303.7 658.0 312.3 659.1 320.9C660.1 329.5 661.3 338.2 664.7 346.6C668.0 355.1 673.5 365.0 679.1 371.7C684.7 378.3 691.4 383.4 698.3 386.5C705.3 389.6 713.8 389.7 720.9 390.4C727.9 391.2 737.3 391.0 740.6 391.1" stroke="#6a6a6a" stroke-width="1.9" opacity="0.56"/>
<path d="M670.8 248.2C669.7 251.7 666.2 261.3 664.3 269.1C662.3 276.9 659.9 286.5 659.0 295.1C658.2 303.8 658.0 312.5 659.0 321.2C660.1 329.9 662.3 339.0 665.6 347.2C668.8 355.5 672.9 364.2 678.6 370.7C684.2 377.2 692.5 382.9 699.4 386.3C706.4 389.8 713.5 390.6 720.3 391.5C727.0 392.5 736.6 392.0 739.8 392.1" stroke="#666" stroke-width="3.0" opacity="0.88"/>
<path d="M673.4 253.4C672.5 256.9 669.7 266.9 668.2 274.3C666.6 281.7 664.7 289.5 664.3 297.7C663.8 306.0 664.0 315.1 665.6 323.8C667.1 332.5 669.9 342.0 673.4 349.9C676.9 357.7 681.2 365.1 686.4 370.7C691.6 376.3 701.6 381.6 704.6 383.7" stroke="#777" stroke-width="3.8" opacity="0.18"/>
<path d="M673.6 253.6C672.8 256.9 670.1 266.4 668.5 273.8C666.9 281.2 664.6 289.6 664.1 297.9C663.6 306.3 663.9 315.6 665.4 324.2C666.9 332.8 669.9 341.9 673.2 349.7C676.6 357.5 680.0 365.4 685.3 371.0C690.5 376.5 701.4 381.1 704.6 383.1" stroke="#6a6a6a" stroke-width="1.3" opacity="0.42"/>
<path d="M673.4 253.4C672.5 256.9 669.7 266.9 668.2 274.3C666.6 281.7 664.7 289.5 664.3 297.7C663.8 306.0 664.0 315.1 665.6 323.8C667.1 332.5 669.9 342.0 673.4 349.9C676.9 357.7 681.2 365.1 686.4 370.7C691.6 376.3 701.6 381.6 704.6 383.7" stroke="#666" stroke-width="2.0" opacity="0.66"/>
<path d="M668.2 250.8C666.9 254.8 662.8 266.0 660.9 274.3C658.9 282.5 657.0 292.1 656.4 300.3C655.8 308.6 655.9 315.5 657.2 323.8C658.5 332.0 663.1 345.5 664.3 349.9" stroke="#666" stroke-width="1.8" opacity="0.55"/>
<path d="M670.8 248.2C671.6 249.5 674.2 252.6 676.0 256.1C677.7 259.5 678.2 265.0 681.2 269.1C684.2 273.2 689.0 278.2 694.2 280.8C699.4 283.4 706.4 284.5 712.5 284.7C718.5 284.9 725.1 282.8 730.7 282.1C736.3 281.5 741.6 279.5 746.3 280.8C751.1 282.1 755.5 285.8 759.4 289.9C763.3 294.1 766.7 300.3 769.8 305.6C772.8 310.8 776.1 314.7 777.6 321.2C779.1 327.7 778.0 340.1 778.9 344.6C779.8 349.2 782.2 347.9 782.8 348.6" stroke="#777" stroke-width="5.3" opacity="0.23"/>
<path d="M671.4 248.9C672.2 250.0 674.3 252.1 675.9 255.3C677.5 258.5 678.2 263.9 681.1 268.1C684.0 272.4 688.3 277.9 693.3 280.6C698.4 283.4 705.2 284.5 711.5 284.6C717.7 284.6 724.9 281.8 730.7 281.0C736.6 280.2 741.8 278.2 746.7 279.8C751.5 281.4 756.1 286.5 759.9 290.6C763.8 294.7 766.9 299.4 769.8 304.5C772.8 309.5 775.9 314.4 777.6 320.9C779.3 327.4 779.0 339.0 780.0 343.8C781.0 348.6 783.1 348.7 783.7 349.7" stroke="#6a6a6a" stroke-width="1.8" opacity="0.55"/>
<path d="M670.8 248.2C671.6 249.5 674.2 252.6 676.0 256.1C677.7 259.5 678.2 265.0 681.2 269.1C684.2 273.2 689.0 278.2 694.2 280.8C699.4 283.4 706.4 284.5 712.5 284.7C718.5 284.9 725.1 282.8 730.7 282.1C736.3 281.5 741.6 279.5 746.3 280.8C751.1 282.1 755.5 285.8 759.4 289.9C763.3 294.1 766.7 300.3 769.8 305.6C772.8 310.8 776.1 314.7 777.6 321.2C779.1 327.7 778.0 340.1 778.9 344.6C779.8 349.2 782.2 347.9 782.8 348.6" stroke="#666" stroke-width="2.8" opacity="0.86"/>
<path d="M676.0 258.7C677.3 261.3 679.9 269.7 683.8 274.3C687.7 278.9 693.8 283.2 699.4 286.0C705.1 288.8 714.6 290.4 717.7 291.2" stroke="#777" stroke-width="3.6" opacity="0.18"/>
<path d="M676.5 259.4C677.6 262.1 679.3 270.8 683.1 275.5C686.9 280.1 693.5 284.6 699.4 287.1C705.3 289.6 715.5 289.9 718.7 290.4" stroke="#6a6a6a" stroke-width="1.2" opacity="0.42"/>
<path d="M676.0 258.7C677.3 261.3 679.9 269.7 683.8 274.3C687.7 278.9 693.8 283.2 699.4 286.0C705.1 288.8 714.6 290.4 717.7 291.2" stroke="#666" stroke-width="1.9" opacity="0.66"/>
<path d="M730.7 276.9C732.4 276.0 736.8 270.8 741.1 271.7C745.5 272.6 752.0 277.3 756.8 282.1C761.5 286.9 767.2 294.3 769.8 300.3C772.4 306.4 772.0 315.5 772.4 318.6" stroke="#777" stroke-width="3.6" opacity="0.18"/>
<path d="M731.4 277.9C732.8 276.8 735.7 270.8 740.1 271.3C744.4 271.9 752.3 276.5 757.4 281.3C762.5 286.0 768.1 293.7 770.7 299.8C773.4 305.9 772.7 314.7 773.1 317.7" stroke="#6a6a6a" stroke-width="1.2" opacity="0.42"/>
<path d="M730.7 276.9C732.4 276.0 736.8 270.8 741.1 271.7C745.5 272.6 752.0 277.3 756.8 282.1C761.5 286.9 767.2 294.3 769.8 300.3C772.4 306.4 772.0 315.5 772.4 318.6" stroke="#666" stroke-width="1.9" opacity="0.66"/>
<path d="M777.6 344.6C777.2 339.9 774.8 325.1 775.0 316.0C775.2 306.9 776.7 297.7 778.9 289.9C781.1 282.1 785.0 273.9 788.0 269.1C791.1 264.3 795.6 262.6 797.1 261.3" stroke="#777" stroke-width="5.3" opacity="0.23"/>
<path d="M777.6 345.7C777.1 340.6 774.1 324.8 774.3 315.4C774.5 306.1 776.8 297.3 778.9 289.5C781.0 281.6 784.0 272.8 786.9 268.3C789.8 263.8 794.8 263.3 796.3 262.3" stroke="#6a6a6a" stroke-width="1.8" opacity="0.55"/>
<path d="M777.6 344.6C777.2 339.9 774.8 325.1 775.0 316.0C775.2 306.9 776.7 297.7 778.9 289.9C781.1 282.1 785.0 273.9 788.0 269.1C791.1 264.3 795.6 262.6 797.1 261.3" stroke="#666" stroke-width="2.8" opacity="0.86"/>
<path d="M797.1 261.3C798.7 264.3 803.4 273.0 806.3 279.5C809.1 286.0 811.5 294.7 814.1 300.3C816.7 306.0 819.3 310.8 821.9 313.4C824.5 316.0 828.4 315.5 829.7 316.0" stroke="#777" stroke-width="5.3" opacity="0.23"/>
<path d="M797.6 262.2C798.9 265.2 802.9 273.8 805.5 280.2C808.1 286.6 810.4 294.9 813.2 300.4C815.9 305.9 819.3 310.4 822.2 313.0C825.1 315.7 829.2 315.6 830.6 316.1" stroke="#6a6a6a" stroke-width="1.8" opacity="0.55"/>
<path d="M797.1 261.3C798.7 264.3 803.4 273.0 806.3 279.5C809.1 286.0 811.5 294.7 814.1 300.3C816.7 306.0 819.3 310.8 821.9 313.4C824.5 316.0 828.4 315.5 829.7 316.0" stroke="#666" stroke-width="2.8" opacity="0.86"/>
<path d="M784.1 295.1C785.2 291.2 788.2 277.1 790.6 271.7C793.0 266.3 795.0 259.5 798.4 262.6C801.9 265.6 808.0 280.6 811.5 289.9C814.9 299.3 818.0 313.8 819.3 318.6" stroke="#777" stroke-width="3.6" opacity="0.18"/>
<path d="M784.3 296.1C785.2 292.2 787.3 278.5 789.7 272.9C792.1 267.2 795.0 259.6 798.8 262.3C802.5 265.1 808.6 280.0 812.2 289.4C815.8 298.8 819.1 313.9 820.5 318.8" stroke="#6a6a6a" stroke-width="1.2" opacity="0.42"/>
<path d="M784.1 295.1C785.2 291.2 788.2 277.1 790.6 271.7C793.0 266.3 795.0 259.5 798.4 262.6C801.9 265.6 808.0 280.6 811.5 289.9C814.9 299.3 818.0 313.8 819.3 318.6" stroke="#666" stroke-width="1.9" opacity="0.66"/>
<path d="M781.5 339.4C781.2 335.5 779.2 323.8 779.7 316.0C780.1 308.2 783.4 296.4 784.1 292.5" stroke="#666" stroke-width="1.6" opacity="0.55"/>
<path d="M623.9 351.2C622.8 353.5 618.7 359.6 617.4 365.5C616.1 371.3 615.6 379.4 616.1 386.3C616.5 393.3 617.8 402.4 620.0 407.2C622.1 412.0 627.6 413.7 629.1 415.0" stroke="#777" stroke-width="5.3" opacity="0.23"/>
<path d="M623.5 351.8C622.5 353.9 618.4 359.1 617.2 364.7C616.1 370.3 616.1 378.3 616.6 385.2C617.2 392.2 618.6 401.4 620.7 406.6C622.9 411.7 628.0 414.6 629.4 416.2" stroke="#6a6a6a" stroke-width="1.8" opacity="0.55"/>
<path d="M623.9 351.2C622.8 353.5 618.7 359.6 617.4 365.5C616.1 371.3 615.6 379.4 616.1 386.3C616.5 393.3 617.8 402.4 620.0 407.2C622.1 412.0 627.6 413.7 629.1 415.0" stroke="#666" stroke-width="2.8" opacity="0.86"/>
<path d="M623.9 351.2C625.4 351.4 630.2 350.5 633.0 352.5C635.8 354.4 638.6 359.0 640.8 362.9C643.0 366.8 645.2 373.7 646.0 375.9" stroke="#777" stroke-width="4.8" opacity="0.22"/>
<path d="M624.1 351.5C625.5 351.5 629.9 349.5 632.5 351.3C635.1 353.0 637.4 358.0 639.7 362.0C642.0 366.1 645.2 373.5 646.3 375.7" stroke="#6a6a6a" stroke-width="1.6" opacity="0.52"/>
<path d="M623.9 351.2C625.4 351.4 630.2 350.5 633.0 352.5C635.8 354.4 638.6 359.0 640.8 362.9C643.0 366.8 645.2 373.7 646.0 375.9" stroke="#666" stroke-width="2.5" opacity="0.83"/>
<path d="M629.1 357.7C628.0 359.8 623.9 365.1 622.6 370.7C621.3 376.3 620.6 385.0 621.3 391.5C621.9 398.1 625.6 406.7 626.5 409.8" stroke="#777" stroke-width="3.6" opacity="0.18"/>
<path d="M629.1 358.6C627.9 360.5 622.9 364.7 621.7 370.0C620.4 375.3 621.0 383.8 621.6 390.4C622.2 397.0 624.7 406.3 625.3 409.4" stroke="#6a6a6a" stroke-width="1.2" opacity="0.42"/>
<path d="M629.1 357.7C628.0 359.8 623.9 365.1 622.6 370.7C621.3 376.3 620.6 385.0 621.3 391.5C621.9 398.1 625.6 406.7 626.5 409.8" stroke="#666" stroke-width="1.9" opacity="0.66"/>
<path d="M618.7 355.1C617.8 357.7 614.4 365.1 613.4 370.7C612.5 376.3 612.3 382.4 612.9 388.9C613.6 395.5 616.6 406.3 617.4 409.8" stroke="#666" stroke-width="1.6" opacity="0.55"/>
<path d="M590.0 374.6C591.3 374.8 595.2 374.0 597.8 375.9C600.4 377.9 603.0 382.9 605.6 386.3C608.2 389.8 612.1 395.0 613.4 396.8" stroke="#777" stroke-width="4.3" opacity="0.21"/>
<path d="M589.1 374.3C590.4 374.6 594.4 374.2 597.2 376.1C600.0 378.0 603.1 382.2 605.8 385.6C608.6 389.1 612.4 394.8 613.7 396.7" stroke="#6a6a6a" stroke-width="1.4" opacity="0.49"/>
<path d="M590.0 374.6C591.3 374.8 595.2 374.0 597.8 375.9C600.4 377.9 603.0 382.9 605.6 386.3C608.2 389.8 612.1 395.0 613.4 396.8" stroke="#666" stroke-width="2.2" opacity="0.77"/>
<path d="M590.0 381.1C591.7 381.6 597.2 381.1 600.4 383.7C603.7 386.3 608.0 394.6 609.5 396.8" stroke="#666" stroke-width="1.8" opacity="0.61"/>
<path d="M623.9 430.1C626.5 427.6 634.3 418.8 639.5 415.0C644.7 411.2 649.9 408.7 655.1 407.2C660.3 405.7 666.4 404.6 670.8 405.9C675.1 407.2 677.9 411.3 681.2 415.0C684.5 418.7 688.8 425.8 690.3 428.0" stroke="#777" stroke-width="5.0" opacity="0.23"/>
<path d="M623.0 431.2C625.6 428.3 633.7 418.1 638.9 414.2C644.1 410.2 648.7 408.8 654.2 407.5C659.6 406.2 667.2 405.4 671.7 406.6C676.1 407.7 678.0 410.8 681.0 414.4C683.9 418.1 687.8 426.0 689.1 428.4" stroke="#6a6a6a" stroke-width="1.7" opacity="0.55"/>
<path d="M623.9 430.1C626.5 427.6 634.3 418.8 639.5 415.0C644.7 411.2 649.9 408.7 655.1 407.2C660.3 405.7 666.4 404.6 670.8 405.9C675.1 407.2 677.9 411.3 681.2 415.0C684.5 418.7 688.8 425.8 690.3 428.0" stroke="#666" stroke-width="2.6" opacity="0.86"/>
<path d="M629.1 430.1C631.7 428.0 639.5 420.8 644.7 417.6C649.9 414.4 655.6 412.0 660.3 411.1C665.1 410.2 671.2 412.2 673.4 412.4" stroke="#666" stroke-width="1.8" opacity="0.61"/>
<path d="M691.6 422.8C693.4 421.3 698.6 415.4 702.0 413.7C705.5 412.0 709.4 411.3 712.5 412.4C715.5 413.5 718.1 417.3 720.3 420.2C722.4 423.2 724.6 428.5 725.5 430.1" stroke="#777" stroke-width="4.8" opacity="0.22"/>
<path d="M691.8 422.4C693.5 421.0 698.8 415.1 702.4 413.6C706.0 412.0 710.6 411.7 713.5 412.9C716.4 414.2 717.9 418.3 719.7 421.2C721.5 424.0 723.6 428.7 724.4 430.2" stroke="#6a6a6a" stroke-width="1.6" opacity="0.52"/>
<path d="M691.6 422.8C693.4 421.3 698.6 415.4 702.0 413.7C705.5 412.0 709.4 411.3 712.5 412.4C715.5 413.5 718.1 417.3 720.3 420.2C722.4 423.2 724.6 428.5 725.5 430.1" stroke="#666" stroke-width="2.5" opacity="0.83"/>
<path d="M725.5 428.0C727.7 425.8 733.7 418.7 738.5 415.0C743.3 411.3 748.5 407.8 754.1 405.9C759.8 403.9 766.3 402.2 772.4 403.3C778.5 404.4 785.0 407.9 790.6 412.4C796.3 416.9 803.7 427.2 806.3 430.1" stroke="#777" stroke-width="5.0" opacity="0.23"/>
<path d="M725.3 427.4C727.3 425.4 732.8 419.2 737.5 415.7C742.1 412.1 747.0 408.2 753.0 406.0C759.0 403.8 767.3 401.3 773.4 402.4C779.6 403.5 784.4 408.0 789.9 412.6C795.4 417.3 803.5 427.5 806.3 430.4" stroke="#6a6a6a" stroke-width="1.7" opacity="0.55"/>
<path d="M725.5 428.0C727.7 425.8 733.7 418.7 738.5 415.0C743.3 411.3 748.5 407.8 754.1 405.9C759.8 403.9 766.3 402.2 772.4 403.3C778.5 404.4 785.0 407.9 790.6 412.4C796.3 416.9 803.7 427.2 806.3 430.1" stroke="#666" stroke-width="2.6" opacity="0.86"/>
<path d="M730.7 430.1C732.9 428.0 738.9 421.0 743.7 417.6C748.5 414.2 754.1 411.3 759.4 409.8C764.6 408.3 772.4 408.7 775.0 408.5" stroke="#666" stroke-width="1.8" opacity="0.61"/>
<path d="M590.0 248.2C591.5 250.0 596.9 255.2 599.1 258.7C601.3 262.1 603.2 265.6 603.0 269.1C602.8 272.6 600.0 276.9 597.8 279.5C595.6 282.1 591.3 283.8 590.0 284.7" stroke="#777" stroke-width="4.3" opacity="0.21"/>
<path d="M590.8 247.5C592.1 249.2 596.8 254.4 598.7 258.2C600.5 261.9 602.0 266.4 601.9 270.0C601.9 273.7 600.7 277.4 598.5 280.0C596.3 282.6 590.4 284.6 588.8 285.5" stroke="#6a6a6a" stroke-width="1.4" opacity="0.49"/>
<path d="M590.0 248.2C591.5 250.0 596.9 255.2 599.1 258.7C601.3 262.1 603.2 265.6 603.0 269.1C602.8 272.6 600.0 276.9 597.8 279.5C595.6 282.1 591.3 283.8 590.0 284.7" stroke="#666" stroke-width="2.2" opacity="0.77"/>
<path d="M590.0 253.4C591.1 255.2 595.2 260.4 596.5 263.9C597.8 267.3 598.7 271.3 597.8 274.3C596.9 277.3 592.4 280.8 591.3 282.1" stroke="#666" stroke-width="1.6" opacity="0.55"/>
<path d="M707.2 377.2C709.4 377.9 716.2 381.3 720.3 381.1C724.4 380.9 730.0 376.8 732.0 375.9" stroke="#666" stroke-width="1.5" opacity="0.50"/>
<path d="M689.0 365.5L690.3 375.9" stroke="#666" stroke-width="1.4" opacity="0.44"/>
<path d="M584.4 458.0C580.6 454.2 568.0 442.3 561.4 435.0C554.8 427.7 550.8 423.6 545.0 414.0C539.2 404.4 532.0 390.3 526.8 377.5C521.6 364.7 517.6 352.0 514.0 337.4C510.4 322.8 506.8 305.2 504.9 290.0C502.9 274.8 502.0 261.4 502.3 246.2C502.6 231.0 504.4 212.2 506.7 198.8C508.9 185.4 512.4 173.0 515.8 166.0C519.1 159.0 523.8 158.0 526.8 156.8C529.8 155.6 530.4 155.2 534.0 158.6C537.6 161.9 542.5 169.0 548.6 176.9C554.7 184.8 562.6 196.6 570.5 206.0C578.4 215.4 586.3 224.6 596.0 233.4C605.7 242.2 617.6 251.8 628.9 259.0C640.1 266.2 657.7 273.5 663.5 276.4" stroke="#888" stroke-width="6" opacity=".22"/>
<path d="M584.4 458.0C580.6 454.2 568.0 442.3 561.4 435.0C554.8 427.7 550.8 423.6 545.0 414.0C539.2 404.4 532.0 390.3 526.8 377.5C521.6 364.7 517.6 352.0 514.0 337.4C510.4 322.8 506.8 305.2 504.9 290.0C502.9 274.8 502.0 261.4 502.3 246.2C502.6 231.0 504.4 212.2 506.7 198.8C508.9 185.4 512.4 173.0 515.8 166.0C519.1 159.0 523.8 158.0 526.8 156.8C529.8 155.6 530.4 155.2 534.0 158.6C537.6 161.9 542.5 169.0 548.6 176.9C554.7 184.8 562.6 196.6 570.5 206.0C578.4 215.4 586.3 224.6 596.0 233.4C605.7 242.2 617.6 251.8 628.9 259.0C640.1 266.2 657.7 273.5 663.5 276.4" stroke="#777" stroke-width="1.800" opacity=".6" transform="translate(-2.5 1)"/>
<path d="M584.4 458.0C580.6 454.2 568.0 442.3 561.4 435.0C554.8 427.7 550.8 423.6 545.0 414.0C539.2 404.4 532.0 390.3 526.8 377.5C521.6 364.7 517.6 352.0 514.0 337.4C510.4 322.8 506.8 305.2 504.9 290.0C502.9 274.8 502.0 261.4 502.3 246.2C502.6 231.0 504.4 212.2 506.7 198.8C508.9 185.4 512.4 173.0 515.8 166.0C519.1 159.0 523.8 158.0 526.8 156.8C529.8 155.6 530.4 155.2 534.0 158.6C537.6 161.9 542.5 169.0 548.6 176.9C554.7 184.8 562.6 196.6 570.5 206.0C578.4 215.4 586.3 224.6 596.0 233.4C605.7 242.2 617.6 251.8 628.9 259.0C640.1 266.2 657.7 273.5 663.5 276.4" stroke="#8a8a8a" stroke-width="1.300" opacity=".45" transform="translate(2.0 -0.8)"/>
<path d="M573.0 411.4C570.8 407.6 564.0 398.3 559.6 388.4C555.2 378.5 550.4 364.8 546.8 352.0C543.1 339.2 540.1 326.4 537.7 311.8C535.3 297.2 533.1 278.4 532.2 264.4C531.4 250.4 532.1 237.3 532.6 228.0C533.1 218.7 534.1 211.7 535.2 208.6C536.4 205.5 537.3 205.9 539.5 209.7C541.7 213.5 544.0 221.9 548.6 231.6C553.2 241.3 559.6 256.8 566.9 268.0C574.2 279.2 584.5 290.2 592.4 299.0C600.3 307.8 607.9 315.2 614.3 321.0C620.7 326.8 626.2 329.4 630.7 333.7C635.2 337.9 638.9 341.0 641.6 346.5C644.3 352.0 645.8 357.4 647.1 366.5C648.5 375.6 649.3 395.4 649.7 401.2" stroke="#888" stroke-width="6" opacity=".22"/>
<path d="M573.0 411.4C570.8 407.6 564.0 398.3 559.6 388.4C555.2 378.5 550.4 364.8 546.8 352.0C543.1 339.2 540.1 326.4 537.7 311.8C535.3 297.2 533.1 278.4 532.2 264.4C531.4 250.4 532.1 237.3 532.6 228.0C533.1 218.7 534.1 211.7 535.2 208.6C536.4 205.5 537.3 205.9 539.5 209.7C541.7 213.5 544.0 221.9 548.6 231.6C553.2 241.3 559.6 256.8 566.9 268.0C574.2 279.2 584.5 290.2 592.4 299.0C600.3 307.8 607.9 315.2 614.3 321.0C620.7 326.8 626.2 329.4 630.7 333.7C635.2 337.9 638.9 341.0 641.6 346.5C644.3 352.0 645.8 357.4 647.1 366.5C648.5 375.6 649.3 395.4 649.7 401.2" stroke="#777" stroke-width="1.800" opacity=".6" transform="translate(2.5 -1)"/>
<path d="M573.0 411.4C570.8 407.6 564.0 398.3 559.6 388.4C555.2 378.5 550.4 364.8 546.8 352.0C543.1 339.2 540.1 326.4 537.7 311.8C535.3 297.2 533.1 278.4 532.2 264.4C531.4 250.4 532.1 237.3 532.6 228.0C533.1 218.7 534.1 211.7 535.2 208.6C536.4 205.5 537.3 205.9 539.5 209.7C541.7 213.5 544.0 221.9 548.6 231.6C553.2 241.3 559.6 256.8 566.9 268.0C574.2 279.2 584.5 290.2 592.4 299.0C600.3 307.8 607.9 315.2 614.3 321.0C620.7 326.8 626.2 329.4 630.7 333.7C635.2 337.9 638.9 341.0 641.6 346.5C644.3 352.0 645.8 357.4 647.1 366.5C648.5 375.6 649.3 395.4 649.7 401.2" stroke="#8a8a8a" stroke-width="1.300" opacity=".45" transform="translate(-2.0 0.8)"/>
<path d="M809.0 395.0C808.4 390.8 805.2 379.0 805.4 370.0C805.6 361.0 806.8 349.5 810.0 341.0C813.2 332.5 816.9 326.9 824.8 319.0C832.7 311.1 844.8 302.1 857.6 293.6C870.4 285.1 888.0 274.4 901.4 268.0C914.8 261.6 925.6 259.0 937.8 255.3C949.9 251.6 962.1 249.4 974.3 246.0C986.5 242.6 998.7 239.8 1010.8 235.0C1022.9 230.2 1036.4 222.9 1047.0 217.0C1057.6 211.1 1068.8 203.2 1074.6 199.5C1080.4 195.8 1080.8 195.8 1082.0 195.0" stroke="#888" stroke-width="6" opacity=".22"/>
<path d="M809.0 395.0C808.4 390.8 805.2 379.0 805.4 370.0C805.6 361.0 806.8 349.5 810.0 341.0C813.2 332.5 816.9 326.9 824.8 319.0C832.7 311.1 844.8 302.1 857.6 293.6C870.4 285.1 888.0 274.4 901.4 268.0C914.8 261.6 925.6 259.0 937.8 255.3C949.9 251.6 962.1 249.4 974.3 246.0C986.5 242.6 998.7 239.8 1010.8 235.0C1022.9 230.2 1036.4 222.9 1047.0 217.0C1057.6 211.1 1068.8 203.2 1074.6 199.5C1080.4 195.8 1080.8 195.8 1082.0 195.0" stroke="#777" stroke-width="1.800" opacity=".6" transform="translate(2 1.5)"/>
<path d="M809.0 395.0C808.4 390.8 805.2 379.0 805.4 370.0C805.6 361.0 806.8 349.5 810.0 341.0C813.2 332.5 816.9 326.9 824.8 319.0C832.7 311.1 844.8 302.1 857.6 293.6C870.4 285.1 888.0 274.4 901.4 268.0C914.8 261.6 925.6 259.0 937.8 255.3C949.9 251.6 962.1 249.4 974.3 246.0C986.5 242.6 998.7 239.8 1010.8 235.0C1022.9 230.2 1036.4 222.9 1047.0 217.0C1057.6 211.1 1068.8 203.2 1074.6 199.5C1080.4 195.8 1080.8 195.8 1082.0 195.0" stroke="#8a8a8a" stroke-width="1.300" opacity=".45" transform="translate(-1.6 -1.2)"/>
<path d="M854.0 424.9C854.9 421.8 856.4 413.9 859.4 406.6C862.4 399.3 865.9 389.3 872.0 381.0C878.1 372.7 884.9 365.8 895.9 356.7C906.9 347.6 924.7 335.4 937.8 326.4C950.9 317.4 962.1 310.0 974.3 302.7C986.5 295.4 997.8 289.1 1010.8 282.6C1023.8 276.1 1045.1 266.9 1052.0 263.7" stroke="#888" stroke-width="6" opacity=".22"/>
<path d="M854.0 424.9C854.9 421.8 856.4 413.9 859.4 406.6C862.4 399.3 865.9 389.3 872.0 381.0C878.1 372.7 884.9 365.8 895.9 356.7C906.9 347.6 924.7 335.4 937.8 326.4C950.9 317.4 962.1 310.0 974.3 302.7C986.5 295.4 997.8 289.1 1010.8 282.6C1023.8 276.1 1045.1 266.9 1052.0 263.7" stroke="#777" stroke-width="1.800" opacity=".6" transform="translate(-2 -1.5)"/>
<path d="M854.0 424.9C854.9 421.8 856.4 413.9 859.4 406.6C862.4 399.3 865.9 389.3 872.0 381.0C878.1 372.7 884.9 365.8 895.9 356.7C906.9 347.6 924.7 335.4 937.8 326.4C950.9 317.4 962.1 310.0 974.3 302.7C986.5 295.4 997.8 289.1 1010.8 282.6C1023.8 276.1 1045.1 266.9 1052.0 263.7" stroke="#8a8a8a" stroke-width="1.300" opacity=".45" transform="translate(1.6 1.2)"/>
<path d="M1052.0 263.7C1051.5 269.9 1051.0 289.8 1049.0 300.9C1047.0 311.9 1043.9 319.7 1040.0 330.0C1036.1 340.3 1031.5 352.6 1025.4 362.9C1019.3 373.2 1012.0 382.9 1003.5 392.0C995.0 401.1 982.8 410.4 974.3 417.6C965.8 424.8 959.1 429.8 952.4 435.0C945.7 440.2 937.1 446.7 934.0 449.0" stroke="#888" stroke-width="6" opacity=".22"/>
<path d="M1052.0 263.7C1051.5 269.9 1051.0 289.8 1049.0 300.9C1047.0 311.9 1043.9 319.7 1040.0 330.0C1036.1 340.3 1031.5 352.6 1025.4 362.9C1019.3 373.2 1012.0 382.9 1003.5 392.0C995.0 401.1 982.8 410.4 974.3 417.6C965.8 424.8 959.1 429.8 952.4 435.0C945.7 440.2 937.1 446.7 934.0 449.0" stroke="#777" stroke-width="1.800" opacity=".6" transform="translate(2.5 1)"/>
<path d="M1052.0 263.7C1051.5 269.9 1051.0 289.8 1049.0 300.9C1047.0 311.9 1043.9 319.7 1040.0 330.0C1036.1 340.3 1031.5 352.6 1025.4 362.9C1019.3 373.2 1012.0 382.9 1003.5 392.0C995.0 401.1 982.8 410.4 974.3 417.6C965.8 424.8 959.1 429.8 952.4 435.0C945.7 440.2 937.1 446.7 934.0 449.0" stroke="#8a8a8a" stroke-width="1.300" opacity=".45" transform="translate(-2.0 -0.8)"/>
<path d="M1082.0 230.0C1080.8 235.7 1076.8 252.6 1074.6 264.4C1072.4 276.2 1072.3 287.5 1069.0 300.9C1065.7 314.3 1060.0 331.2 1054.5 344.6C1049.0 358.0 1043.6 369.4 1036.3 381.0C1029.0 392.6 1018.1 405.0 1010.8 414.0C1003.5 423.0 998.6 427.9 992.5 435.0C986.4 442.1 982.2 449.6 974.3 456.9C966.4 464.2 953.5 473.0 945.0 478.8C936.5 484.6 930.5 488.2 923.2 491.5C915.9 494.8 905.0 497.6 901.4 498.8" stroke="#888" stroke-width="6" opacity=".22"/>
<path d="M1082.0 230.0C1080.8 235.7 1076.8 252.6 1074.6 264.4C1072.4 276.2 1072.3 287.5 1069.0 300.9C1065.7 314.3 1060.0 331.2 1054.5 344.6C1049.0 358.0 1043.6 369.4 1036.3 381.0C1029.0 392.6 1018.1 405.0 1010.8 414.0C1003.5 423.0 998.6 427.9 992.5 435.0C986.4 442.1 982.2 449.6 974.3 456.9C966.4 464.2 953.5 473.0 945.0 478.8C936.5 484.6 930.5 488.2 923.2 491.5C915.9 494.8 905.0 497.6 901.4 498.8" stroke="#777" stroke-width="1.800" opacity=".6" transform="translate(-2.5 -1)"/>
<path d="M1082.0 230.0C1080.8 235.7 1076.8 252.6 1074.6 264.4C1072.4 276.2 1072.3 287.5 1069.0 300.9C1065.7 314.3 1060.0 331.2 1054.5 344.6C1049.0 358.0 1043.6 369.4 1036.3 381.0C1029.0 392.6 1018.1 405.0 1010.8 414.0C1003.5 423.0 998.6 427.9 992.5 435.0C986.4 442.1 982.2 449.6 974.3 456.9C966.4 464.2 953.5 473.0 945.0 478.8C936.5 484.6 930.5 488.2 923.2 491.5C915.9 494.8 905.0 497.6 901.4 498.8" stroke="#8a8a8a" stroke-width="1.300" opacity=".45" transform="translate(2.0 0.8)"/>
<path d="M584.4 458.0C580.6 454.2 568.0 442.3 561.4 435.0C554.8 427.7 550.8 423.6 545.0 414.0C539.2 404.4 532.0 390.3 526.8 377.5C521.6 364.7 517.6 352.0 514.0 337.4C510.4 322.8 506.8 305.2 504.9 290.0C502.9 274.8 502.0 261.4 502.3 246.2C502.6 231.0 504.4 212.2 506.7 198.8C508.9 185.4 512.4 173.0 515.8 166.0C519.1 159.0 523.8 158.0 526.8 156.8C529.8 155.6 530.4 155.2 534.0 158.6C537.6 161.9 542.5 169.0 548.6 176.9C554.7 184.8 562.6 196.6 570.5 206.0C578.4 215.4 586.3 224.6 596.0 233.4C605.7 242.2 617.6 251.8 628.9 259.0C640.1 266.2 657.7 273.5 663.5 276.4" stroke="#000" stroke-width="2.600"/>
<path d="M573.0 411.4C570.8 407.6 564.0 398.3 559.6 388.4C555.2 378.5 550.4 364.8 546.8 352.0C543.1 339.2 540.1 326.4 537.7 311.8C535.3 297.2 533.1 278.4 532.2 264.4C531.4 250.4 532.1 237.3 532.6 228.0C533.1 218.7 534.1 211.7 535.2 208.6C536.4 205.5 537.3 205.9 539.5 209.7C541.7 213.5 544.0 221.9 548.6 231.6C553.2 241.3 559.6 256.8 566.9 268.0C574.2 279.2 584.5 290.2 592.4 299.0C600.3 307.8 607.9 315.2 614.3 321.0C620.7 326.8 626.2 329.4 630.7 333.7C635.2 337.9 638.9 341.0 641.6 346.5C644.3 352.0 645.8 357.4 647.1 366.5C648.5 375.6 649.3 395.4 649.7 401.2" stroke="#000" stroke-width="2.600"/>
<path d="M809.0 395.0C808.4 390.8 805.2 379.0 805.4 370.0C805.6 361.0 806.8 349.5 810.0 341.0C813.2 332.5 816.9 326.9 824.8 319.0C832.7 311.1 844.8 302.1 857.6 293.6C870.4 285.1 888.0 274.4 901.4 268.0C914.8 261.6 925.6 259.0 937.8 255.3C949.9 251.6 962.1 249.4 974.3 246.0C986.5 242.6 998.7 239.8 1010.8 235.0C1022.9 230.2 1036.4 222.9 1047.0 217.0C1057.6 211.1 1068.8 203.2 1074.6 199.5C1080.4 195.8 1080.8 195.8 1082.0 195.0" stroke="#000" stroke-width="2.600"/>
<path d="M854.0 424.9C854.9 421.8 856.4 413.9 859.4 406.6C862.4 399.3 865.9 389.3 872.0 381.0C878.1 372.7 884.9 365.8 895.9 356.7C906.9 347.6 924.7 335.4 937.8 326.4C950.9 317.4 962.1 310.0 974.3 302.7C986.5 295.4 997.8 289.1 1010.8 282.6C1023.8 276.1 1045.1 266.9 1052.0 263.7" stroke="#000" stroke-width="2.600"/>
<path d="M1052.0 263.7C1051.5 269.9 1051.0 289.8 1049.0 300.9C1047.0 311.9 1043.9 319.7 1040.0 330.0C1036.1 340.3 1031.5 352.6 1025.4 362.9C1019.3 373.2 1012.0 382.9 1003.5 392.0C995.0 401.1 982.8 410.4 974.3 417.6C965.8 424.8 959.1 429.8 952.4 435.0C945.7 440.2 937.1 446.7 934.0 449.0" stroke="#000" stroke-width="2.600"/>
<path d="M1082.0 230.0C1080.8 235.7 1076.8 252.6 1074.6 264.4C1072.4 276.2 1072.3 287.5 1069.0 300.9C1065.7 314.3 1060.0 331.2 1054.5 344.6C1049.0 358.0 1043.6 369.4 1036.3 381.0C1029.0 392.6 1018.1 405.0 1010.8 414.0C1003.5 423.0 998.6 427.9 992.5 435.0C986.4 442.1 982.2 449.6 974.3 456.9C966.4 464.2 953.5 473.0 945.0 478.8C936.5 484.6 930.5 488.2 923.2 491.5C915.9 494.8 905.0 497.6 901.4 498.8" stroke="#000" stroke-width="2.600"/>
<ellipse cx="403" cy="491.500" rx="1.500" ry="2.500" fill="#3a7a70" stroke="none" transform="rotate(15 403 491.500)"/>
<path d="M940 446L1013 407" stroke="#2a3a8e" stroke-width=".9" stroke-dasharray="2.500 5" opacity=".8"/>
<circle cx="895.900" cy="356.700" r="4.700" fill="#fff" stroke="#1e2a6e" stroke-width="1.400"/>
<circle cx="1052" cy="263.700" r="4.700" fill="#fff" stroke="#1e2a6e" stroke-width="1.400"/>
<rect x="849.500" y="420" width="9" height="9" fill="#fff" stroke="#1e2a6e" stroke-width="1.300" transform="rotate(45 854 424.500)"/>
<rect x="929.500" y="444.500" width="9" height="9" fill="#a4d4f6" stroke="#24307a" stroke-width="1.300" transform="rotate(45 934 449)"/>
<circle cx="1016.200" cy="405.200" r="3" fill="#7cc4f0" stroke="#3a56a0" stroke-width="1"/>
<path d="M756 481.500l14 6.500-7 1.500-.5 6.500z" fill="#000" stroke="none"/>
</g></svg>
<div class="a" style="left:371.5px;top:131.5px;width:14px;height:14px;border-radius:50%;background:conic-gradient(from 20deg,#f040d0 0,#f8a040 22%,#f0e040 34%,#40e8c0 48%,#38c8f8 66%,#c060f0 82%,#f040d0 100%)"></div><svg style="left:371.5px;top:131.5px" width="14" height="14" viewBox="0 0 14 14"><path d="M1.500 4.500C3 3.500 4.500 4 5.500 5.500L10 10l-1.200 1.200L4.500 7C3 6.500 2 6 1.500 4.500z" fill="#22223a"/><circle cx="9.600" cy="10" r="1.300" fill="#f4f0f4"/></svg>
<div class="t dk" style="transform:scaleX(0.941);left:596px;top:132.500px;font-size:12.500px">Scan_2026-04-02_22-29-34_1.jpg (126.1 MiB) *</div>
<svg style="left:1060.500px;top:135.500px" width="12" height="12" viewBox="0 0 12 12"><path d="M1 1l10 10M11 1L1 11" stroke="#e8e8e8" stroke-width="1.800"/></svg>
<div class="a" style="left:1075.200px;top:155.500px;width:13.800px;height:556.500px;background:#3f3f40"></div>
<div class="a" style="left:1076.500px;top:298.500px;width:12px;height:140px;background:#4d4d4e;border:1px solid #585859;border-radius:2px"></div>
<div class="a" style="left:1076.500px;top:156.500px;width:12px;height:12px;border:1px solid #565657"></div>
<div class="a" style="left:1076.500px;top:699.500px;width:12px;height:12px;border:1px solid #565657"></div>
<svg style="left:1078px;top:159.500px" width="9" height="6" viewBox="0 0 9 6"><path d="M.5 5.500h8L4.500.5z" fill="#a4a4a4"/></svg>
<svg style="left:1078px;top:702.500px" width="9" height="6" viewBox="0 0 9 6"><path d="M.5.500h8L4.500 5.500z" fill="#b4b4b4"/></svg>
<div class="a" style="left:359px;top:712px;width:716.500px;height:14px;background:#3f3f40"></div>
<div class="a" style="left:589px;top:713.500px;width:230px;height:12px;background:#4d4d4e;border:1px solid #585859;border-radius:2px"></div>
<div class="a" style="left:360px;top:713.500px;width:12px;height:12px;border:1px solid #565657"></div>
<div class="a" style="left:1062.500px;top:713.500px;width:12.500px;height:12px;border:1px solid #565657"></div>
<svg style="left:363px;top:715px" width="6" height="9" viewBox="0 0 6 9"><path d="M5.500.5v8L.5 4.500z" fill="#b4b4b4"/></svg>
<svg style="left:1066px;top:715px" width="6" height="9" viewBox="0 0 6 9"><path d="M.5.500v8L5.500 4.500z" fill="#a4a4a4"/></svg>
<!-- right dock -->
<div class="a" style="left:1096px;top:149px;width:125px;height:1px;background:#5a5a5b"></div>
<div class="tab tabun" style="left:1096.500px;top:127.500px;width:122px;height:21.500px"></div>
<div class="tab tabsel" style="left:1220px;top:125px;width:132px;height:25px"></div>
<div class="t dk" style="transform:scaleX(0.885);left:1107.250px;top:130px">Specific Colour Se…</div>
<div class="t dk" style="transform:scaleX(0.881);left:1232px;top:129px">Advanced Colour Se…</div>
<svg style="left:1096.5px;top:150px" width="16" height="16" viewBox="0 0 16 16"><circle cx="8" cy="8" r="7.200" fill="none" stroke="#dcdcdc" stroke-width="1.200"/><rect x="4.800" y="7.300" width="6.400" height="4.200" fill="#dcdcdc"/><path d="M5.800 7.500V6.200a2.200 2.200 0 0 1 4.400 0v1.300" fill="none" stroke="#dcdcdc" stroke-width="1.100"/></svg>
<div class="t dk" style="transform:scaleX(0.893);left:1119px;top:150px">Advanced Colour Selector</div>
<svg style="left:1314.500px;top:151.5px" width="14" height="13" viewBox="0 0 14 13"><path d="M5 4V.8h8.200v7H9.500" fill="none" stroke="#e0e0e0" stroke-width="1.300"/><rect x=".8" y="4.800" width="8" height="7.400" fill="none" stroke="#e0e0e0" stroke-width="1.300"/></svg><svg style="left:1338px;top:152.5px" width="11" height="11" viewBox="0 0 11 11"><path d="M.8.800l9.400 9.400M10.200.8L.8 10.200" stroke="#e8e8e8" stroke-width="1.500"/></svg>
<svg style="left:1104px;top:175px" width="16" height="16" viewBox="0 0 16 16"><rect x=".7" y=".7" width="14.600" height="14.600" fill="none" stroke="#e0e0e0" stroke-width="1.300"/><path d="M4 4v8.500M6.500 4.500h6M6.500 8h6M6.500 11.500h6" stroke="#e0e0e0" stroke-width="1.500"/></svg>
<div class="a" style="left:1336.500px;top:167px;width:16px;height:234px;background:#3a3a3b"></div>
<div class="a" style="left:1336.500px;top:183px;width:16px;height:16px;background:#000"></div>
<svg style="left:1338.500px;top:168.500px" width="12" height="12" viewBox="0 0 12 12"><circle cx="6" cy="6" r="5" fill="none" stroke="#e4e4e4" stroke-width="1.500"/><path d="M2.500 2.500l7 7" stroke="#e4e4e4" stroke-width="1.500"/></svg>
<div class="a" style="left:1116.3px;top:168.0px;width:199.0px;height:199.0px;border-radius:50%;background:conic-gradient(from -90deg,#f00,#ff0,#0f0,#0ff,#00f,#f0f,#f00);-webkit-mask:radial-gradient(circle closest-side,transparent 83.0px,#000 84.0px,#000 98.8px,transparent 99.8px);mask:radial-gradient(circle closest-side,transparent 83.0px,#000 84.0px,#000 98.8px,transparent 99.8px)"></div>
<svg style="left:0;top:0;isolation:isolate" width="1366" height="768" viewBox="0 0 1366 768"><defs><linearGradient id="tw" gradientUnits="userSpaceOnUse" x1="1144.8" y1="308.5" x2="1251.3" y2="247.0"><stop offset="0" stop-color="#fff"/><stop offset="1" stop-color="#fff" stop-opacity="0"/></linearGradient><linearGradient id="th" gradientUnits="userSpaceOnUse" x1="1286.8" y1="308.5" x2="1180.3" y2="247.0"><stop offset="0" stop-color="#ff6600"/><stop offset="1" stop-color="#ff6600" stop-opacity="0"/></linearGradient></defs><g style="isolation:isolate"><path d="M1215.8 185.5L1144.8 308.5L1286.8 308.5z" fill="#000"/><path d="M1215.8 185.5L1144.8 308.5L1286.8 308.5z" fill="url(#tw)"/><path d="M1215.8 185.5L1144.8 308.5L1286.8 308.5z" fill="url(#th)" style="mix-blend-mode:plus-lighter"/></g><circle cx="1215.8" cy="184.5" r="3.500" fill="none" stroke="#e8e8e8" stroke-width="1"/><path d="M1139.5 233.5L1124.9 227.0" stroke="#fff" stroke-width="1.500"/><path d="M1138.8 235.1L1124.2 228.6" stroke="#000" stroke-width=".8" opacity=".6"/></svg>
<div class="a" style="left:1095.500px;top:369.500px;width:241.500px;height:10.400px;background:#000"></div>
<div class="a" style="left:1095.500px;top:379.900px;width:241.500px;height:10.400px;background:linear-gradient(90deg,#000 0,#000 50%,#8c4444 100%)"></div>
<div class="a" style="left:1095.500px;top:390.300px;width:241.500px;height:10.400px;background:linear-gradient(90deg,#000 0,#000 50%,#8c8c8c 100%)"></div>
<div class="a" style="left:1211.500px;top:369.500px;width:9px;height:31px;border-left:1.500px solid #e8e8e8;border-right:1.500px solid #e8e8e8;background:linear-gradient(180deg,transparent 9.500px,#e8e8e8 9.500px 10.800px,transparent 10.800px 20px,#e8e8e8 20px 21.300px,transparent 21.300px)"></div>
<svg style="left:1097px;top:406px" width="13" height="13" viewBox="0 0 20 20"><path d="M17 8A7.500 7.500 0 0 0 3.500 6M3 12a7.500 7.500 0 0 0 13.500 2" fill="none" stroke="#e0e0e0" stroke-width="2.200"/><path d="M13 7.500l5.500 2L19 3zM7 12.500L1.500 10.500 1 17z" fill="#e0e0e0"/></svg>
<div class="a" style="left:1218px;top:423px;width:17px;height:2px;background:repeating-linear-gradient(90deg,#8a8a8a 0 1.500px,transparent 1.500px 3px)"></div>
<div class="a" style="left:1092px;top:418px;width:2px;height:16px;background:repeating-linear-gradient(180deg,#8a8a8a 0 1.500px,transparent 1.500px 3px)"></div>
<div class="a" style="left:1183px;top:451.500px;width:171px;height:1px;background:#5a5a5b"></div>
<div class="tab tabsel" style="left:1096px;top:428px;width:87.500px;height:24.500px"></div>
<div class="tab tabun" style="left:1185.500px;top:431px;width:67px;height:20.500px"></div>
<div class="t dk" style="transform:scaleX(0.923);left:1107.500px;top:431.500px">Undo History</div>
<div class="t dk" style="transform:scaleX(0.902);left:1196.500px;top:432.500px">Recorder</div>
<svg style="left:1096.5px;top:453px" width="16" height="16" viewBox="0 0 16 16"><circle cx="8" cy="8" r="7.200" fill="none" stroke="#dcdcdc" stroke-width="1.200"/><rect x="4.800" y="7.300" width="6.400" height="4.200" fill="#dcdcdc"/><path d="M5.800 7.500V6.200a2.200 2.200 0 0 1 4.400 0v1.300" fill="none" stroke="#dcdcdc" stroke-width="1.100"/></svg>
<div class="t dk" style="transform:scaleX(0.923);left:1119px;top:453px">Undo History</div>
<svg style="left:1314.500px;top:454.5px" width="14" height="13" viewBox="0 0 14 13"><path d="M5 4V.8h8.200v7H9.500" fill="none" stroke="#e0e0e0" stroke-width="1.300"/><rect x=".8" y="4.800" width="8" height="7.400" fill="none" stroke="#e0e0e0" stroke-width="1.300"/></svg><svg style="left:1338px;top:455.5px" width="11" height="11" viewBox="0 0 11 11"><path d="M.8.800l9.400 9.400M10.200.8L.8 10.200" stroke="#e8e8e8" stroke-width="1.500"/></svg>
<div class="a" style="left:1096px;top:468.700px;width:243px;height:256.300px;background:#343435;overflow:hidden" id="ul">
<svg style="left:3px;top:-14.6px" width="32" height="32" viewBox="0 0 32 32"><rect width="32" height="32" fill="#d6d6d6"/><path d="M9.7 17.4h1.3M23.8 11.8h1.3M23.1 18.8h1.0M7.9 11.6h0.8M20.4 13.5h1.3M7.1 28.9h0.8M25.0 20.6h1.3M13.1 24.3h1.0M9.5 11.8h1.0M22.0 25.2h0.8M12.0 12.2h1.0M7.0 8.0h1.3M11.0 26.4h0.8M28.8 21.1h0.8M23.4 8.0h0.8M25.5 6.2h1.0M9.2 19.7h1.0M13.7 7.1h1.0M8.0 9.8h0.8M10.1 9.3h1.0M10.4 15.9h1.3M11.1 16.0h1.0M23.5 20.8h1.0M24.9 16.9h1.0M13.0 26.4h1.3M22.4 12.1h1.0M22.1 12.9h1.0M8.9 11.4h1.3M10.2 24.1h1.3M25.1 5.0h1.3M18.8 10.5h1.0M21.8 21.1h1.0M22.7 7.6h0.8M10.9 23.9h1.3M18.4 10.1h1.3M26.2 5.1h1.0M19.1 25.6h1.0M23.9 4.8h1.3M14.4 26.1h0.8M15.6 11.5h1.0M23.2 25.1h1.3M11.2 25.6h1.3M14.4 26.8h1.3M20.1 22.9h1.0M9.3 14.4h1.0M9.0 8.7h0.8M9.6 13.3h1.3M27.1 9.0h1.3M10.0 11.0h1.3M17.4 27.7h1.0M16.3 26.9h0.8M21.0 27.9h1.0M25.9 4.6h1.0M23.5 19.8h1.3M21.6 24.0h1.3M9.8 13.8h1.3M6.1 9.5h1.0M24.0 25.2h0.8M8.2 11.6h0.8M9.6 18.0h0.8M23.2 4.2h0.8M24.7 17.7h1.3M8.5 18.9h1.0M9.2 8.5h1.0M8.1 6.8h0.8M25.8 4.3h1.3M10.5 13.0h1.0M21.6 11.8h1.0M9.8 5.7h0.8M8.8 6.5h0.8M12.7 27.2h1.0M13.3 12.7h1.3M21.9 12.7h1.3M7.3 17.4h1.0M16.9 13.8h0.8M8.8 10.1h0.8M21.2 12.7h1.0M27.8 18.6h0.8M16.9 11.7h1.3M7.6 6.7h1.3M13.6 23.3h0.8M19.8 15.3h1.3M13.2 12.9h1.0M17.5 29.1h1.0M10.3 14.5h0.8M10.0 9.2h1.3M8.7 12.1h0.8M8.7 9.2h1.3M23.2 6.8h1.3M11.3 15.8h1.0M20.9 12.7h1.0M11.0 10.2h1.0M9.8 16.4h0.8M17.6 9.3h1.0M26.9 5.6h1.3M22.8 9.5h1.0M25.9 4.2h0.8M19.9 24.0h0.8M25.2 9.5h0.8M6.6 19.8h1.3M26.4 9.9h0.8M11.5 21.1h1.3M6.1 10.1h1.0M8.5 21.1h0.8M9.9 21.3h1.0M11.1 13.4h0.8M6.5 5.2h0.8M10.3 10.3h1.3M11.1 13.3h1.3M20.6 14.6h1.0M23.0 11.1h1.0M13.5 26.9h1.3M24.4 5.9h0.8M10.3 15.1h1.3M12.3 25.0h1.3M18.3 24.0h1.0M20.5 27.2h1.3M10.5 12.5h1.0M21.8 25.1h1.0M8.1 6.2h1.0M14.7 24.8h0.8M10.9 14.6h0.8M23.5 10.4h1.3M9.2 22.5h1.3M11.9 16.0h1.0M17.2 7.6h0.8M16.0 26.3h1.0M27.7 13.3h1.3M11.0 16.4h1.3M24.3 8.6h1.3M11.6 14.5h0.8M20.2 16.3h1.3M25.1 6.4h1.3M27.6 6.0h1.0M26.2 6.7h0.8M25.4 6.0h0.8M6.7 4.8h1.0M26.0 5.5h0.8M21.5 13.6h0.8M14.4 23.4h1.0M17.3 14.1h1.3M6.4 19.2h1.3M21.0 12.9h0.8M10.9 12.7h0.8M24.5 8.0h1.3M11.6 15.8h1.0M9.3 20.5h0.8M22.4 19.8h1.3M21.5 23.1h0.8M8.2 5.5h1.0" stroke="#2a2a2a" stroke-width=".9" fill="none" opacity=".8"/></svg>
<div class="t dk" style="transform:scaleX(0.933);left:41px;top:-6.6px;color:#ececec">Insert points</div>
<svg style="left:3px;top:19.4px" width="32" height="32" viewBox="0 0 32 32"><rect width="32" height="32" fill="#d6d6d6"/><path d="M9.7 17.4h1.3M23.8 11.8h1.3M23.1 18.8h1.0M7.9 11.6h0.8M20.4 13.5h1.3M7.1 28.9h0.8M25.0 20.6h1.3M13.1 24.3h1.0M9.5 11.8h1.0M22.0 25.2h0.8M12.0 12.2h1.0M7.0 8.0h1.3M11.0 26.4h0.8M28.8 21.1h0.8M23.4 8.0h0.8M25.5 6.2h1.0M9.2 19.7h1.0M13.7 7.1h1.0M8.0 9.8h0.8M10.1 9.3h1.0M10.4 15.9h1.3M11.1 16.0h1.0M23.5 20.8h1.0M24.9 16.9h1.0M13.0 26.4h1.3M22.4 12.1h1.0M22.1 12.9h1.0M8.9 11.4h1.3M10.2 24.1h1.3M25.1 5.0h1.3M18.8 10.5h1.0M21.8 21.1h1.0M22.7 7.6h0.8M10.9 23.9h1.3M18.4 10.1h1.3M26.2 5.1h1.0M19.1 25.6h1.0M23.9 4.8h1.3M14.4 26.1h0.8M15.6 11.5h1.0M23.2 25.1h1.3M11.2 25.6h1.3M14.4 26.8h1.3M20.1 22.9h1.0M9.3 14.4h1.0M9.0 8.7h0.8M9.6 13.3h1.3M27.1 9.0h1.3M10.0 11.0h1.3M17.4 27.7h1.0M16.3 26.9h0.8M21.0 27.9h1.0M25.9 4.6h1.0M23.5 19.8h1.3M21.6 24.0h1.3M9.8 13.8h1.3M6.1 9.5h1.0M24.0 25.2h0.8M8.2 11.6h0.8M9.6 18.0h0.8M23.2 4.2h0.8M24.7 17.7h1.3M8.5 18.9h1.0M9.2 8.5h1.0M8.1 6.8h0.8M25.8 4.3h1.3M10.5 13.0h1.0M21.6 11.8h1.0M9.8 5.7h0.8M8.8 6.5h0.8M12.7 27.2h1.0M13.3 12.7h1.3M21.9 12.7h1.3M7.3 17.4h1.0M16.9 13.8h0.8M8.8 10.1h0.8M21.2 12.7h1.0M27.8 18.6h0.8M16.9 11.7h1.3M7.6 6.7h1.3M13.6 23.3h0.8M19.8 15.3h1.3M13.2 12.9h1.0M17.5 29.1h1.0M10.3 14.5h0.8M10.0 9.2h1.3M8.7 12.1h0.8M8.7 9.2h1.3M23.2 6.8h1.3M11.3 15.8h1.0M20.9 12.7h1.0M11.0 10.2h1.0M9.8 16.4h0.8M17.6 9.3h1.0M26.9 5.6h1.3M22.8 9.5h1.0M25.9 4.2h0.8M19.9 24.0h0.8M25.2 9.5h0.8M6.6 19.8h1.3M26.4 9.9h0.8M11.5 21.1h1.3M6.1 10.1h1.0M8.5 21.1h0.8M9.9 21.3h1.0M11.1 13.4h0.8M6.5 5.2h0.8M10.3 10.3h1.3M11.1 13.3h1.3M20.6 14.6h1.0M23.0 11.1h1.0M13.5 26.9h1.3M24.4 5.9h0.8M10.3 15.1h1.3M12.3 25.0h1.3M18.3 24.0h1.0M20.5 27.2h1.3M10.5 12.5h1.0M21.8 25.1h1.0M8.1 6.2h1.0M14.7 24.8h0.8M10.9 14.6h0.8M23.5 10.4h1.3M9.2 22.5h1.3M11.9 16.0h1.0M17.2 7.6h0.8M16.0 26.3h1.0M27.7 13.3h1.3M11.0 16.4h1.3M24.3 8.6h1.3M11.6 14.5h0.8M20.2 16.3h1.3M25.1 6.4h1.3M27.6 6.0h1.0M26.2 6.7h0.8M25.4 6.0h0.8M6.7 4.8h1.0M26.0 5.5h0.8M21.5 13.6h0.8M14.4 23.4h1.0M17.3 14.1h1.3M6.4 19.2h1.3M21.0 12.9h0.8M10.9 12.7h0.8M24.5 8.0h1.3M11.6 15.8h1.0M9.3 20.5h0.8M22.4 19.8h1.3M21.5 23.1h0.8M8.2 5.5h1.0" stroke="#2a2a2a" stroke-width=".9" fill="none" opacity=".8"/></svg>
<div class="t dk" style="transform:scaleX(0.920);left:41px;top:27.4px;color:#ececec">Set point type</div>
<svg style="left:3px;top:53.4px" width="32" height="32" viewBox="0 0 32 32"><rect width="32" height="32" fill="#d6d6d6"/><path d="M9.7 17.4h1.3M23.8 11.8h1.3M23.1 18.8h1.0M7.9 11.6h0.8M20.4 13.5h1.3M7.1 28.9h0.8M25.0 20.6h1.3M13.1 24.3h1.0M9.5 11.8h1.0M22.0 25.2h0.8M12.0 12.2h1.0M7.0 8.0h1.3M11.0 26.4h0.8M28.8 21.1h0.8M23.4 8.0h0.8M25.5 6.2h1.0M9.2 19.7h1.0M13.7 7.1h1.0M8.0 9.8h0.8M10.1 9.3h1.0M10.4 15.9h1.3M11.1 16.0h1.0M23.5 20.8h1.0M24.9 16.9h1.0M13.0 26.4h1.3M22.4 12.1h1.0M22.1 12.9h1.0M8.9 11.4h1.3M10.2 24.1h1.3M25.1 5.0h1.3M18.8 10.5h1.0M21.8 21.1h1.0M22.7 7.6h0.8M10.9 23.9h1.3M18.4 10.1h1.3M26.2 5.1h1.0M19.1 25.6h1.0M23.9 4.8h1.3M14.4 26.1h0.8M15.6 11.5h1.0M23.2 25.1h1.3M11.2 25.6h1.3M14.4 26.8h1.3M20.1 22.9h1.0M9.3 14.4h1.0M9.0 8.7h0.8M9.6 13.3h1.3M27.1 9.0h1.3M10.0 11.0h1.3M17.4 27.7h1.0M16.3 26.9h0.8M21.0 27.9h1.0M25.9 4.6h1.0M23.5 19.8h1.3M21.6 24.0h1.3M9.8 13.8h1.3M6.1 9.5h1.0M24.0 25.2h0.8M8.2 11.6h0.8M9.6 18.0h0.8M23.2 4.2h0.8M24.7 17.7h1.3M8.5 18.9h1.0M9.2 8.5h1.0M8.1 6.8h0.8M25.8 4.3h1.3M10.5 13.0h1.0M21.6 11.8h1.0M9.8 5.7h0.8M8.8 6.5h0.8M12.7 27.2h1.0M13.3 12.7h1.3M21.9 12.7h1.3M7.3 17.4h1.0M16.9 13.8h0.8M8.8 10.1h0.8M21.2 12.7h1.0M27.8 18.6h0.8M16.9 11.7h1.3M7.6 6.7h1.3M13.6 23.3h0.8M19.8 15.3h1.3M13.2 12.9h1.0M17.5 29.1h1.0M10.3 14.5h0.8M10.0 9.2h1.3M8.7 12.1h0.8M8.7 9.2h1.3M23.2 6.8h1.3M11.3 15.8h1.0M20.9 12.7h1.0M11.0 10.2h1.0M9.8 16.4h0.8M17.6 9.3h1.0M26.9 5.6h1.3M22.8 9.5h1.0M25.9 4.2h0.8M19.9 24.0h0.8M25.2 9.5h0.8M6.6 19.8h1.3M26.4 9.9h0.8M11.5 21.1h1.3M6.1 10.1h1.0M8.5 21.1h0.8M9.9 21.3h1.0M11.1 13.4h0.8M6.5 5.2h0.8M10.3 10.3h1.3M11.1 13.3h1.3M20.6 14.6h1.0M23.0 11.1h1.0M13.5 26.9h1.3M24.4 5.9h0.8M10.3 15.1h1.3M12.3 25.0h1.3M18.3 24.0h1.0M20.5 27.2h1.3M10.5 12.5h1.0M21.8 25.1h1.0M8.1 6.2h1.0M14.7 24.8h0.8M10.9 14.6h0.8M23.5 10.4h1.3M9.2 22.5h1.3M11.9 16.0h1.0M17.2 7.6h0.8M16.0 26.3h1.0M27.7 13.3h1.3M11.0 16.4h1.3M24.3 8.6h1.3M11.6 14.5h0.8M20.2 16.3h1.3M25.1 6.4h1.3M27.6 6.0h1.0M26.2 6.7h0.8M25.4 6.0h0.8M6.7 4.8h1.0M26.0 5.5h0.8M21.5 13.6h0.8M14.4 23.4h1.0M17.3 14.1h1.3M6.4 19.2h1.3M21.0 12.9h0.8M10.9 12.7h0.8M24.5 8.0h1.3M11.6 15.8h1.0M9.3 20.5h0.8M22.4 19.8h1.3M21.5 23.1h0.8M8.2 5.5h1.0" stroke="#2a2a2a" stroke-width=".9" fill="none" opacity=".8"/></svg>
<div class="t dk" style="transform:scaleX(0.938);left:41px;top:61.4px;color:#ececec">Move control point</div>
<svg style="left:3px;top:87.4px" width="32" height="32" viewBox="0 0 32 32"><rect width="32" height="32" fill="#d6d6d6"/><path d="M9.7 17.4h1.3M23.8 11.8h1.3M23.1 18.8h1.0M7.9 11.6h0.8M20.4 13.5h1.3M7.1 28.9h0.8M25.0 20.6h1.3M13.1 24.3h1.0M9.5 11.8h1.0M22.0 25.2h0.8M12.0 12.2h1.0M7.0 8.0h1.3M11.0 26.4h0.8M28.8 21.1h0.8M23.4 8.0h0.8M25.5 6.2h1.0M9.2 19.7h1.0M13.7 7.1h1.0M8.0 9.8h0.8M10.1 9.3h1.0M10.4 15.9h1.3M11.1 16.0h1.0M23.5 20.8h1.0M24.9 16.9h1.0M13.0 26.4h1.3M22.4 12.1h1.0M22.1 12.9h1.0M8.9 11.4h1.3M10.2 24.1h1.3M25.1 5.0h1.3M18.8 10.5h1.0M21.8 21.1h1.0M22.7 7.6h0.8M10.9 23.9h1.3M18.4 10.1h1.3M26.2 5.1h1.0M19.1 25.6h1.0M23.9 4.8h1.3M14.4 26.1h0.8M15.6 11.5h1.0M23.2 25.1h1.3M11.2 25.6h1.3M14.4 26.8h1.3M20.1 22.9h1.0M9.3 14.4h1.0M9.0 8.7h0.8M9.6 13.3h1.3M27.1 9.0h1.3M10.0 11.0h1.3M17.4 27.7h1.0M16.3 26.9h0.8M21.0 27.9h1.0M25.9 4.6h1.0M23.5 19.8h1.3M21.6 24.0h1.3M9.8 13.8h1.3M6.1 9.5h1.0M24.0 25.2h0.8M8.2 11.6h0.8M9.6 18.0h0.8M23.2 4.2h0.8M24.7 17.7h1.3M8.5 18.9h1.0M9.2 8.5h1.0M8.1 6.8h0.8M25.8 4.3h1.3M10.5 13.0h1.0M21.6 11.8h1.0M9.8 5.7h0.8M8.8 6.5h0.8M12.7 27.2h1.0M13.3 12.7h1.3M21.9 12.7h1.3M7.3 17.4h1.0M16.9 13.8h0.8M8.8 10.1h0.8M21.2 12.7h1.0M27.8 18.6h0.8M16.9 11.7h1.3M7.6 6.7h1.3M13.6 23.3h0.8M19.8 15.3h1.3M13.2 12.9h1.0M17.5 29.1h1.0M10.3 14.5h0.8M10.0 9.2h1.3M8.7 12.1h0.8M8.7 9.2h1.3M23.2 6.8h1.3M11.3 15.8h1.0M20.9 12.7h1.0M11.0 10.2h1.0M9.8 16.4h0.8M17.6 9.3h1.0M26.9 5.6h1.3M22.8 9.5h1.0M25.9 4.2h0.8M19.9 24.0h0.8M25.2 9.5h0.8M6.6 19.8h1.3M26.4 9.9h0.8M11.5 21.1h1.3M6.1 10.1h1.0M8.5 21.1h0.8M9.9 21.3h1.0M11.1 13.4h0.8M6.5 5.2h0.8M10.3 10.3h1.3M11.1 13.3h1.3M20.6 14.6h1.0M23.0 11.1h1.0M13.5 26.9h1.3M24.4 5.9h0.8M10.3 15.1h1.3M12.3 25.0h1.3M18.3 24.0h1.0M20.5 27.2h1.3M10.5 12.5h1.0M21.8 25.1h1.0M8.1 6.2h1.0M14.7 24.8h0.8M10.9 14.6h0.8M23.5 10.4h1.3M9.2 22.5h1.3M11.9 16.0h1.0M17.2 7.6h0.8M16.0 26.3h1.0M27.7 13.3h1.3M11.0 16.4h1.3M24.3 8.6h1.3M11.6 14.5h0.8M20.2 16.3h1.3M25.1 6.4h1.3M27.6 6.0h1.0M26.2 6.7h0.8M25.4 6.0h0.8M6.7 4.8h1.0M26.0 5.5h0.8M21.5 13.6h0.8M14.4 23.4h1.0M17.3 14.1h1.3M6.4 19.2h1.3M21.0 12.9h0.8M10.9 12.7h0.8M24.5 8.0h1.3M11.6 15.8h1.0M9.3 20.5h0.8M22.4 19.8h1.3M21.5 23.1h0.8M8.2 5.5h1.0" stroke="#2a2a2a" stroke-width=".9" fill="none" opacity=".8"/></svg>
<div class="t dk" style="transform:scaleX(0.899);left:41px;top:95.4px;color:#ececec">Change Segment</div>
<svg style="left:3px;top:121.4px" width="32" height="32" viewBox="0 0 32 32"><rect width="32" height="32" fill="#d6d6d6"/><path d="M9.7 17.4h1.3M23.8 11.8h1.3M23.1 18.8h1.0M7.9 11.6h0.8M20.4 13.5h1.3M7.1 28.9h0.8M25.0 20.6h1.3M13.1 24.3h1.0M9.5 11.8h1.0M22.0 25.2h0.8M12.0 12.2h1.0M7.0 8.0h1.3M11.0 26.4h0.8M28.8 21.1h0.8M23.4 8.0h0.8M25.5 6.2h1.0M9.2 19.7h1.0M13.7 7.1h1.0M8.0 9.8h0.8M10.1 9.3h1.0M10.4 15.9h1.3M11.1 16.0h1.0M23.5 20.8h1.0M24.9 16.9h1.0M13.0 26.4h1.3M22.4 12.1h1.0M22.1 12.9h1.0M8.9 11.4h1.3M10.2 24.1h1.3M25.1 5.0h1.3M18.8 10.5h1.0M21.8 21.1h1.0M22.7 7.6h0.8M10.9 23.9h1.3M18.4 10.1h1.3M26.2 5.1h1.0M19.1 25.6h1.0M23.9 4.8h1.3M14.4 26.1h0.8M15.6 11.5h1.0M23.2 25.1h1.3M11.2 25.6h1.3M14.4 26.8h1.3M20.1 22.9h1.0M9.3 14.4h1.0M9.0 8.7h0.8M9.6 13.3h1.3M27.1 9.0h1.3M10.0 11.0h1.3M17.4 27.7h1.0M16.3 26.9h0.8M21.0 27.9h1.0M25.9 4.6h1.0M23.5 19.8h1.3M21.6 24.0h1.3M9.8 13.8h1.3M6.1 9.5h1.0M24.0 25.2h0.8M8.2 11.6h0.8M9.6 18.0h0.8M23.2 4.2h0.8M24.7 17.7h1.3M8.5 18.9h1.0M9.2 8.5h1.0M8.1 6.8h0.8M25.8 4.3h1.3M10.5 13.0h1.0M21.6 11.8h1.0M9.8 5.7h0.8M8.8 6.5h0.8M12.7 27.2h1.0M13.3 12.7h1.3M21.9 12.7h1.3M7.3 17.4h1.0M16.9 13.8h0.8M8.8 10.1h0.8M21.2 12.7h1.0M27.8 18.6h0.8M16.9 11.7h1.3M7.6 6.7h1.3M13.6 23.3h0.8M19.8 15.3h1.3M13.2 12.9h1.0M17.5 29.1h1.0M10.3 14.5h0.8M10.0 9.2h1.3M8.7 12.1h0.8M8.7 9.2h1.3M23.2 6.8h1.3M11.3 15.8h1.0M20.9 12.7h1.0M11.0 10.2h1.0M9.8 16.4h0.8M17.6 9.3h1.0M26.9 5.6h1.3M22.8 9.5h1.0M25.9 4.2h0.8M19.9 24.0h0.8M25.2 9.5h0.8M6.6 19.8h1.3M26.4 9.9h0.8M11.5 21.1h1.3M6.1 10.1h1.0M8.5 21.1h0.8M9.9 21.3h1.0M11.1 13.4h0.8M6.5 5.2h0.8M10.3 10.3h1.3M11.1 13.3h1.3M20.6 14.6h1.0M23.0 11.1h1.0M13.5 26.9h1.3M24.4 5.9h0.8M10.3 15.1h1.3M12.3 25.0h1.3M18.3 24.0h1.0M20.5 27.2h1.3M10.5 12.5h1.0M21.8 25.1h1.0M8.1 6.2h1.0M14.7 24.8h0.8M10.9 14.6h0.8M23.5 10.4h1.3M9.2 22.5h1.3M11.9 16.0h1.0M17.2 7.6h0.8M16.0 26.3h1.0M27.7 13.3h1.3M11.0 16.4h1.3M24.3 8.6h1.3M11.6 14.5h0.8M20.2 16.3h1.3M25.1 6.4h1.3M27.6 6.0h1.0M26.2 6.7h0.8M25.4 6.0h0.8M6.7 4.8h1.0M26.0 5.5h0.8M21.5 13.6h0.8M14.4 23.4h1.0M17.3 14.1h1.3M6.4 19.2h1.3M21.0 12.9h0.8M10.9 12.7h0.8M24.5 8.0h1.3M11.6 15.8h1.0M9.3 20.5h0.8M22.4 19.8h1.3M21.5 23.1h0.8M8.2 5.5h1.0" stroke="#2a2a2a" stroke-width=".9" fill="none" opacity=".8"/></svg>
<div class="t dk" style="transform:scaleX(0.933);left:41px;top:129.4px;color:#ececec">Insert points</div>
<svg style="left:3px;top:155.4px" width="32" height="32" viewBox="0 0 32 32"><rect width="32" height="32" fill="#d6d6d6"/><path d="M9.7 17.4h1.3M23.8 11.8h1.3M23.1 18.8h1.0M7.9 11.6h0.8M20.4 13.5h1.3M7.1 28.9h0.8M25.0 20.6h1.3M13.1 24.3h1.0M9.5 11.8h1.0M22.0 25.2h0.8M12.0 12.2h1.0M7.0 8.0h1.3M11.0 26.4h0.8M28.8 21.1h0.8M23.4 8.0h0.8M25.5 6.2h1.0M9.2 19.7h1.0M13.7 7.1h1.0M8.0 9.8h0.8M10.1 9.3h1.0M10.4 15.9h1.3M11.1 16.0h1.0M23.5 20.8h1.0M24.9 16.9h1.0M13.0 26.4h1.3M22.4 12.1h1.0M22.1 12.9h1.0M8.9 11.4h1.3M10.2 24.1h1.3M25.1 5.0h1.3M18.8 10.5h1.0M21.8 21.1h1.0M22.7 7.6h0.8M10.9 23.9h1.3M18.4 10.1h1.3M26.2 5.1h1.0M19.1 25.6h1.0M23.9 4.8h1.3M14.4 26.1h0.8M15.6 11.5h1.0M23.2 25.1h1.3M11.2 25.6h1.3M14.4 26.8h1.3M20.1 22.9h1.0M9.3 14.4h1.0M9.0 8.7h0.8M9.6 13.3h1.3M27.1 9.0h1.3M10.0 11.0h1.3M17.4 27.7h1.0M16.3 26.9h0.8M21.0 27.9h1.0M25.9 4.6h1.0M23.5 19.8h1.3M21.6 24.0h1.3M9.8 13.8h1.3M6.1 9.5h1.0M24.0 25.2h0.8M8.2 11.6h0.8M9.6 18.0h0.8M23.2 4.2h0.8M24.7 17.7h1.3M8.5 18.9h1.0M9.2 8.5h1.0M8.1 6.8h0.8M25.8 4.3h1.3M10.5 13.0h1.0M21.6 11.8h1.0M9.8 5.7h0.8M8.8 6.5h0.8M12.7 27.2h1.0M13.3 12.7h1.3M21.9 12.7h1.3M7.3 17.4h1.0M16.9 13.8h0.8M8.8 10.1h0.8M21.2 12.7h1.0M27.8 18.6h0.8M16.9 11.7h1.3M7.6 6.7h1.3M13.6 23.3h0.8M19.8 15.3h1.3M13.2 12.9h1.0M17.5 29.1h1.0M10.3 14.5h0.8M10.0 9.2h1.3M8.7 12.1h0.8M8.7 9.2h1.3M23.2 6.8h1.3M11.3 15.8h1.0M20.9 12.7h1.0M11.0 10.2h1.0M9.8 16.4h0.8M17.6 9.3h1.0M26.9 5.6h1.3M22.8 9.5h1.0M25.9 4.2h0.8M19.9 24.0h0.8M25.2 9.5h0.8M6.6 19.8h1.3M26.4 9.9h0.8M11.5 21.1h1.3M6.1 10.1h1.0M8.5 21.1h0.8M9.9 21.3h1.0M11.1 13.4h0.8M6.5 5.2h0.8M10.3 10.3h1.3M11.1 13.3h1.3M20.6 14.6h1.0M23.0 11.1h1.0M13.5 26.9h1.3M24.4 5.9h0.8M10.3 15.1h1.3M12.3 25.0h1.3M18.3 24.0h1.0M20.5 27.2h1.3M10.5 12.5h1.0M21.8 25.1h1.0M8.1 6.2h1.0M14.7 24.8h0.8M10.9 14.6h0.8M23.5 10.4h1.3M9.2 22.5h1.3M11.9 16.0h1.0M17.2 7.6h0.8M16.0 26.3h1.0M27.7 13.3h1.3M11.0 16.4h1.3M24.3 8.6h1.3M11.6 14.5h0.8M20.2 16.3h1.3M25.1 6.4h1.3M27.6 6.0h1.0M26.2 6.7h0.8M25.4 6.0h0.8M6.7 4.8h1.0M26.0 5.5h0.8M21.5 13.6h0.8M14.4 23.4h1.0M17.3 14.1h1.3M6.4 19.2h1.3M21.0 12.9h0.8M10.9 12.7h0.8M24.5 8.0h1.3M11.6 15.8h1.0M9.3 20.5h0.8M22.4 19.8h1.3M21.5 23.1h0.8M8.2 5.5h1.0" stroke="#2a2a2a" stroke-width=".9" fill="none" opacity=".8"/></svg>
<div class="t dk" style="transform:scaleX(0.920);left:41px;top:163.4px;color:#ececec">Set point type</div>
<svg style="left:3px;top:189.4px" width="32" height="32" viewBox="0 0 32 32"><rect width="32" height="32" fill="#d6d6d6"/><path d="M9.7 17.4h1.3M23.8 11.8h1.3M23.1 18.8h1.0M7.9 11.6h0.8M20.4 13.5h1.3M7.1 28.9h0.8M25.0 20.6h1.3M13.1 24.3h1.0M9.5 11.8h1.0M22.0 25.2h0.8M12.0 12.2h1.0M7.0 8.0h1.3M11.0 26.4h0.8M28.8 21.1h0.8M23.4 8.0h0.8M25.5 6.2h1.0M9.2 19.7h1.0M13.7 7.1h1.0M8.0 9.8h0.8M10.1 9.3h1.0M10.4 15.9h1.3M11.1 16.0h1.0M23.5 20.8h1.0M24.9 16.9h1.0M13.0 26.4h1.3M22.4 12.1h1.0M22.1 12.9h1.0M8.9 11.4h1.3M10.2 24.1h1.3M25.1 5.0h1.3M18.8 10.5h1.0M21.8 21.1h1.0M22.7 7.6h0.8M10.9 23.9h1.3M18.4 10.1h1.3M26.2 5.1h1.0M19.1 25.6h1.0M23.9 4.8h1.3M14.4 26.1h0.8M15.6 11.5h1.0M23.2 25.1h1.3M11.2 25.6h1.3M14.4 26.8h1.3M20.1 22.9h1.0M9.3 14.4h1.0M9.0 8.7h0.8M9.6 13.3h1.3M27.1 9.0h1.3M10.0 11.0h1.3M17.4 27.7h1.0M16.3 26.9h0.8M21.0 27.9h1.0M25.9 4.6h1.0M23.5 19.8h1.3M21.6 24.0h1.3M9.8 13.8h1.3M6.1 9.5h1.0M24.0 25.2h0.8M8.2 11.6h0.8M9.6 18.0h0.8M23.2 4.2h0.8M24.7 17.7h1.3M8.5 18.9h1.0M9.2 8.5h1.0M8.1 6.8h0.8M25.8 4.3h1.3M10.5 13.0h1.0M21.6 11.8h1.0M9.8 5.7h0.8M8.8 6.5h0.8M12.7 27.2h1.0M13.3 12.7h1.3M21.9 12.7h1.3M7.3 17.4h1.0M16.9 13.8h0.8M8.8 10.1h0.8M21.2 12.7h1.0M27.8 18.6h0.8M16.9 11.7h1.3M7.6 6.7h1.3M13.6 23.3h0.8M19.8 15.3h1.3M13.2 12.9h1.0M17.5 29.1h1.0M10.3 14.5h0.8M10.0 9.2h1.3M8.7 12.1h0.8M8.7 9.2h1.3M23.2 6.8h1.3M11.3 15.8h1.0M20.9 12.7h1.0M11.0 10.2h1.0M9.8 16.4h0.8M17.6 9.3h1.0M26.9 5.6h1.3M22.8 9.5h1.0M25.9 4.2h0.8M19.9 24.0h0.8M25.2 9.5h0.8M6.6 19.8h1.3M26.4 9.9h0.8M11.5 21.1h1.3M6.1 10.1h1.0M8.5 21.1h0.8M9.9 21.3h1.0M11.1 13.4h0.8M6.5 5.2h0.8M10.3 10.3h1.3M11.1 13.3h1.3M20.6 14.6h1.0M23.0 11.1h1.0M13.5 26.9h1.3M24.4 5.9h0.8M10.3 15.1h1.3M12.3 25.0h1.3M18.3 24.0h1.0M20.5 27.2h1.3M10.5 12.5h1.0M21.8 25.1h1.0M8.1 6.2h1.0M14.7 24.8h0.8M10.9 14.6h0.8M23.5 10.4h1.3M9.2 22.5h1.3M11.9 16.0h1.0M17.2 7.6h0.8M16.0 26.3h1.0M27.7 13.3h1.3M11.0 16.4h1.3M24.3 8.6h1.3M11.6 14.5h0.8M20.2 16.3h1.3M25.1 6.4h1.3M27.6 6.0h1.0M26.2 6.7h0.8M25.4 6.0h0.8M6.7 4.8h1.0M26.0 5.5h0.8M21.5 13.6h0.8M14.4 23.4h1.0M17.3 14.1h1.3M6.4 19.2h1.3M21.0 12.9h0.8M10.9 12.7h0.8M24.5 8.0h1.3M11.6 15.8h1.0M9.3 20.5h0.8M22.4 19.8h1.3M21.5 23.1h0.8M8.2 5.5h1.0" stroke="#2a2a2a" stroke-width=".9" fill="none" opacity=".8"/></svg>
<div class="t dk" style="transform:scaleX(0.938);left:41px;top:197.4px;color:#ececec">Move control point</div>
<div class="a" style="left:0;top:222.4px;width:243px;height:34px;background:#56799d"></div>
<svg style="left:3px;top:223.4px" width="32" height="32" viewBox="0 0 32 32"><rect width="32" height="32" fill="#c9d6e2"/><path d="M9.7 17.4h1.3M23.8 11.8h1.3M23.1 18.8h1.0M7.9 11.6h0.8M20.4 13.5h1.3M7.1 28.9h0.8M25.0 20.6h1.3M13.1 24.3h1.0M9.5 11.8h1.0M22.0 25.2h0.8M12.0 12.2h1.0M7.0 8.0h1.3M11.0 26.4h0.8M28.8 21.1h0.8M23.4 8.0h0.8M25.5 6.2h1.0M9.2 19.7h1.0M13.7 7.1h1.0M8.0 9.8h0.8M10.1 9.3h1.0M10.4 15.9h1.3M11.1 16.0h1.0M23.5 20.8h1.0M24.9 16.9h1.0M13.0 26.4h1.3M22.4 12.1h1.0M22.1 12.9h1.0M8.9 11.4h1.3M10.2 24.1h1.3M25.1 5.0h1.3M18.8 10.5h1.0M21.8 21.1h1.0M22.7 7.6h0.8M10.9 23.9h1.3M18.4 10.1h1.3M26.2 5.1h1.0M19.1 25.6h1.0M23.9 4.8h1.3M14.4 26.1h0.8M15.6 11.5h1.0M23.2 25.1h1.3M11.2 25.6h1.3M14.4 26.8h1.3M20.1 22.9h1.0M9.3 14.4h1.0M9.0 8.7h0.8M9.6 13.3h1.3M27.1 9.0h1.3M10.0 11.0h1.3M17.4 27.7h1.0M16.3 26.9h0.8M21.0 27.9h1.0M25.9 4.6h1.0M23.5 19.8h1.3M21.6 24.0h1.3M9.8 13.8h1.3M6.1 9.5h1.0M24.0 25.2h0.8M8.2 11.6h0.8M9.6 18.0h0.8M23.2 4.2h0.8M24.7 17.7h1.3M8.5 18.9h1.0M9.2 8.5h1.0M8.1 6.8h0.8M25.8 4.3h1.3M10.5 13.0h1.0M21.6 11.8h1.0M9.8 5.7h0.8M8.8 6.5h0.8M12.7 27.2h1.0M13.3 12.7h1.3M21.9 12.7h1.3M7.3 17.4h1.0M16.9 13.8h0.8M8.8 10.1h0.8M21.2 12.7h1.0M27.8 18.6h0.8M16.9 11.7h1.3M7.6 6.7h1.3M13.6 23.3h0.8M19.8 15.3h1.3M13.2 12.9h1.0M17.5 29.1h1.0M10.3 14.5h0.8M10.0 9.2h1.3M8.7 12.1h0.8M8.7 9.2h1.3M23.2 6.8h1.3M11.3 15.8h1.0M20.9 12.7h1.0M11.0 10.2h1.0M9.8 16.4h0.8M17.6 9.3h1.0M26.9 5.6h1.3M22.8 9.5h1.0M25.9 4.2h0.8M19.9 24.0h0.8M25.2 9.5h0.8M6.6 19.8h1.3M26.4 9.9h0.8M11.5 21.1h1.3M6.1 10.1h1.0M8.5 21.1h0.8M9.9 21.3h1.0M11.1 13.4h0.8M6.5 5.2h0.8M10.3 10.3h1.3M11.1 13.3h1.3M20.6 14.6h1.0M23.0 11.1h1.0M13.5 26.9h1.3M24.4 5.9h0.8M10.3 15.1h1.3M12.3 25.0h1.3M18.3 24.0h1.0M20.5 27.2h1.3M10.5 12.5h1.0M21.8 25.1h1.0M8.1 6.2h1.0M14.7 24.8h0.8M10.9 14.6h0.8M23.5 10.4h1.3M9.2 22.5h1.3M11.9 16.0h1.0M17.2 7.6h0.8M16.0 26.3h1.0M27.7 13.3h1.3M11.0 16.4h1.3M24.3 8.6h1.3M11.6 14.5h0.8M20.2 16.3h1.3M25.1 6.4h1.3M27.6 6.0h1.0M26.2 6.7h0.8M25.4 6.0h0.8M6.7 4.8h1.0M26.0 5.5h0.8M21.5 13.6h0.8M14.4 23.4h1.0M17.3 14.1h1.3M6.4 19.2h1.3M21.0 12.9h0.8M10.9 12.7h0.8M24.5 8.0h1.3M11.6 15.8h1.0M9.3 20.5h0.8M22.4 19.8h1.3M21.5 23.1h0.8M8.2 5.5h1.0" stroke="#2a2a2a" stroke-width=".9" fill="none" opacity=".8"/></svg>
<div class="t dk" style="transform:scaleX(0.938);left:41px;top:231.4px;color:#ececec">Move control point</div>
</div>
<div class="a" style="left:1339px;top:469.500px;width:15px;height:255.500px;background:#414142"></div>
<div class="a" style="left:1341px;top:469.500px;width:12px;height:13px;border:1px solid #555"></div>
<svg style="left:1342.500px;top:473px" width="9" height="6" viewBox="0 0 9 6"><path d="M.5 5.500h8L4.500.5z" fill="#b4b4b4"/></svg>
<div class="a" style="left:1340.500px;top:678px;width:13px;height:31px;background:#4c4c4d;border:1px solid #5c5c5d;border-radius:2px"></div>
<svg style="left:1342.500px;top:715px" width="9" height="6" viewBox="0 0 9 6"><path d="M.5.500h8L4.500 5.500z" fill="#b4b4b4"/></svg>
<!-- status bar -->
<div class="a" style="left:12px;top:725px;width:1342px;height:31px;background:#474748"></div>
<svg style="left:19px;top:733px" width="15" height="15" viewBox="0 0 15 15"><rect x=".6" y=".6" width="13.800" height="13.800" fill="none" stroke="#dcdcdc" stroke-width="1.100"/><circle cx="7.500" cy="7.500" r="4" fill="none" stroke="#dcdcdc" stroke-width="1.300" stroke-dasharray="1.200 1.600"/></svg>
<div class="t dk" style="transform:scaleX(0.994);left:49px;top:734px">Press Ctrl+B to br…at selected point.</div>
<div class="t dk" style="transform:scaleX(1.001);left:270px;top:734px">RGB/Alpha (8-bit integer/cha…l)&nbsp; sRGB-elle-V2-srgbtrc.icc</div>
<div class="a" style="left:880.500px;top:731px;width:134.500px;height:20.500px;border:1px solid #5a5a5b;border-radius:2px;background:#444445"></div>
<div class="t dk" style="transform:scaleX(0.890);left:884px;top:734px;font-size:12.500px">3,414 <u>x</u> 4,251 (126.1 MiB)</div>
<div class="a" style="left:1024px;top:731px;width:20px;height:20px;border-radius:50%;background:#303031"></div>
<svg style="left:1028px;top:737.500px" width="13" height="7" viewBox="0 0 13 7"><path d="M1 3.500h11M3 1.500l-2 2 2 2M10 1.500l2 2-2 2" fill="none" stroke="#dcdcdc" stroke-width="1"/></svg>
<div class="t dk" style="transform:scaleX(0.869);left:1053.300px;top:734px;font-size:12.500px">0.00°</div>
<div class="t dk" style="transform:scaleX(0.987);left:1193.300px;top:734px;font-size:12.500px">25.0%</div>
<div class="a" style="left:1247px;top:740.500px;width:78px;height:2px;background:#3a3a3b"></div>
<div class="a" style="left:1247px;top:740px;width:20px;height:3px;background:#6f9cc8"></div>
<div class="a" style="left:1263.500px;top:736px;width:9px;height:11px;background:#5a5a5b;border:1px solid #6a6a6b;border-radius:2px"></div>
<svg style="left:1334px;top:735px" width="16" height="15" viewBox="0 0 16 15"><rect x=".7" y=".7" width="14.600" height="9.600" fill="none" stroke="#dcdcdc" stroke-width="1.200"/><path d="M8 10.500V13.500M4 14h8M8 3.500v4M6 5.500h4" stroke="#dcdcdc" stroke-width="1.200"/></svg>
<div class="t" style="transform:scaleX(0.774);left:884px;top:696px;height:66px;line-height:66px;font-size:66px;font-weight:bold;color:#161616;opacity:.36;-webkit-text-stroke:2px #161616">made</div>
<div class="t" style="transform:scaleX(0.857);left:1018.500px;top:696px;height:66px;line-height:66px;font-size:66px;font-weight:bold;color:#161616;opacity:.36;-webkit-text-stroke:2px #161616">by</div>
<div class="t" style="transform:scaleX(0.778);left:1087.500px;top:696px;height:66px;line-height:66px;font-size:66px;font-weight:bold;color:#161616;opacity:.36;-webkit-text-stroke:2px #161616">romeo</div>
<div class="t" style="left:1262.500px;top:696px;height:66px;line-height:66px;font-size:66px;font-weight:bold;color:#161616;opacity:.36;-webkit-text-stroke:2px #161616;letter-spacing:11px;transform:scaleX(.7)">L24</div>
</body></html>
